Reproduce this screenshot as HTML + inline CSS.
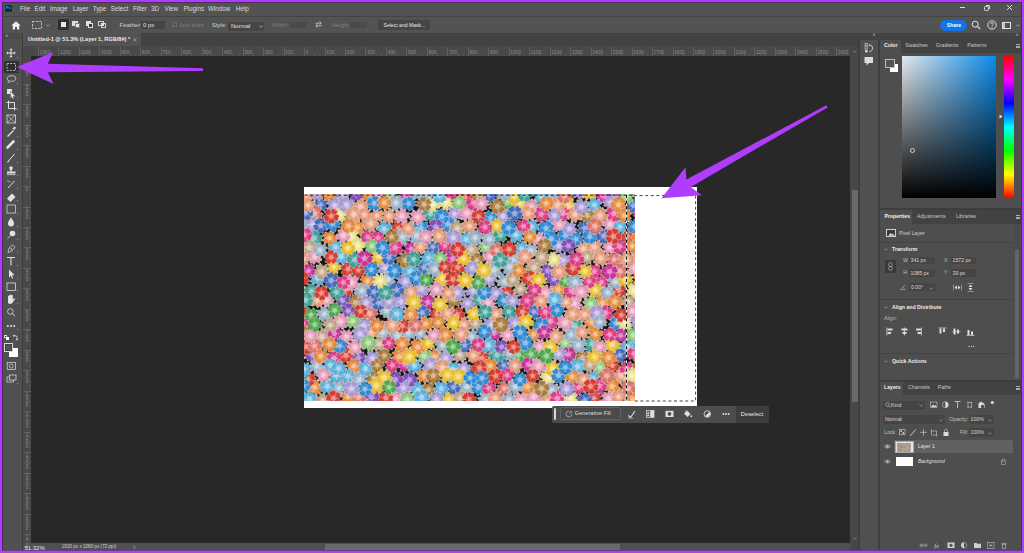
<!DOCTYPE html>
<html><head><meta charset="utf-8">
<style>
*{margin:0;padding:0;box-sizing:border-box}
html,body{width:1024px;height:553px;overflow:hidden;background:#b03cfd}
body{position:relative;font-family:"Liberation Sans",sans-serif;color:#e6e6e6}
.a{position:absolute}
.t{position:absolute;white-space:nowrap;line-height:1}
#app{position:absolute;left:2px;top:2px;width:1020px;height:548px;background:#535353;overflow:hidden}
</style></head><body>
<div id="app">
</div>
<!-- coordinates below are page coordinates -->
<!-- menu bar -->
<div class="a" style="left:2px;top:2px;width:1020px;height:15px;background:#535353"></div>
<div class="a" style="left:2px;top:16px;width:1020px;height:1px;background:#444444"></div>
<!-- options bar -->
<div class="a" style="left:2px;top:17px;width:1020px;height:16px;background:#535353"></div>
<!-- tool bar -->
<div class="a" style="left:2px;top:33px;width:20px;height:517px;background:#505050"></div>
<div class="a" style="left:22px;top:33px;width:1px;height:517px;background:#3c3c3c"></div>
<!-- tab bar -->
<div class="a" style="left:23px;top:33px;width:837px;height:13px;background:#434343"></div>
<div class="a" style="left:23px;top:33px;width:118px;height:13px;background:#535353"></div>
<!-- rulers -->
<div class="a" style="left:23px;top:46px;width:832px;height:10px;background:#494949"></div>
<div class="a" style="left:23px;top:46px;width:8px;height:497px;background:#494949"></div>
<!-- canvas -->
<div class="a" style="left:31px;top:56px;width:819px;height:487px;background:#282828"></div>
<!-- vertical scrollbar -->
<div class="a" style="left:850px;top:46px;width:9px;height:504px;background:#474747"></div>
<div class="a" style="left:852px;top:190px;width:6px;height:212px;background:#6a6a6a"></div>
<!-- status bar -->
<svg class="a" style="left:853px;top:537px" width="4" height="3"><path d="M0.3 0.5L2 2.3L3.7 0.5" stroke="#aaa" stroke-width="0.6" fill="none"/></svg>
<svg class="a" style="left:853px;top:50px" width="4" height="3"><path d="M0.3 0.5L2 2.3L3.7 0.5" stroke="#aaa" stroke-width="0.6" fill="none"/></svg>
<div class="a" style="left:23px;top:543px;width:827px;height:7px;background:#505050"></div>
<div class="a" style="left:325px;top:544px;width:295px;height:6px;background:#6a6a6a"></div>
<!-- icon strip -->
<div class="a" style="left:860px;top:33px;width:20px;height:517px;background:#505050"></div>
<div class="a" style="left:860px;top:33px;width:162px;height:6.5px;background:#434343"></div>
<div class="t" style="left:872.8px;top:33.4px;font-size:4.5px;color:#bbb">&laquo;</div>
<div class="t" style="left:1015.8px;top:33.4px;font-size:4.5px;color:#bbb">&raquo;</div>
<div class="a" style="left:860px;top:39.5px;width:17.5px;height:33.5px;background:#505050"></div>
<div class="a" style="left:858.3px;top:39.5px;width:1.7px;height:511px;background:#3e3e3e"></div>
<div class="a" style="left:877.5px;top:39.5px;width:2.7px;height:511px;background:#3e3e3e"></div>
<svg class="a" style="left:863px;top:42px" width="12" height="28" viewBox="0 0 12 28">
<g fill="#dcdcdc"><rect x="2" y="1.5" width="2.6" height="2.2" fill="none" stroke="#dcdcdc" stroke-width="0.6"/><rect x="2" y="4.8" width="2.6" height="2.2" fill="none" stroke="#dcdcdc" stroke-width="0.6"/><rect x="2" y="8.1" width="2.6" height="2.2"/>
<path d="M6.5 3C8.5 3 9.5 4.5 9.5 6.2C9.5 8 8.3 9.6 6.3 9.8" fill="none" stroke="#dcdcdc" stroke-width="0.9"/><path d="M6 2L7.3 3.5L6 4.5Z"/>
<path d="M1.5 15H10V21H6L3.5 23.5V21H1.5Z"/></g></svg>
<!-- panel column -->
<div class="a" style="left:880.2px;top:39.5px;width:141px;height:511px;background:#4e4e4e"></div>
<!-- color panel -->
<div class="a" style="left:880.2px;top:39.5px;width:141px;height:13.3px;background:#424242"></div>
<div class="a" style="left:880.2px;top:39.5px;width:20.8px;height:13.3px;background:#4e4e4e"></div>
<div style="font-size:5.2px;color:#c8c8c8">
<div class="t" style="left:884px;top:43px;font-weight:bold;color:#f2f2f2">Color</div>
<div class="t" style="left:905.2px;top:43px">Swatches</div>
<div class="t" style="left:935.8px;top:43px">Gradients</div>
<div class="t" style="left:967.2px;top:43px">Patterns</div>
</div>
<div class="a" style="left:1015.5px;top:44px;width:4px;height:3.6px;border-top:0.7px solid #aaa;border-bottom:0.7px solid #aaa"></div>
<div class="a" style="left:1015.5px;top:45.6px;width:4px;height:0.7px;background:#aaa"></div>
<div class="a" style="left:885px;top:58.5px;width:9.8px;height:9.8px;background:#535353;border:1px solid #bdbdbd;box-shadow:0 0 0 0.5px #333 inset"></div>
<div class="a" style="left:890px;top:63.8px;width:8.3px;height:8.1px;background:#fff"></div>
<div class="a" style="left:885px;top:58.5px;width:9.8px;height:9.8px;background:#535353;border:1px solid #bdbdbd"></div>
<div class="a" style="left:901.8px;top:56.4px;width:94.2px;height:141.3px;background:linear-gradient(to top,#000 0%,rgba(0,0,0,0.82) 18%,rgba(0,0,0,0.55) 45%,rgba(0,0,0,0.25) 75%,rgba(0,0,0,0) 100%),linear-gradient(to right,#e6eaee,#0a8ce8)"></div>
<div class="a" style="left:909.5px;top:147.8px;width:5px;height:5px;border:0.8px solid #ccc;border-radius:50%"></div>
<div class="a" style="left:1003.8px;top:56.4px;width:9.8px;height:141.6px;background:linear-gradient(to bottom,#f00 0%,#f0f 16.7%,#00f 33.3%,#0ff 50%,#0f0 66.7%,#ff0 83.3%,#f00 100%)"></div>
<svg class="a" style="left:998.5px;top:114px" width="4" height="5"><path d="M0.5 0.5L3.5 2.5L0.5 4.5Z" fill="#e6e6e6"/></svg>
<!-- gap -->
<div class="a" style="left:880.2px;top:207.8px;width:141px;height:2.6px;background:#3e3e3e"></div>



<!-- menu items -->
<div class="a" style="left:5px;top:5px;width:7px;height:7px;background:#0a2a44;border-radius:1.5px"></div>
<div class="t" style="left:6px;top:6.2px;font-size:4px;font-weight:bold;color:#31a8ff">Ps</div>
<div style="font-size:6.3px;color:#dcdcdc">
<div class="t" style="left:20px;top:5.5px">File</div>
<div class="t" style="left:34.5px;top:5.5px">Edit</div>
<div class="t" style="left:50px;top:5.5px">Image</div>
<div class="t" style="left:72.7px;top:5.5px">Layer</div>
<div class="t" style="left:92.7px;top:5.5px">Type</div>
<div class="t" style="left:110.7px;top:5.5px">Select</div>
<div class="t" style="left:132.9px;top:5.5px">Filter</div>
<div class="t" style="left:151px;top:5.5px">3D</div>
<div class="t" style="left:164.6px;top:5.5px">View</div>
<div class="t" style="left:183.4px;top:5.5px">Plugins</div>
<div class="t" style="left:208px;top:5.5px">Window</div>
<div class="t" style="left:235.7px;top:5.5px">Help</div>
</div>
<!-- window controls -->
<div class="a" style="left:960px;top:7px;width:5px;height:1px;background:#ddd"></div>
<div class="a" style="left:984px;top:6.3px;width:4.5px;height:4.5px;border:1px solid #ddd;border-radius:1.5px"></div>
<div class="a" style="left:985.8px;top:4.8px;width:4.2px;height:4.2px;border-top:1px solid #ddd;border-right:1px solid #ddd;border-radius:0 1.5px 0 0"></div>
<svg class="a" style="left:1006px;top:4px" width="7" height="7"><path d="M1 1L6 6M6 1L1 6" stroke="#ddd" stroke-width="1"/></svg>


<!-- options bar content -->
<svg class="a" style="left:11px;top:20.5px" width="10" height="9" viewBox="0 0 10 9"><path d="M5 0.3L0.3 4.6H1.8V8.6H4V6H6V8.6H8.2V4.6H9.7Z" fill="#f0f0f0"/></svg>
<svg class="a" style="left:31.5px;top:20.5px" width="10" height="8"><rect x="0.5" y="0.5" width="9" height="7" fill="none" stroke="#d0d0d0" stroke-width="0.9" stroke-dasharray="2.2 1.2"/></svg>
<svg class="a" style="left:45.5px;top:23.5px" width="4" height="3"><path d="M0.3 0.5L2 2.3L3.7 0.5" stroke="#bbb" stroke-width="0.7" fill="none"/></svg>
<div class="a" style="left:53px;top:19px;width:1px;height:12px;background:#4f4f4f"></div>
<div class="a" style="left:58.4px;top:19.3px;width:10.2px;height:11px;background:#2f2f2f;border-radius:1px"></div>
<div class="a" style="left:61px;top:22.4px;width:5.2px;height:4.8px;background:#e8e8e8"></div>
<div class="a" style="left:72px;top:21.3px;width:5.5px;height:5px;background:#e0e0e0"></div>
<div class="a" style="left:74.8px;top:23.3px;width:5.5px;height:5px;background:#e8e8e8;border:0.6px solid #777"></div>
<div class="a" style="left:85.5px;top:21.3px;width:5.5px;height:5px;background:#e0e0e0"></div>
<div class="a" style="left:87.8px;top:23.3px;width:5.5px;height:5px;background:#3a3a3a;border:1px solid #e0e0e0"></div>
<div class="a" style="left:98.4px;top:21.3px;width:5.5px;height:5px;border:1px solid #d0d0d0"></div>
<div class="a" style="left:100.6px;top:23.3px;width:5.5px;height:5px;border:1px solid #d0d0d0"></div>
<div class="a" style="left:100.6px;top:23.3px;width:3.3px;height:3px;background:#e0e0e0"></div>
<div class="a" style="left:111px;top:19px;width:1px;height:12px;background:#4f4f4f"></div>
<div style="font-size:6px;color:#cfcfcf">
<div class="t" style="left:119.5px;top:22.2px">Feather:</div>
<div class="a" style="left:141px;top:21px;width:24.4px;height:7.5px;background:#454545"></div>
<div class="t" style="left:143px;top:22.2px;color:#e0e0e0">0 px</div>
<div class="a" style="left:172px;top:22px;width:5px;height:5px;border:0.7px solid #6c6c6c"></div>
<div class="t" style="left:179px;top:22.2px;color:#7c7c7c">Anti-alias</div>
<div class="a" style="left:205px;top:19px;width:1px;height:12px;background:#4f4f4f"></div>
<div class="t" style="left:211.7px;top:22.2px">Style:</div>
<div class="a" style="left:228px;top:21.8px;width:36px;height:8.8px;background:#454545"></div>
<div class="t" style="left:231px;top:23.4px;color:#e0e0e0">Normal</div>
<svg class="a" style="left:258.5px;top:25.2px" width="4" height="3"><path d="M0.3 0.5L2 2.3L3.7 0.5" stroke="#ccc" stroke-width="0.7" fill="none"/></svg>
<div class="a" style="left:268px;top:19px;width:1px;height:12px;background:#4f4f4f"></div>
<div class="t" style="left:272px;top:22.2px;color:#7c7c7c">Width:</div>
<div class="a" style="left:289px;top:21.8px;width:16.5px;height:6.5px;background:#4a4a4a"></div>
<svg class="a" style="left:314.5px;top:21px" width="7" height="7" viewBox="0 0 7 7"><path d="M0.5 2.2H6M4.5 0.7L6.2 2.2L4.5 3.7M6.5 4.8H1M2.5 3.3L0.8 4.8L2.5 6.3" stroke="#cfcfcf" stroke-width="0.8" fill="none"/></svg>
<div class="t" style="left:331.7px;top:22.2px;color:#7c7c7c">Height:</div>
<div class="a" style="left:350px;top:21.8px;width:16.5px;height:6.5px;background:#4a4a4a"></div>
<div class="a" style="left:378px;top:20px;width:51.7px;height:9.5px;background:#454545;border-radius:1.5px"></div>
<div class="t" style="left:383.5px;top:23px;color:#e8e8e8;font-size:5.1px">Select and Mask...</div>
</div>
<!-- share etc -->
<div class="a" style="left:940px;top:19.5px;width:26.8px;height:11px;background:#1473e6;border-radius:5.5px"></div>
<div class="t" style="left:946.8px;top:22.6px;font-size:5.2px;font-weight:bold;color:#fff">Share</div>
<svg class="a" style="left:971px;top:20px" width="10" height="10" viewBox="0 0 10 10"><circle cx="4.2" cy="4.2" r="3" stroke="#e6e6e6" stroke-width="1" fill="none"/><path d="M6.4 6.4L9 9" stroke="#e6e6e6" stroke-width="1.1"/></svg>
<svg class="a" style="left:986.5px;top:20px" width="10" height="10" viewBox="0 0 10 10"><circle cx="5" cy="5" r="4.2" stroke="#e6e6e6" stroke-width="0.9" fill="none"/><path d="M3.6 3.9C3.6 2.2 6.4 2.2 6.4 3.8C6.4 5 5 4.9 5 6.2" stroke="#e6e6e6" stroke-width="0.9" fill="none"/><circle cx="5" cy="7.6" r="0.6" fill="#e6e6e6"/></svg>
<div class="a" style="left:1001.5px;top:21.5px;width:9px;height:7.5px;border:1px solid #e0e0e0"></div>
<div class="a" style="left:1001.5px;top:21.5px;width:3px;height:7.5px;background:#e0e0e0;opacity:0.8"></div>
<svg class="a" style="left:1015.5px;top:24px" width="4" height="3"><path d="M0.3 0.5L2 2.3L3.7 0.5" stroke="#ccc" stroke-width="0.7" fill="none"/></svg>



<!-- toolbar -->
<div class="a" style="left:2px;top:33px;width:20px;height:6px;background:#4a4a4a"></div>
<div class="t" style="left:5.5px;top:33.6px;font-size:4.5px;color:#bbb">&raquo;</div>
<div class="a" style="left:4.3px;top:61px;width:14.5px;height:12px;background:#2f2f2f;border-radius:1px"></div>
<svg class="a" style="left:2px;top:33px" width="20" height="360" viewBox="2 33 20 360">
<g fill="#e2e2e2" stroke="#e2e2e2">
<!-- move y53 -->
<path d="M11 49.5V56.5M7.5 53H14.5" stroke-width="1.00" fill="none"/>
<path d="M11 48.3L9.4 50H12.6ZM11 57.7L9.4 56H12.6ZM6.3 53L8 51.4V54.6ZM15.7 53L14 51.4V54.6Z" stroke="none"/>
<!-- marquee y67 -->
<rect x="7" y="63.5" width="8.5" height="7" fill="none" stroke-width="0.75" stroke-dasharray="2 1.2"/>
<!-- lasso y79 -->
<ellipse cx="11.5" cy="78.5" rx="4.2" ry="2.8" fill="none" stroke-width="0.75"/>
<path d="M8.5 80.8C7.5 82 8.5 83 9.5 82.5" fill="none" stroke-width="0.68"/>
<!-- object selection y93 -->
<rect x="7" y="89" width="5" height="5" stroke="none"/>
<path d="M10.5 91L15.5 96.5L13 96.3L14 98.5L12.8 99L11.8 96.8L10.5 98.5Z" stroke="#535353" stroke-width="0.38"/>
<!-- crop y105 -->
<path d="M8.5 100.5V108.5H16.5M6.5 102.5H14.5V110.5" fill="none" stroke-width="0.98"/>
<!-- frame y119 -->
<rect x="7" y="115" width="8.5" height="8" fill="none" stroke-width="0.75"/>
<path d="M7 115L15.5 123M15.5 115L7 123" stroke-width="0.60" fill="none"/>
<!-- eyedropper y131.5 -->
<path d="M7.5 136.5L13.5 130.5" stroke-width="1.20" fill="none"/>
<path d="M12.5 128.5L14 127C15 126 16.5 127.5 15.5 128.5L14 130Z" stroke="none"/>
<!-- healing y145 -->
<path d="M7.5 147.5L13.5 141.5" stroke-width="2.62" stroke-linecap="round" fill="none"/>
<!-- brush y157.7 -->
<path d="M8 161.5L14.5 154" stroke-width="0.98" fill="none"/>
<path d="M7 162.5L8.2 160.5L9.5 161.8Z" stroke="none"/>
<!-- stamp y171.5 -->
<circle cx="11" cy="168" r="1.8" stroke="none"/>
<rect x="10.2" y="169" width="1.6" height="2.5" stroke="none"/>
<rect x="7" y="171.5" width="8.5" height="2" stroke="none"/>
<rect x="7" y="174.3" width="8.5" height="0.8" stroke="none"/>
<!-- history brush y184 -->
<path d="M8 188L14.5 181" stroke-width="0.98" fill="none"/>
<path d="M7 180.5L10.5 182" stroke-width="0.60" fill="none"/>
<!-- eraser y196 -->
<path d="M7 198.5L12 193.5L15.5 197L10.5 202Z" stroke="none"/>
<!-- gradient y209 -->
<rect x="7" y="205" width="8.5" height="8" fill="none" stroke-width="0.68"/>
<!-- blur y222.4 -->
<path d="M11 217.5C9 220.5 8 222 8 223.5C8 225.3 9.3 226.5 11 226.5C12.7 226.5 14 225.3 14 223.5C14 222 13 220.5 11 217.5Z" stroke="none"/>
<!-- dodge y235 -->
<circle cx="12.5" cy="233.5" r="2.8" stroke="none"/>
<path d="M10.5 235.5L7.5 238.8" stroke-width="0.75" fill="none"/>
<!-- pen y248.8 -->
<path d="M8 252.5L9 248L13 245L15 247L12 251Z" fill="none" stroke-width="0.68"/>
<circle cx="11.2" cy="249" r="0.8" stroke="none"/>
<!-- type y261.4 -->
<path d="M7 257.5H15M11 257.5V265.5" stroke-width="1.05" fill="none"/>
<!-- path selection y274 -->
<path d="M9 269.5L14.5 275L12 275.2L13.2 278L12 278.5L10.8 275.8L9 277.5Z" stroke="none"/>
<!-- rectangle y286.7 -->
<rect x="7" y="283" width="8.5" height="7.5" fill="none" stroke-width="0.75"/>
<!-- hand y300 -->
<path d="M8 299V296.3C8 295.5 9.2 295.5 9.2 296.3V295.3C9.2 294.5 10.4 294.5 10.4 295.3V295C10.4 294.2 11.6 294.2 11.6 295V295.5C11.6 294.7 12.8 294.7 12.8 295.5V299.5L13.8 298.5C14.5 297.8 15.3 298.5 14.8 299.2L12.5 302.8C12 303.5 11.3 304 10.5 304H10C8.8 304 8 303 8 302Z" stroke="none"/>
<!-- zoom y312.6 -->
<circle cx="10.3" cy="311.5" r="2.8" fill="none" stroke-width="0.75"/>
<path d="M12.3 313.5L15 316.2" stroke-width="0.90" fill="none"/>
<!-- dots y326 -->
<circle cx="7.8" cy="326" r="1" stroke="none"/><circle cx="11" cy="326" r="1" stroke="none"/><circle cx="14.2" cy="326" r="1" stroke="none"/>
<!-- swap arrow -->
<path d="M13.8 335.8H15.5C16.5 335.8 17 336.5 17 337.5V339.5" fill="none" stroke-width="0.9"/><path d="M15.8 339L17 340.6L18.2 339Z M14.3 334.6L12.8 335.8L14.3 337Z" stroke="none"/>
<!-- quick mask y366 -->
<rect x="7.2" y="362.5" width="8.2" height="7" fill="none" stroke-width="0.68"/>
<circle cx="11.3" cy="366" r="2" fill="none" stroke-width="0.60"/>
<!-- screen mode y378.6 -->
<rect x="7" y="377" width="6.5" height="5" fill="none" stroke-width="0.68"/>
<rect x="9.5" y="375" width="6.5" height="5" fill="#535353" stroke-width="0.68"/>
</g>
<g fill="#cfcfcf">
<path d="M17 57.8L18 56.8V57.8Z"/><path d="M17 72L18 71V72Z"/><path d="M17 84L18 83V84Z"/><path d="M17 98L18 97V98Z"/>
<path d="M17 110L18 109V110Z"/><path d="M17 137L18 136V137Z"/><path d="M17 150L18 149V150Z"/><path d="M17 163L18 162V163Z"/>
<path d="M17 176L18 175V176Z"/><path d="M17 189L18 188V189Z"/><path d="M17 201L18 200V201Z"/><path d="M17 214L18 213V214Z"/>
<path d="M17 227L18 226V227Z"/><path d="M17 240L18 239V240Z"/><path d="M17 253L18 252V253Z"/><path d="M17 266L18 265V266Z"/>
<path d="M17 279L18 278V279Z"/><path d="M17 291L18 290V291Z"/><path d="M17 304L18 303V304Z"/><path d="M17 330L18 329V330Z"/><path d="M17 384L18 383V384Z"/>
</g>
</svg>
<div class="a" style="left:3.6px;top:335px;width:3px;height:3px;background:#000;border:0.5px solid #ddd"></div>
<div class="a" style="left:5.5px;top:336.8px;width:3px;height:3px;background:#fff"></div>
<div class="a" style="left:8.7px;top:347.9px;width:9.3px;height:9.1px;background:#fff"></div>
<div class="a" style="left:4px;top:343.3px;width:9px;height:9.1px;background:#535353;border:1px solid #d8d8d8;box-shadow:0 0 0 0.6px #333 inset"></div>


<!-- properties panel -->
<div class="a" style="left:880.2px;top:210.4px;width:141px;height:13.3px;background:#424242"></div>
<div class="a" style="left:880.2px;top:210.4px;width:32px;height:13.3px;background:#4e4e4e"></div>
<div style="font-size:5.2px;color:#c8c8c8">
<div class="t" style="left:884.4px;top:214px;font-weight:bold;color:#f2f2f2">Properties</div>
<div class="t" style="left:917px;top:214px">Adjustments</div>
<div class="t" style="left:956px;top:214px">Libraries</div>
</div>
<div class="a" style="left:1015.5px;top:215px;width:4px;height:3.6px;border-top:0.7px solid #aaa;border-bottom:0.7px solid #aaa"></div>
<div class="a" style="left:1015.5px;top:216.6px;width:4px;height:0.7px;background:#aaa"></div>
<div class="a" style="left:886px;top:228.6px;width:9.8px;height:8.8px;background:#3a3a3a;border:0.8px solid #cfcfcf"></div>
<svg class="a" style="left:887.5px;top:230.5px" width="7" height="5"><path d="M0.3 4.7L2.5 2L4 3.5L5 2.5L6.7 4.7Z" fill="#ddd"/></svg>
<div class="t" style="left:899px;top:231.2px;font-size:5.2px;color:#d0d0d0">Pixel Layer</div>
<div class="a" style="left:880.2px;top:242px;width:133px;height:0.8px;background:#434343"></div>
<div style="font-size:5.2px;color:#d8d8d8">
<svg class="a" style="left:883.5px;top:248px" width="4" height="3"><path d="M0.3 0.5L2 2.3L3.7 0.5" stroke="#bbb" stroke-width="0.52" fill="none"/></svg>
<div class="t" style="left:892px;top:247.2px;font-weight:bold;color:#ececec">Transform</div>
<div class="a" style="left:885px;top:260px;width:11px;height:13px;background:#3a3a3a;border-radius:1px"></div>
<svg class="a" style="left:888px;top:262px" width="5" height="9"><path d="M2.5 0.8C4 0.8 4.2 1.5 4.2 2.5V3.5C4.2 4.2 3.5 4.5 2.5 4.5C1.5 4.5 0.8 4.2 0.8 3.5V2.5C0.8 1.5 1 0.8 2.5 0.8ZM2.5 4.5C4 4.5 4.2 5.2 4.2 6.2V6.8C4.2 7.8 3.5 8.2 2.5 8.2C1.5 8.2 0.8 7.8 0.8 6.8V6.2C0.8 5.2 1 4.5 2.5 4.5" stroke="#ddd" stroke-width="0.52" fill="none"/></svg>
<div class="t" style="left:903px;top:257.8px;color:#bbb">W</div>
<div class="a" style="left:908.8px;top:256.5px;width:26px;height:7.5px;background:#454545"></div>
<div class="t" style="left:910.5px;top:258px">341 px</div>
<div class="t" style="left:944px;top:257.8px;color:#bbb">X</div>
<div class="a" style="left:951px;top:256.5px;width:24.5px;height:7.5px;background:#454545"></div>
<div class="t" style="left:952.5px;top:258px">1572 px</div>
<div class="t" style="left:903.3px;top:270.3px;color:#bbb">H</div>
<div class="a" style="left:908.8px;top:269px;width:26px;height:7.5px;background:#454545"></div>
<div class="t" style="left:910.5px;top:270.5px">1085 px</div>
<div class="t" style="left:944px;top:270.3px;color:#bbb">Y</div>
<div class="a" style="left:951px;top:269px;width:24.5px;height:7.5px;background:#454545"></div>
<div class="t" style="left:952.5px;top:270.5px">39 px</div>
<svg class="a" style="left:900px;top:284px" width="6" height="6"><path d="M5.5 0.5L0.5 5.5H5.8M3 3.2C3.8 3.8 4 4.5 4 5.5" stroke="#ccc" stroke-width="0.45" fill="none"/></svg>
<div class="a" style="left:909px;top:283px;width:26.8px;height:8px;background:#454545"></div>
<div class="t" style="left:911px;top:284.8px">0.00&deg;</div>
<svg class="a" style="left:928.5px;top:286.5px" width="4" height="3"><path d="M0.3 0.5L2 2.3L3.7 0.5" stroke="#bbb" stroke-width="0.52" fill="none"/></svg>
<svg class="a" style="left:952.5px;top:283.5px" width="9" height="7"><path d="M0.5 0.5V6.5M8.5 0.5V6.5" stroke="#ddd" stroke-width="0.45"/><path d="M1.5 3.5L4 1.5V5.5ZM7.5 3.5L5 1.5V5.5Z" fill="#ddd"/></svg>
<svg class="a" style="left:967px;top:283px" width="7" height="9"><path d="M0.5 0.5H6.5M0.5 8.5H6.5" stroke="#ddd" stroke-width="0.45"/><path d="M3.5 1.5L1.5 4H5.5ZM3.5 7.5L1.5 5H5.5Z" fill="#ddd"/></svg>
<div class="a" style="left:880.2px;top:298.5px;width:133px;height:0.8px;background:#434343"></div>
<svg class="a" style="left:883.5px;top:306px" width="4" height="3"><path d="M0.3 0.5L2 2.3L3.7 0.5" stroke="#bbb" stroke-width="0.52" fill="none"/></svg>
<div class="t" style="left:892px;top:305.2px;font-weight:bold;color:#ececec">Align and Distribute</div>
<div class="t" style="left:884px;top:315.5px;color:#bbb">Align:</div>
</div>
<svg class="a" style="left:884px;top:326px" width="92" height="24" viewBox="884 326 92 24">
<g fill="#dcdcdc">
<rect x="886.5" y="327.5" width="0.7" height="8"/><rect x="887.5" y="328.5" width="5" height="2"/><rect x="887.5" y="332" width="3.5" height="2"/>
<rect x="904.2" y="327.5" width="0.7" height="8"/><rect x="901.5" y="328.5" width="6" height="2"/><rect x="902.5" y="332" width="4" height="2"/>
<rect x="921" y="327.5" width="0.7" height="8"/><rect x="916" y="328.5" width="5" height="2"/><rect x="917.5" y="332" width="3.5" height="2"/>
<rect x="938.5" y="327.6" width="8" height="0.7"/><rect x="939.5" y="328.5" width="2" height="5"/><rect x="943" y="328.5" width="2" height="3.5"/>
<rect x="952.5" y="331.5" width="8" height="0.7"/><rect x="953.5" y="328.5" width="2" height="6"/><rect x="957" y="329.5" width="2" height="4"/>
<rect x="966.5" y="335" width="8" height="0.7"/><rect x="967.5" y="330" width="2" height="5"/><rect x="971" y="331.5" width="2" height="3.5"/>
<circle cx="969" cy="346.4" r="0.6"/><circle cx="971.3" cy="346.4" r="0.6"/><circle cx="973.6" cy="346.4" r="0.6"/>
</g></svg>
<div class="a" style="left:880.2px;top:352.8px;width:133px;height:0.8px;background:#434343"></div>
<svg class="a" style="left:883.5px;top:360px" width="4" height="3"><path d="M0.3 0.5L2 2.3L3.7 0.5" stroke="#bbb" stroke-width="0.52" fill="none"/></svg>
<div class="t" style="left:892px;top:358.8px;font-size:5.2px;font-weight:bold;color:#ececec">Quick Actions</div>
<div class="a" style="left:1014.6px;top:224px;width:5px;height:156px;background:#4a4a4a"></div>
<div class="a" style="left:1014.8px;top:248.8px;width:4.6px;height:130px;background:#646464;border-radius:2px"></div>
<!-- gap -->
<div class="a" style="left:880.2px;top:379.6px;width:141px;height:2px;background:#3e3e3e"></div>


<!-- layers panel -->
<div class="a" style="left:880.2px;top:381.6px;width:141px;height:13.2px;background:#424242"></div>
<div class="a" style="left:880.2px;top:381.6px;width:23px;height:13.2px;background:#4e4e4e"></div>
<div style="font-size:5.2px;color:#c8c8c8">
<div class="t" style="left:884px;top:385.2px;font-weight:bold;color:#f2f2f2">Layers</div>
<div class="t" style="left:908px;top:385.2px">Channels</div>
<div class="t" style="left:937.7px;top:385.2px">Paths</div>
</div>
<div class="a" style="left:1015.5px;top:386px;width:4px;height:3.6px;border-top:0.7px solid #aaa;border-bottom:0.7px solid #aaa"></div>
<div class="a" style="left:1015.5px;top:387.6px;width:4px;height:0.7px;background:#aaa"></div>
<div style="font-size:5.2px;color:#d8d8d8">
<div class="a" style="left:882.5px;top:400.8px;width:42px;height:8.9px;background:#454545"></div>
<svg class="a" style="left:884.5px;top:402.2px" width="6" height="6"><circle cx="2.5" cy="2.5" r="1.8" stroke="#ddd" stroke-width="0.52" fill="none"/><path d="M3.8 3.8L5.6 5.6" stroke="#ddd" stroke-width="0.60"/></svg>
<div class="t" style="left:891px;top:402.5px">Kind</div>
<svg class="a" style="left:918.5px;top:404px" width="4" height="3"><path d="M0.3 0.5L2 2.3L3.7 0.5" stroke="#bbb" stroke-width="0.52" fill="none"/></svg>
</div>
<svg class="a" style="left:928px;top:399px" width="70" height="12" viewBox="928 399 70 12">
<g fill="#dcdcdc" stroke="#dcdcdc">
<rect x="930.5" y="402" width="6.5" height="5.5" fill="none" stroke-width="0.52"/><path d="M931 407L933 404.5L934.5 406L935.5 405L936.8 407Z" stroke="none"/>
<circle cx="945.3" cy="404.7" r="3" fill="none" stroke-width="0.52"/><path d="M945.3 401.7A3 3 0 0 1 945.3 407.7Z" stroke="none"/>
<path d="M954.5 401.5H960.5M957.5 401.5V408" stroke-width="0.75" fill="none"/>
<path d="M967.5 402.5H972M967.5 407H972M968 401.5V408M971.5 401.5V408" stroke-width="0.52" fill="none"/>
<path d="M978.5 408V403.5L981 401.5L984.5 404V408Z" stroke="none"/><rect x="981" y="405" width="3" height="3" fill="#535353" stroke="none"/>
<circle cx="992.3" cy="402.5" r="1.6" stroke="none"/>
</g></svg>
<div style="font-size:5.2px;color:#d8d8d8">
<div class="a" style="left:882.5px;top:414.6px;width:62.8px;height:9.3px;background:#454545"></div>
<div class="t" style="left:885px;top:416.7px">Normal</div>
<svg class="a" style="left:939px;top:418.5px" width="4" height="3"><path d="M0.3 0.5L2 2.3L3.7 0.5" stroke="#bbb" stroke-width="0.52" fill="none"/></svg>
<div class="t" style="left:949.3px;top:416.7px;color:#c0c0c0">Opacity:</div>
<div class="a" style="left:969px;top:414.6px;width:25px;height:9.3px;background:#454545"></div>
<div class="t" style="left:970.5px;top:416.7px">100%</div>
<svg class="a" style="left:987.5px;top:418.5px" width="4" height="3"><path d="M0.3 0.5L2 2.3L3.7 0.5" stroke="#bbb" stroke-width="0.52" fill="none"/></svg>
<div class="t" style="left:884px;top:429.5px;color:#c0c0c0">Lock:</div>
<div class="t" style="left:960px;top:429.5px;color:#c0c0c0">Fill:</div>
<div class="a" style="left:969px;top:428px;width:25px;height:9.3px;background:#454545"></div>
<div class="t" style="left:970.5px;top:429.8px">100%</div>
<svg class="a" style="left:987.5px;top:431.8px" width="4" height="3"><path d="M0.3 0.5L2 2.3L3.7 0.5" stroke="#bbb" stroke-width="0.52" fill="none"/></svg>
</div>
<svg class="a" style="left:898px;top:427px" width="52" height="11" viewBox="898 427 52 11">
<g fill="#dcdcdc" stroke="#dcdcdc">
<rect x="899.5" y="429.3" width="5.5" height="5.5" fill="none" stroke-width="0.52"/><rect x="900.5" y="430.3" width="1.6" height="1.6" stroke="none"/><rect x="902.5" y="432.3" width="1.6" height="1.6" stroke="none"/>
<path d="M910 436L915.8 429.5" stroke-width="0.83" fill="none"/>
<path d="M923.5 428.8V435.8M920 432.3H927" stroke-width="0.60" fill="none"/>
<path d="M931.5 429.5V435H937M931 431H936.5V436.5" stroke-width="0.52" fill="none"/>
<rect x="943.5" y="432" width="5" height="4" stroke="none"/><path d="M944.5 432V430.5C944.5 429 947.5 429 947.5 430.5V432" fill="none" stroke-width="0.52"/>
</g></svg>
<!-- layer rows -->
<div class="a" style="left:893.5px;top:440.2px;width:119.5px;height:12.8px;background:#616161"></div>
<svg class="a" style="left:884px;top:444px" width="7" height="5"><path d="M0.3 2.5C1.5 0.5 5.5 0.5 6.7 2.5C5.5 4.5 1.5 4.5 0.3 2.5Z" fill="none" stroke="#e0e0e0" stroke-width="0.6"/><circle cx="3.5" cy="2.5" r="1.1" fill="#e0e0e0"/></svg>
<div class="a" style="left:895.2px;top:441.2px;width:19px;height:11.6px;border:0.8px solid #a8a8a8;background:#e8e4e4"></div>
<svg class="a" style="left:897.2px;top:443.2px" width="13.5" height="8.8" viewBox="0 0 13.5 8.8"><rect width="13.5" height="8.8" fill="#b09070"/><rect x="0.0" y="0.0" width="1.3" height="1.3" fill="#bf7b9b"/><rect x="0.0" y="1.2" width="1.3" height="1.3" fill="#83a983"/><rect x="0.0" y="2.5" width="1.3" height="1.3" fill="#9683af"/><rect x="0.0" y="3.8" width="1.3" height="1.3" fill="#c5b376"/><rect x="0.0" y="5.0" width="1.3" height="1.3" fill="#89acbf"/><rect x="0.0" y="6.2" width="1.3" height="1.3" fill="#b3a79b"/><rect x="0.0" y="7.5" width="1.3" height="1.3" fill="#9cb696"/><rect x="1.2" y="0.0" width="1.3" height="1.3" fill="#a9a3bc"/><rect x="1.2" y="1.2" width="1.3" height="1.3" fill="#7ca6a3"/><rect x="1.2" y="2.5" width="1.3" height="1.3" fill="#83a983"/><rect x="1.2" y="3.8" width="1.3" height="1.3" fill="#c39c7c"/><rect x="1.2" y="5.0" width="1.3" height="1.3" fill="#9cb696"/><rect x="1.2" y="6.2" width="1.3" height="1.3" fill="#bc7b76"/><rect x="1.2" y="7.5" width="1.3" height="1.3" fill="#b3a79b"/><rect x="2.5" y="0.0" width="1.3" height="1.3" fill="#b676a3"/><rect x="2.5" y="1.2" width="1.3" height="1.3" fill="#a9a3bc"/><rect x="2.5" y="2.5" width="1.3" height="1.3" fill="#c3a396"/><rect x="2.5" y="3.8" width="1.3" height="1.3" fill="#9683af"/><rect x="2.5" y="5.0" width="1.3" height="1.3" fill="#bf7b9b"/><rect x="2.5" y="6.2" width="1.3" height="1.3" fill="#bf7b9b"/><rect x="2.5" y="7.5" width="1.3" height="1.3" fill="#a3acb6"/><rect x="3.8" y="0.0" width="1.3" height="1.3" fill="#a9a3bc"/><rect x="3.8" y="1.2" width="1.3" height="1.3" fill="#9683af"/><rect x="3.8" y="2.5" width="1.3" height="1.3" fill="#b676a3"/><rect x="3.8" y="3.8" width="1.3" height="1.3" fill="#9683af"/><rect x="3.8" y="5.0" width="1.3" height="1.3" fill="#a9a3bc"/><rect x="3.8" y="6.2" width="1.3" height="1.3" fill="#89acbf"/><rect x="3.8" y="7.5" width="1.3" height="1.3" fill="#7ca6a3"/><rect x="5.0" y="0.0" width="1.3" height="1.3" fill="#bf938f"/><rect x="5.0" y="1.2" width="1.3" height="1.3" fill="#c5b376"/><rect x="5.0" y="2.5" width="1.3" height="1.3" fill="#bf7b9b"/><rect x="5.0" y="3.8" width="1.3" height="1.3" fill="#7ca6a3"/><rect x="5.0" y="5.0" width="1.3" height="1.3" fill="#c5b376"/><rect x="5.0" y="6.2" width="1.3" height="1.3" fill="#bf938f"/><rect x="5.0" y="7.5" width="1.3" height="1.3" fill="#b3a79b"/><rect x="6.2" y="0.0" width="1.3" height="1.3" fill="#a9a3bc"/><rect x="6.2" y="1.2" width="1.3" height="1.3" fill="#89acbf"/><rect x="6.2" y="2.5" width="1.3" height="1.3" fill="#a3acb6"/><rect x="6.2" y="3.8" width="1.3" height="1.3" fill="#bc7b76"/><rect x="6.2" y="5.0" width="1.3" height="1.3" fill="#a9967c"/><rect x="6.2" y="6.2" width="1.3" height="1.3" fill="#c3a3af"/><rect x="6.2" y="7.5" width="1.3" height="1.3" fill="#c39c7c"/><rect x="7.5" y="0.0" width="1.3" height="1.3" fill="#c5b376"/><rect x="7.5" y="1.2" width="1.3" height="1.3" fill="#c3a3af"/><rect x="7.5" y="2.5" width="1.3" height="1.3" fill="#83a983"/><rect x="7.5" y="3.8" width="1.3" height="1.3" fill="#bc7b76"/><rect x="7.5" y="5.0" width="1.3" height="1.3" fill="#c3a396"/><rect x="7.5" y="6.2" width="1.3" height="1.3" fill="#c3a3af"/><rect x="7.5" y="7.5" width="1.3" height="1.3" fill="#bc7b76"/><rect x="8.8" y="0.0" width="1.3" height="1.3" fill="#b676a3"/><rect x="8.8" y="1.2" width="1.3" height="1.3" fill="#bf938f"/><rect x="8.8" y="2.5" width="1.3" height="1.3" fill="#c3a396"/><rect x="8.8" y="3.8" width="1.3" height="1.3" fill="#a9a3bc"/><rect x="8.8" y="5.0" width="1.3" height="1.3" fill="#9cb696"/><rect x="8.8" y="6.2" width="1.3" height="1.3" fill="#a3acb6"/><rect x="8.8" y="7.5" width="1.3" height="1.3" fill="#b3a79b"/><rect x="10.0" y="0.0" width="1.3" height="1.3" fill="#7f8fb3"/><rect x="10.0" y="1.2" width="1.3" height="1.3" fill="#89acbf"/><rect x="10.0" y="2.5" width="1.3" height="1.3" fill="#a3acb6"/><rect x="10.0" y="3.8" width="1.3" height="1.3" fill="#c3a3af"/><rect x="10.0" y="5.0" width="1.3" height="1.3" fill="#b3a79b"/><rect x="10.0" y="6.2" width="1.3" height="1.3" fill="#769cbc"/><rect x="10.0" y="7.5" width="1.3" height="1.3" fill="#89acbf"/><rect x="11.2" y="0.0" width="1.3" height="1.3" fill="#a3acb6"/><rect x="11.2" y="1.2" width="1.3" height="1.3" fill="#c3a3af"/><rect x="11.2" y="2.5" width="1.3" height="1.3" fill="#83a983"/><rect x="11.2" y="3.8" width="1.3" height="1.3" fill="#769cbc"/><rect x="11.2" y="5.0" width="1.3" height="1.3" fill="#b3a79b"/><rect x="11.2" y="6.2" width="1.3" height="1.3" fill="#c5b376"/><rect x="11.2" y="7.5" width="1.3" height="1.3" fill="#7f8fb3"/><rect x="12.5" y="0.0" width="1.3" height="1.3" fill="#89acbf"/><rect x="12.5" y="1.2" width="1.3" height="1.3" fill="#c39c7c"/><rect x="12.5" y="2.5" width="1.3" height="1.3" fill="#bc7b76"/><rect x="12.5" y="3.8" width="1.3" height="1.3" fill="#c5b376"/><rect x="12.5" y="5.0" width="1.3" height="1.3" fill="#a9a3bc"/><rect x="12.5" y="6.2" width="1.3" height="1.3" fill="#bf7b9b"/><rect x="12.5" y="7.5" width="1.3" height="1.3" fill="#c3a396"/></svg>
<div class="t" style="left:918px;top:444.4px;font-size:5px;color:#e6e6e6">Layer 1</div>
<svg class="a" style="left:884px;top:458.5px" width="7" height="5"><path d="M0.3 2.5C1.5 0.5 5.5 0.5 6.7 2.5C5.5 4.5 1.5 4.5 0.3 2.5Z" fill="none" stroke="#e0e0e0" stroke-width="0.45"/><circle cx="3.5" cy="2.5" r="1.1" fill="#e0e0e0"/></svg>
<div class="a" style="left:896.4px;top:456.6px;width:16.4px;height:9px;background:#fff"></div>
<div class="t" style="left:918px;top:458.6px;font-size:5px;font-style:italic;color:#e0e0e0">Background</div>
<svg class="a" style="left:1000.5px;top:457.5px" width="5" height="7"><path d="M1.2 3V2C1.2 0.4 3.8 0.4 3.8 2V3" fill="none" stroke="#cfcfcf" stroke-width="0.45"/><rect x="0.5" y="3" width="4" height="3.5" fill="none" stroke="#cfcfcf" stroke-width="0.45"/></svg>
<!-- layers bottom icons -->
<svg class="a" style="left:918px;top:540px" width="92" height="10" viewBox="918 540 92 10">
<g fill="#cfcfcf" stroke="#cfcfcf">
<path d="M920.5 545.3H922.5M924.5 545.3H926.5" stroke-width="0.52" fill="none"/><rect x="920" y="544" width="3" height="2.6" rx="1.3" fill="none" stroke-width="0.45"/><rect x="924" y="544" width="3" height="2.6" rx="1.3" fill="none" stroke-width="0.45"/>
<text x="934.3" y="547.8" font-size="6.5" font-style="italic" font-family="Liberation Serif" stroke="none">fx</text>
<rect x="947.5" y="542.5" width="7" height="5.5" stroke="none"/><circle cx="951" cy="545.3" r="1.6" fill="#535353" stroke="none"/>
<circle cx="964" cy="545.2" r="2.8" fill="none" stroke-width="0.52"/><path d="M964 542.4A2.8 2.8 0 0 0 964 548Z" stroke="none"/>
<path d="M974 543H976.5L977.3 543.8H981V548H974Z" stroke="none"/>
<rect x="987.5" y="542.5" width="6.5" height="5.8" fill="none" stroke-width="0.52"/><path d="M989 545.4H992.5M990.8 543.8V547" stroke-width="0.52" fill="none"/>
<path d="M1001.5 543.5H1006.5" stroke-width="0.52"/><rect x="1002.2" y="544.2" width="3.6" height="4.3" fill="none" stroke-width="0.52"/>
</g></svg>

<!-- tab -->
<div class="t" style="left:28px;top:37.2px;font-size:5.6px;font-weight:bold;color:#ececec">Untitled-1 @ 51.3% (Layer 1, RGB/8#) *</div>
<svg class="a" style="left:132.8px;top:37.7px" width="4" height="4"><path d="M0.4 0.4L3.6 3.6M3.6 0.4L0.4 3.6" stroke="#aaa" stroke-width="0.7"/></svg>
<div class="a" style="left:37.9px;top:46.5px;width:0.7px;height:9.5px;background:#5f5f5f"></div><div class="a" style="left:43.0px;top:54.5px;width:0.6px;height:1.5px;background:#595959"></div><div class="a" style="left:48.1px;top:53.5px;width:0.6px;height:2.5px;background:#595959"></div><div class="a" style="left:53.2px;top:54.5px;width:0.6px;height:1.5px;background:#595959"></div><div class="t" style="left:39.5px;top:51.3px;font-size:4.8px;color:#8c8c8c">1300</div><div class="a" style="left:58.4px;top:46.5px;width:0.7px;height:9.5px;background:#5f5f5f"></div><div class="a" style="left:63.5px;top:54.5px;width:0.6px;height:1.5px;background:#595959"></div><div class="a" style="left:68.6px;top:53.5px;width:0.6px;height:2.5px;background:#595959"></div><div class="a" style="left:73.7px;top:54.5px;width:0.6px;height:1.5px;background:#595959"></div><div class="t" style="left:60.0px;top:51.3px;font-size:4.8px;color:#8c8c8c">1200</div><div class="a" style="left:78.8px;top:46.5px;width:0.7px;height:9.5px;background:#5f5f5f"></div><div class="a" style="left:83.9px;top:54.5px;width:0.6px;height:1.5px;background:#595959"></div><div class="a" style="left:89.1px;top:53.5px;width:0.6px;height:2.5px;background:#595959"></div><div class="a" style="left:94.2px;top:54.5px;width:0.6px;height:1.5px;background:#595959"></div><div class="t" style="left:80.4px;top:51.3px;font-size:4.8px;color:#8c8c8c">1100</div><div class="a" style="left:99.3px;top:46.5px;width:0.7px;height:9.5px;background:#5f5f5f"></div><div class="a" style="left:104.4px;top:54.5px;width:0.6px;height:1.5px;background:#595959"></div><div class="a" style="left:109.5px;top:53.5px;width:0.6px;height:2.5px;background:#595959"></div><div class="a" style="left:114.7px;top:54.5px;width:0.6px;height:1.5px;background:#595959"></div><div class="t" style="left:100.9px;top:51.3px;font-size:4.8px;color:#8c8c8c">1000</div><div class="a" style="left:119.8px;top:46.5px;width:0.7px;height:9.5px;background:#5f5f5f"></div><div class="a" style="left:124.9px;top:54.5px;width:0.6px;height:1.5px;background:#595959"></div><div class="a" style="left:130.0px;top:53.5px;width:0.6px;height:2.5px;background:#595959"></div><div class="a" style="left:135.1px;top:54.5px;width:0.6px;height:1.5px;background:#595959"></div><div class="t" style="left:121.4px;top:51.3px;font-size:4.8px;color:#8c8c8c">900</div><div class="a" style="left:140.2px;top:46.5px;width:0.7px;height:9.5px;background:#5f5f5f"></div><div class="a" style="left:145.4px;top:54.5px;width:0.6px;height:1.5px;background:#595959"></div><div class="a" style="left:150.5px;top:53.5px;width:0.6px;height:2.5px;background:#595959"></div><div class="a" style="left:155.6px;top:54.5px;width:0.6px;height:1.5px;background:#595959"></div><div class="t" style="left:141.8px;top:51.3px;font-size:4.8px;color:#8c8c8c">800</div><div class="a" style="left:160.7px;top:46.5px;width:0.7px;height:9.5px;background:#5f5f5f"></div><div class="a" style="left:165.8px;top:54.5px;width:0.6px;height:1.5px;background:#595959"></div><div class="a" style="left:170.9px;top:53.5px;width:0.6px;height:2.5px;background:#595959"></div><div class="a" style="left:176.1px;top:54.5px;width:0.6px;height:1.5px;background:#595959"></div><div class="t" style="left:162.3px;top:51.3px;font-size:4.8px;color:#8c8c8c">700</div><div class="a" style="left:181.2px;top:46.5px;width:0.7px;height:9.5px;background:#5f5f5f"></div><div class="a" style="left:186.3px;top:54.5px;width:0.6px;height:1.5px;background:#595959"></div><div class="a" style="left:191.4px;top:53.5px;width:0.6px;height:2.5px;background:#595959"></div><div class="a" style="left:196.5px;top:54.5px;width:0.6px;height:1.5px;background:#595959"></div><div class="t" style="left:182.8px;top:51.3px;font-size:4.8px;color:#8c8c8c">600</div><div class="a" style="left:201.7px;top:46.5px;width:0.7px;height:9.5px;background:#5f5f5f"></div><div class="a" style="left:206.8px;top:54.5px;width:0.6px;height:1.5px;background:#595959"></div><div class="a" style="left:211.9px;top:53.5px;width:0.6px;height:2.5px;background:#595959"></div><div class="a" style="left:217.0px;top:54.5px;width:0.6px;height:1.5px;background:#595959"></div><div class="t" style="left:203.2px;top:51.3px;font-size:4.8px;color:#8c8c8c">500</div><div class="a" style="left:222.1px;top:46.5px;width:0.7px;height:9.5px;background:#5f5f5f"></div><div class="a" style="left:227.2px;top:54.5px;width:0.6px;height:1.5px;background:#595959"></div><div class="a" style="left:232.4px;top:53.5px;width:0.6px;height:2.5px;background:#595959"></div><div class="a" style="left:237.5px;top:54.5px;width:0.6px;height:1.5px;background:#595959"></div><div class="t" style="left:223.7px;top:51.3px;font-size:4.8px;color:#8c8c8c">400</div><div class="a" style="left:242.6px;top:46.5px;width:0.7px;height:9.5px;background:#5f5f5f"></div><div class="a" style="left:247.7px;top:54.5px;width:0.6px;height:1.5px;background:#595959"></div><div class="a" style="left:252.8px;top:53.5px;width:0.6px;height:2.5px;background:#595959"></div><div class="a" style="left:257.9px;top:54.5px;width:0.6px;height:1.5px;background:#595959"></div><div class="t" style="left:244.2px;top:51.3px;font-size:4.8px;color:#8c8c8c">300</div><div class="a" style="left:263.1px;top:46.5px;width:0.7px;height:9.5px;background:#5f5f5f"></div><div class="a" style="left:268.2px;top:54.5px;width:0.6px;height:1.5px;background:#595959"></div><div class="a" style="left:273.3px;top:53.5px;width:0.6px;height:2.5px;background:#595959"></div><div class="a" style="left:278.4px;top:54.5px;width:0.6px;height:1.5px;background:#595959"></div><div class="t" style="left:264.7px;top:51.3px;font-size:4.8px;color:#8c8c8c">200</div><div class="a" style="left:283.5px;top:46.5px;width:0.7px;height:9.5px;background:#5f5f5f"></div><div class="a" style="left:288.6px;top:54.5px;width:0.6px;height:1.5px;background:#595959"></div><div class="a" style="left:293.8px;top:53.5px;width:0.6px;height:2.5px;background:#595959"></div><div class="a" style="left:298.9px;top:54.5px;width:0.6px;height:1.5px;background:#595959"></div><div class="t" style="left:285.1px;top:51.3px;font-size:4.8px;color:#8c8c8c">100</div><div class="a" style="left:304.0px;top:46.5px;width:0.7px;height:9.5px;background:#5f5f5f"></div><div class="a" style="left:309.1px;top:54.5px;width:0.6px;height:1.5px;background:#595959"></div><div class="a" style="left:314.2px;top:53.5px;width:0.6px;height:2.5px;background:#595959"></div><div class="a" style="left:319.4px;top:54.5px;width:0.6px;height:1.5px;background:#595959"></div><div class="t" style="left:305.6px;top:51.3px;font-size:4.8px;color:#8c8c8c">0</div><div class="a" style="left:324.5px;top:46.5px;width:0.7px;height:9.5px;background:#5f5f5f"></div><div class="a" style="left:329.6px;top:54.5px;width:0.6px;height:1.5px;background:#595959"></div><div class="a" style="left:334.7px;top:53.5px;width:0.6px;height:2.5px;background:#595959"></div><div class="a" style="left:339.8px;top:54.5px;width:0.6px;height:1.5px;background:#595959"></div><div class="t" style="left:326.1px;top:51.3px;font-size:4.8px;color:#8c8c8c">100</div><div class="a" style="left:344.9px;top:46.5px;width:0.7px;height:9.5px;background:#5f5f5f"></div><div class="a" style="left:350.1px;top:54.5px;width:0.6px;height:1.5px;background:#595959"></div><div class="a" style="left:355.2px;top:53.5px;width:0.6px;height:2.5px;background:#595959"></div><div class="a" style="left:360.3px;top:54.5px;width:0.6px;height:1.5px;background:#595959"></div><div class="t" style="left:346.5px;top:51.3px;font-size:4.8px;color:#8c8c8c">200</div><div class="a" style="left:365.4px;top:46.5px;width:0.7px;height:9.5px;background:#5f5f5f"></div><div class="a" style="left:370.5px;top:54.5px;width:0.6px;height:1.5px;background:#595959"></div><div class="a" style="left:375.6px;top:53.5px;width:0.6px;height:2.5px;background:#595959"></div><div class="a" style="left:380.8px;top:54.5px;width:0.6px;height:1.5px;background:#595959"></div><div class="t" style="left:367.0px;top:51.3px;font-size:4.8px;color:#8c8c8c">300</div><div class="a" style="left:385.9px;top:46.5px;width:0.7px;height:9.5px;background:#5f5f5f"></div><div class="a" style="left:391.0px;top:54.5px;width:0.6px;height:1.5px;background:#595959"></div><div class="a" style="left:396.1px;top:53.5px;width:0.6px;height:2.5px;background:#595959"></div><div class="a" style="left:401.2px;top:54.5px;width:0.6px;height:1.5px;background:#595959"></div><div class="t" style="left:387.5px;top:51.3px;font-size:4.8px;color:#8c8c8c">400</div><div class="a" style="left:406.4px;top:46.5px;width:0.7px;height:9.5px;background:#5f5f5f"></div><div class="a" style="left:411.5px;top:54.5px;width:0.6px;height:1.5px;background:#595959"></div><div class="a" style="left:416.6px;top:53.5px;width:0.6px;height:2.5px;background:#595959"></div><div class="a" style="left:421.7px;top:54.5px;width:0.6px;height:1.5px;background:#595959"></div><div class="t" style="left:408.0px;top:51.3px;font-size:4.8px;color:#8c8c8c">500</div><div class="a" style="left:426.8px;top:46.5px;width:0.7px;height:9.5px;background:#5f5f5f"></div><div class="a" style="left:431.9px;top:54.5px;width:0.6px;height:1.5px;background:#595959"></div><div class="a" style="left:437.1px;top:53.5px;width:0.6px;height:2.5px;background:#595959"></div><div class="a" style="left:442.2px;top:54.5px;width:0.6px;height:1.5px;background:#595959"></div><div class="t" style="left:428.4px;top:51.3px;font-size:4.8px;color:#8c8c8c">600</div><div class="a" style="left:447.3px;top:46.5px;width:0.7px;height:9.5px;background:#5f5f5f"></div><div class="a" style="left:452.4px;top:54.5px;width:0.6px;height:1.5px;background:#595959"></div><div class="a" style="left:457.5px;top:53.5px;width:0.6px;height:2.5px;background:#595959"></div><div class="a" style="left:462.6px;top:54.5px;width:0.6px;height:1.5px;background:#595959"></div><div class="t" style="left:448.9px;top:51.3px;font-size:4.8px;color:#8c8c8c">700</div><div class="a" style="left:467.8px;top:46.5px;width:0.7px;height:9.5px;background:#5f5f5f"></div><div class="a" style="left:472.9px;top:54.5px;width:0.6px;height:1.5px;background:#595959"></div><div class="a" style="left:478.0px;top:53.5px;width:0.6px;height:2.5px;background:#595959"></div><div class="a" style="left:483.1px;top:54.5px;width:0.6px;height:1.5px;background:#595959"></div><div class="t" style="left:469.4px;top:51.3px;font-size:4.8px;color:#8c8c8c">800</div><div class="a" style="left:488.2px;top:46.5px;width:0.7px;height:9.5px;background:#5f5f5f"></div><div class="a" style="left:493.3px;top:54.5px;width:0.6px;height:1.5px;background:#595959"></div><div class="a" style="left:498.5px;top:53.5px;width:0.6px;height:2.5px;background:#595959"></div><div class="a" style="left:503.6px;top:54.5px;width:0.6px;height:1.5px;background:#595959"></div><div class="t" style="left:489.8px;top:51.3px;font-size:4.8px;color:#8c8c8c">900</div><div class="a" style="left:508.7px;top:46.5px;width:0.7px;height:9.5px;background:#5f5f5f"></div><div class="a" style="left:513.8px;top:54.5px;width:0.6px;height:1.5px;background:#595959"></div><div class="a" style="left:518.9px;top:53.5px;width:0.6px;height:2.5px;background:#595959"></div><div class="a" style="left:524.1px;top:54.5px;width:0.6px;height:1.5px;background:#595959"></div><div class="t" style="left:510.3px;top:51.3px;font-size:4.8px;color:#8c8c8c">1000</div><div class="a" style="left:529.2px;top:46.5px;width:0.7px;height:9.5px;background:#5f5f5f"></div><div class="a" style="left:534.3px;top:54.5px;width:0.6px;height:1.5px;background:#595959"></div><div class="a" style="left:539.4px;top:53.5px;width:0.6px;height:2.5px;background:#595959"></div><div class="a" style="left:544.5px;top:54.5px;width:0.6px;height:1.5px;background:#595959"></div><div class="t" style="left:530.8px;top:51.3px;font-size:4.8px;color:#8c8c8c">1100</div><div class="a" style="left:549.6px;top:46.5px;width:0.7px;height:9.5px;background:#5f5f5f"></div><div class="a" style="left:554.8px;top:54.5px;width:0.6px;height:1.5px;background:#595959"></div><div class="a" style="left:559.9px;top:53.5px;width:0.6px;height:2.5px;background:#595959"></div><div class="a" style="left:565.0px;top:54.5px;width:0.6px;height:1.5px;background:#595959"></div><div class="t" style="left:551.2px;top:51.3px;font-size:4.8px;color:#8c8c8c">1200</div><div class="a" style="left:570.1px;top:46.5px;width:0.7px;height:9.5px;background:#5f5f5f"></div><div class="a" style="left:575.2px;top:54.5px;width:0.6px;height:1.5px;background:#595959"></div><div class="a" style="left:580.3px;top:53.5px;width:0.6px;height:2.5px;background:#595959"></div><div class="a" style="left:585.5px;top:54.5px;width:0.6px;height:1.5px;background:#595959"></div><div class="t" style="left:571.7px;top:51.3px;font-size:4.8px;color:#8c8c8c">1300</div><div class="a" style="left:590.6px;top:46.5px;width:0.7px;height:9.5px;background:#5f5f5f"></div><div class="a" style="left:595.7px;top:54.5px;width:0.6px;height:1.5px;background:#595959"></div><div class="a" style="left:600.8px;top:53.5px;width:0.6px;height:2.5px;background:#595959"></div><div class="a" style="left:605.9px;top:54.5px;width:0.6px;height:1.5px;background:#595959"></div><div class="t" style="left:592.2px;top:51.3px;font-size:4.8px;color:#8c8c8c">1400</div><div class="a" style="left:611.0px;top:46.5px;width:0.7px;height:9.5px;background:#5f5f5f"></div><div class="a" style="left:616.2px;top:54.5px;width:0.6px;height:1.5px;background:#595959"></div><div class="a" style="left:621.3px;top:53.5px;width:0.6px;height:2.5px;background:#595959"></div><div class="a" style="left:626.4px;top:54.5px;width:0.6px;height:1.5px;background:#595959"></div><div class="t" style="left:612.6px;top:51.3px;font-size:4.8px;color:#8c8c8c">1500</div><div class="a" style="left:631.5px;top:46.5px;width:0.7px;height:9.5px;background:#5f5f5f"></div><div class="a" style="left:636.6px;top:54.5px;width:0.6px;height:1.5px;background:#595959"></div><div class="a" style="left:641.8px;top:53.5px;width:0.6px;height:2.5px;background:#595959"></div><div class="a" style="left:646.9px;top:54.5px;width:0.6px;height:1.5px;background:#595959"></div><div class="t" style="left:633.1px;top:51.3px;font-size:4.8px;color:#8c8c8c">1600</div><div class="a" style="left:652.0px;top:46.5px;width:0.7px;height:9.5px;background:#5f5f5f"></div><div class="a" style="left:657.1px;top:54.5px;width:0.6px;height:1.5px;background:#595959"></div><div class="a" style="left:662.2px;top:53.5px;width:0.6px;height:2.5px;background:#595959"></div><div class="a" style="left:667.3px;top:54.5px;width:0.6px;height:1.5px;background:#595959"></div><div class="t" style="left:653.6px;top:51.3px;font-size:4.8px;color:#8c8c8c">1700</div><div class="a" style="left:672.5px;top:46.5px;width:0.7px;height:9.5px;background:#5f5f5f"></div><div class="a" style="left:677.6px;top:54.5px;width:0.6px;height:1.5px;background:#595959"></div><div class="a" style="left:682.7px;top:53.5px;width:0.6px;height:2.5px;background:#595959"></div><div class="a" style="left:687.8px;top:54.5px;width:0.6px;height:1.5px;background:#595959"></div><div class="t" style="left:674.1px;top:51.3px;font-size:4.8px;color:#8c8c8c">1800</div><div class="a" style="left:692.9px;top:46.5px;width:0.7px;height:9.5px;background:#5f5f5f"></div><div class="a" style="left:698.0px;top:54.5px;width:0.6px;height:1.5px;background:#595959"></div><div class="a" style="left:703.2px;top:53.5px;width:0.6px;height:2.5px;background:#595959"></div><div class="a" style="left:708.3px;top:54.5px;width:0.6px;height:1.5px;background:#595959"></div><div class="t" style="left:694.5px;top:51.3px;font-size:4.8px;color:#8c8c8c">1900</div><div class="a" style="left:713.4px;top:46.5px;width:0.7px;height:9.5px;background:#5f5f5f"></div><div class="a" style="left:718.5px;top:54.5px;width:0.6px;height:1.5px;background:#595959"></div><div class="a" style="left:723.6px;top:53.5px;width:0.6px;height:2.5px;background:#595959"></div><div class="a" style="left:728.8px;top:54.5px;width:0.6px;height:1.5px;background:#595959"></div><div class="t" style="left:715.0px;top:51.3px;font-size:4.8px;color:#8c8c8c">2000</div><div class="a" style="left:733.9px;top:46.5px;width:0.7px;height:9.5px;background:#5f5f5f"></div><div class="a" style="left:739.0px;top:54.5px;width:0.6px;height:1.5px;background:#595959"></div><div class="a" style="left:744.1px;top:53.5px;width:0.6px;height:2.5px;background:#595959"></div><div class="a" style="left:749.2px;top:54.5px;width:0.6px;height:1.5px;background:#595959"></div><div class="t" style="left:735.5px;top:51.3px;font-size:4.8px;color:#8c8c8c">2100</div><div class="a" style="left:754.3px;top:46.5px;width:0.7px;height:9.5px;background:#5f5f5f"></div><div class="a" style="left:759.5px;top:54.5px;width:0.6px;height:1.5px;background:#595959"></div><div class="a" style="left:764.6px;top:53.5px;width:0.6px;height:2.5px;background:#595959"></div><div class="a" style="left:769.7px;top:54.5px;width:0.6px;height:1.5px;background:#595959"></div><div class="t" style="left:755.9px;top:51.3px;font-size:4.8px;color:#8c8c8c">2200</div><div class="a" style="left:774.8px;top:46.5px;width:0.7px;height:9.5px;background:#5f5f5f"></div><div class="a" style="left:779.9px;top:54.5px;width:0.6px;height:1.5px;background:#595959"></div><div class="a" style="left:785.0px;top:53.5px;width:0.6px;height:2.5px;background:#595959"></div><div class="a" style="left:790.2px;top:54.5px;width:0.6px;height:1.5px;background:#595959"></div><div class="t" style="left:776.4px;top:51.3px;font-size:4.8px;color:#8c8c8c">2300</div><div class="a" style="left:795.3px;top:46.5px;width:0.7px;height:9.5px;background:#5f5f5f"></div><div class="a" style="left:800.4px;top:54.5px;width:0.6px;height:1.5px;background:#595959"></div><div class="a" style="left:805.5px;top:53.5px;width:0.6px;height:2.5px;background:#595959"></div><div class="a" style="left:810.6px;top:54.5px;width:0.6px;height:1.5px;background:#595959"></div><div class="t" style="left:796.9px;top:51.3px;font-size:4.8px;color:#8c8c8c">2400</div><div class="a" style="left:815.8px;top:46.5px;width:0.7px;height:9.5px;background:#5f5f5f"></div><div class="a" style="left:820.9px;top:54.5px;width:0.6px;height:1.5px;background:#595959"></div><div class="a" style="left:826.0px;top:53.5px;width:0.6px;height:2.5px;background:#595959"></div><div class="a" style="left:831.1px;top:54.5px;width:0.6px;height:1.5px;background:#595959"></div><div class="t" style="left:817.4px;top:51.3px;font-size:4.8px;color:#8c8c8c">2500</div><div class="a" style="left:836.2px;top:46.5px;width:0.7px;height:9.5px;background:#5f5f5f"></div><div class="a" style="left:841.3px;top:54.5px;width:0.6px;height:1.5px;background:#595959"></div><div class="a" style="left:846.5px;top:53.5px;width:0.6px;height:2.5px;background:#595959"></div><div class="t" style="left:837.8px;top:51.3px;font-size:4.8px;color:#8c8c8c">2600</div><div class="a" style="left:23px;top:63.2px;width:8px;height:0.7px;background:#5f5f5f"></div><div class="a" style="left:29.5px;top:68.3px;width:1.5px;height:0.6px;background:#595959"></div><div class="a" style="left:28.5px;top:73.4px;width:2.5px;height:0.6px;background:#595959"></div><div class="a" style="left:29.5px;top:78.5px;width:1.5px;height:0.6px;background:#595959"></div><div class="t" style="left:25.7px;top:65.0px;font-size:4.6px;color:#8c8c8c">6</div><div class="t" style="left:25.7px;top:68.9px;font-size:4.6px;color:#8c8c8c">0</div><div class="t" style="left:25.7px;top:72.8px;font-size:4.6px;color:#8c8c8c">0</div><div class="a" style="left:23px;top:83.7px;width:8px;height:0.7px;background:#5f5f5f"></div><div class="a" style="left:29.5px;top:88.8px;width:1.5px;height:0.6px;background:#595959"></div><div class="a" style="left:28.5px;top:93.9px;width:2.5px;height:0.6px;background:#595959"></div><div class="a" style="left:29.5px;top:99.0px;width:1.5px;height:0.6px;background:#595959"></div><div class="t" style="left:25.7px;top:85.5px;font-size:4.6px;color:#8c8c8c">5</div><div class="t" style="left:25.7px;top:89.4px;font-size:4.6px;color:#8c8c8c">0</div><div class="t" style="left:25.7px;top:93.2px;font-size:4.6px;color:#8c8c8c">0</div><div class="a" style="left:23px;top:104.1px;width:8px;height:0.7px;background:#5f5f5f"></div><div class="a" style="left:29.5px;top:109.2px;width:1.5px;height:0.6px;background:#595959"></div><div class="a" style="left:28.5px;top:114.4px;width:2.5px;height:0.6px;background:#595959"></div><div class="a" style="left:29.5px;top:119.5px;width:1.5px;height:0.6px;background:#595959"></div><div class="t" style="left:25.7px;top:105.9px;font-size:4.6px;color:#8c8c8c">4</div><div class="t" style="left:25.7px;top:109.8px;font-size:4.6px;color:#8c8c8c">0</div><div class="t" style="left:25.7px;top:113.7px;font-size:4.6px;color:#8c8c8c">0</div><div class="a" style="left:23px;top:124.6px;width:8px;height:0.7px;background:#5f5f5f"></div><div class="a" style="left:29.5px;top:129.7px;width:1.5px;height:0.6px;background:#595959"></div><div class="a" style="left:28.5px;top:134.8px;width:2.5px;height:0.6px;background:#595959"></div><div class="a" style="left:29.5px;top:139.9px;width:1.5px;height:0.6px;background:#595959"></div><div class="t" style="left:25.7px;top:126.4px;font-size:4.6px;color:#8c8c8c">3</div><div class="t" style="left:25.7px;top:130.3px;font-size:4.6px;color:#8c8c8c">0</div><div class="t" style="left:25.7px;top:134.2px;font-size:4.6px;color:#8c8c8c">0</div><div class="a" style="left:23px;top:145.1px;width:8px;height:0.7px;background:#5f5f5f"></div><div class="a" style="left:29.5px;top:150.2px;width:1.5px;height:0.6px;background:#595959"></div><div class="a" style="left:28.5px;top:155.3px;width:2.5px;height:0.6px;background:#595959"></div><div class="a" style="left:29.5px;top:160.4px;width:1.5px;height:0.6px;background:#595959"></div><div class="t" style="left:25.7px;top:146.9px;font-size:4.6px;color:#8c8c8c">2</div><div class="t" style="left:25.7px;top:150.8px;font-size:4.6px;color:#8c8c8c">0</div><div class="t" style="left:25.7px;top:154.7px;font-size:4.6px;color:#8c8c8c">0</div><div class="a" style="left:23px;top:165.5px;width:8px;height:0.7px;background:#5f5f5f"></div><div class="a" style="left:29.5px;top:170.6px;width:1.5px;height:0.6px;background:#595959"></div><div class="a" style="left:28.5px;top:175.8px;width:2.5px;height:0.6px;background:#595959"></div><div class="a" style="left:29.5px;top:180.9px;width:1.5px;height:0.6px;background:#595959"></div><div class="t" style="left:25.7px;top:167.3px;font-size:4.6px;color:#8c8c8c">1</div><div class="t" style="left:25.7px;top:171.2px;font-size:4.6px;color:#8c8c8c">0</div><div class="t" style="left:25.7px;top:175.1px;font-size:4.6px;color:#8c8c8c">0</div><div class="a" style="left:23px;top:186.0px;width:8px;height:0.7px;background:#5f5f5f"></div><div class="a" style="left:29.5px;top:191.1px;width:1.5px;height:0.6px;background:#595959"></div><div class="a" style="left:28.5px;top:196.2px;width:2.5px;height:0.6px;background:#595959"></div><div class="a" style="left:29.5px;top:201.4px;width:1.5px;height:0.6px;background:#595959"></div><div class="t" style="left:25.7px;top:187.8px;font-size:4.6px;color:#8c8c8c">0</div><div class="a" style="left:23px;top:206.5px;width:8px;height:0.7px;background:#5f5f5f"></div><div class="a" style="left:29.5px;top:211.6px;width:1.5px;height:0.6px;background:#595959"></div><div class="a" style="left:28.5px;top:216.7px;width:2.5px;height:0.6px;background:#595959"></div><div class="a" style="left:29.5px;top:221.8px;width:1.5px;height:0.6px;background:#595959"></div><div class="t" style="left:25.7px;top:208.3px;font-size:4.6px;color:#8c8c8c">1</div><div class="t" style="left:25.7px;top:212.2px;font-size:4.6px;color:#8c8c8c">0</div><div class="t" style="left:25.7px;top:216.1px;font-size:4.6px;color:#8c8c8c">0</div><div class="a" style="left:23px;top:226.9px;width:8px;height:0.7px;background:#5f5f5f"></div><div class="a" style="left:29.5px;top:232.1px;width:1.5px;height:0.6px;background:#595959"></div><div class="a" style="left:28.5px;top:237.2px;width:2.5px;height:0.6px;background:#595959"></div><div class="a" style="left:29.5px;top:242.3px;width:1.5px;height:0.6px;background:#595959"></div><div class="t" style="left:25.7px;top:228.7px;font-size:4.6px;color:#8c8c8c">2</div><div class="t" style="left:25.7px;top:232.6px;font-size:4.6px;color:#8c8c8c">0</div><div class="t" style="left:25.7px;top:236.5px;font-size:4.6px;color:#8c8c8c">0</div><div class="a" style="left:23px;top:247.4px;width:8px;height:0.7px;background:#5f5f5f"></div><div class="a" style="left:29.5px;top:252.5px;width:1.5px;height:0.6px;background:#595959"></div><div class="a" style="left:28.5px;top:257.6px;width:2.5px;height:0.6px;background:#595959"></div><div class="a" style="left:29.5px;top:262.8px;width:1.5px;height:0.6px;background:#595959"></div><div class="t" style="left:25.7px;top:249.2px;font-size:4.6px;color:#8c8c8c">3</div><div class="t" style="left:25.7px;top:253.1px;font-size:4.6px;color:#8c8c8c">0</div><div class="t" style="left:25.7px;top:257.0px;font-size:4.6px;color:#8c8c8c">0</div><div class="a" style="left:23px;top:267.9px;width:8px;height:0.7px;background:#5f5f5f"></div><div class="a" style="left:29.5px;top:273.0px;width:1.5px;height:0.6px;background:#595959"></div><div class="a" style="left:28.5px;top:278.1px;width:2.5px;height:0.6px;background:#595959"></div><div class="a" style="left:29.5px;top:283.2px;width:1.5px;height:0.6px;background:#595959"></div><div class="t" style="left:25.7px;top:269.7px;font-size:4.6px;color:#8c8c8c">4</div><div class="t" style="left:25.7px;top:273.6px;font-size:4.6px;color:#8c8c8c">0</div><div class="t" style="left:25.7px;top:277.5px;font-size:4.6px;color:#8c8c8c">0</div><div class="a" style="left:23px;top:288.4px;width:8px;height:0.7px;background:#5f5f5f"></div><div class="a" style="left:29.5px;top:293.5px;width:1.5px;height:0.6px;background:#595959"></div><div class="a" style="left:28.5px;top:298.6px;width:2.5px;height:0.6px;background:#595959"></div><div class="a" style="left:29.5px;top:303.7px;width:1.5px;height:0.6px;background:#595959"></div><div class="t" style="left:25.7px;top:290.2px;font-size:4.6px;color:#8c8c8c">5</div><div class="t" style="left:25.7px;top:294.1px;font-size:4.6px;color:#8c8c8c">0</div><div class="t" style="left:25.7px;top:298.0px;font-size:4.6px;color:#8c8c8c">0</div><div class="a" style="left:23px;top:308.8px;width:8px;height:0.7px;background:#5f5f5f"></div><div class="a" style="left:29.5px;top:313.9px;width:1.5px;height:0.6px;background:#595959"></div><div class="a" style="left:28.5px;top:319.1px;width:2.5px;height:0.6px;background:#595959"></div><div class="a" style="left:29.5px;top:324.2px;width:1.5px;height:0.6px;background:#595959"></div><div class="t" style="left:25.7px;top:310.6px;font-size:4.6px;color:#8c8c8c">6</div><div class="t" style="left:25.7px;top:314.5px;font-size:4.6px;color:#8c8c8c">0</div><div class="t" style="left:25.7px;top:318.4px;font-size:4.6px;color:#8c8c8c">0</div><div class="a" style="left:23px;top:329.3px;width:8px;height:0.7px;background:#5f5f5f"></div><div class="a" style="left:29.5px;top:334.4px;width:1.5px;height:0.6px;background:#595959"></div><div class="a" style="left:28.5px;top:339.5px;width:2.5px;height:0.6px;background:#595959"></div><div class="a" style="left:29.5px;top:344.6px;width:1.5px;height:0.6px;background:#595959"></div><div class="t" style="left:25.7px;top:331.1px;font-size:4.6px;color:#8c8c8c">7</div><div class="t" style="left:25.7px;top:335.0px;font-size:4.6px;color:#8c8c8c">0</div><div class="t" style="left:25.7px;top:338.9px;font-size:4.6px;color:#8c8c8c">0</div><div class="a" style="left:23px;top:349.8px;width:8px;height:0.7px;background:#5f5f5f"></div><div class="a" style="left:29.5px;top:354.9px;width:1.5px;height:0.6px;background:#595959"></div><div class="a" style="left:28.5px;top:360.0px;width:2.5px;height:0.6px;background:#595959"></div><div class="a" style="left:29.5px;top:365.1px;width:1.5px;height:0.6px;background:#595959"></div><div class="t" style="left:25.7px;top:351.6px;font-size:4.6px;color:#8c8c8c">8</div><div class="t" style="left:25.7px;top:355.5px;font-size:4.6px;color:#8c8c8c">0</div><div class="t" style="left:25.7px;top:359.4px;font-size:4.6px;color:#8c8c8c">0</div><div class="a" style="left:23px;top:370.2px;width:8px;height:0.7px;background:#5f5f5f"></div><div class="a" style="left:29.5px;top:375.3px;width:1.5px;height:0.6px;background:#595959"></div><div class="a" style="left:28.5px;top:380.5px;width:2.5px;height:0.6px;background:#595959"></div><div class="a" style="left:29.5px;top:385.6px;width:1.5px;height:0.6px;background:#595959"></div><div class="t" style="left:25.7px;top:372.0px;font-size:4.6px;color:#8c8c8c">9</div><div class="t" style="left:25.7px;top:375.9px;font-size:4.6px;color:#8c8c8c">0</div><div class="t" style="left:25.7px;top:379.8px;font-size:4.6px;color:#8c8c8c">0</div><div class="a" style="left:23px;top:390.7px;width:8px;height:0.7px;background:#5f5f5f"></div><div class="a" style="left:29.5px;top:395.8px;width:1.5px;height:0.6px;background:#595959"></div><div class="a" style="left:28.5px;top:400.9px;width:2.5px;height:0.6px;background:#595959"></div><div class="a" style="left:29.5px;top:406.1px;width:1.5px;height:0.6px;background:#595959"></div><div class="t" style="left:25.7px;top:392.5px;font-size:4.6px;color:#8c8c8c">1</div><div class="t" style="left:25.7px;top:396.4px;font-size:4.6px;color:#8c8c8c">0</div><div class="t" style="left:25.7px;top:400.3px;font-size:4.6px;color:#8c8c8c">0</div><div class="t" style="left:25.7px;top:404.2px;font-size:4.6px;color:#8c8c8c">0</div><div class="a" style="left:23px;top:411.2px;width:8px;height:0.7px;background:#5f5f5f"></div><div class="a" style="left:29.5px;top:416.3px;width:1.5px;height:0.6px;background:#595959"></div><div class="a" style="left:28.5px;top:421.4px;width:2.5px;height:0.6px;background:#595959"></div><div class="a" style="left:29.5px;top:426.5px;width:1.5px;height:0.6px;background:#595959"></div><div class="t" style="left:25.7px;top:413.0px;font-size:4.6px;color:#8c8c8c">1</div><div class="t" style="left:25.7px;top:416.9px;font-size:4.6px;color:#8c8c8c">1</div><div class="t" style="left:25.7px;top:420.8px;font-size:4.6px;color:#8c8c8c">0</div><div class="t" style="left:25.7px;top:424.7px;font-size:4.6px;color:#8c8c8c">0</div><div class="a" style="left:23px;top:431.6px;width:8px;height:0.7px;background:#5f5f5f"></div><div class="a" style="left:29.5px;top:436.8px;width:1.5px;height:0.6px;background:#595959"></div><div class="a" style="left:28.5px;top:441.9px;width:2.5px;height:0.6px;background:#595959"></div><div class="a" style="left:29.5px;top:447.0px;width:1.5px;height:0.6px;background:#595959"></div><div class="t" style="left:25.7px;top:433.4px;font-size:4.6px;color:#8c8c8c">1</div><div class="t" style="left:25.7px;top:437.3px;font-size:4.6px;color:#8c8c8c">2</div><div class="t" style="left:25.7px;top:441.2px;font-size:4.6px;color:#8c8c8c">0</div><div class="t" style="left:25.7px;top:445.1px;font-size:4.6px;color:#8c8c8c">0</div><div class="a" style="left:23px;top:452.1px;width:8px;height:0.7px;background:#5f5f5f"></div><div class="a" style="left:29.5px;top:457.2px;width:1.5px;height:0.6px;background:#595959"></div><div class="a" style="left:28.5px;top:462.3px;width:2.5px;height:0.6px;background:#595959"></div><div class="a" style="left:29.5px;top:467.5px;width:1.5px;height:0.6px;background:#595959"></div><div class="t" style="left:25.7px;top:453.9px;font-size:4.6px;color:#8c8c8c">1</div><div class="t" style="left:25.7px;top:457.8px;font-size:4.6px;color:#8c8c8c">3</div><div class="t" style="left:25.7px;top:461.7px;font-size:4.6px;color:#8c8c8c">0</div><div class="t" style="left:25.7px;top:465.6px;font-size:4.6px;color:#8c8c8c">0</div><div class="a" style="left:23px;top:472.6px;width:8px;height:0.7px;background:#5f5f5f"></div><div class="a" style="left:29.5px;top:477.7px;width:1.5px;height:0.6px;background:#595959"></div><div class="a" style="left:28.5px;top:482.8px;width:2.5px;height:0.6px;background:#595959"></div><div class="a" style="left:29.5px;top:487.9px;width:1.5px;height:0.6px;background:#595959"></div><div class="t" style="left:25.7px;top:474.4px;font-size:4.6px;color:#8c8c8c">1</div><div class="t" style="left:25.7px;top:478.3px;font-size:4.6px;color:#8c8c8c">4</div><div class="t" style="left:25.7px;top:482.2px;font-size:4.6px;color:#8c8c8c">0</div><div class="t" style="left:25.7px;top:486.1px;font-size:4.6px;color:#8c8c8c">0</div><div class="a" style="left:23px;top:493.0px;width:8px;height:0.7px;background:#5f5f5f"></div><div class="a" style="left:29.5px;top:498.2px;width:1.5px;height:0.6px;background:#595959"></div><div class="a" style="left:28.5px;top:503.3px;width:2.5px;height:0.6px;background:#595959"></div><div class="a" style="left:29.5px;top:508.4px;width:1.5px;height:0.6px;background:#595959"></div><div class="t" style="left:25.7px;top:494.8px;font-size:4.6px;color:#8c8c8c">1</div><div class="t" style="left:25.7px;top:498.7px;font-size:4.6px;color:#8c8c8c">5</div><div class="t" style="left:25.7px;top:502.6px;font-size:4.6px;color:#8c8c8c">0</div><div class="t" style="left:25.7px;top:506.5px;font-size:4.6px;color:#8c8c8c">0</div><div class="a" style="left:23px;top:513.5px;width:8px;height:0.7px;background:#5f5f5f"></div><div class="a" style="left:29.5px;top:518.6px;width:1.5px;height:0.6px;background:#595959"></div><div class="a" style="left:28.5px;top:523.8px;width:2.5px;height:0.6px;background:#595959"></div><div class="a" style="left:29.5px;top:528.9px;width:1.5px;height:0.6px;background:#595959"></div><div class="t" style="left:25.7px;top:515.3px;font-size:4.6px;color:#8c8c8c">1</div><div class="t" style="left:25.7px;top:519.2px;font-size:4.6px;color:#8c8c8c">6</div><div class="t" style="left:25.7px;top:523.1px;font-size:4.6px;color:#8c8c8c">0</div><div class="t" style="left:25.7px;top:527.0px;font-size:4.6px;color:#8c8c8c">0</div><div class="a" style="left:23px;top:534.0px;width:8px;height:0.7px;background:#5f5f5f"></div><div class="a" style="left:29.5px;top:539.1px;width:1.5px;height:0.6px;background:#595959"></div><div class="t" style="left:25.7px;top:535.8px;font-size:4.6px;color:#8c8c8c">1</div><div class="t" style="left:25.7px;top:539.7px;font-size:4.6px;color:#8c8c8c">7</div><div class="t" style="left:25.7px;top:543.6px;font-size:4.6px;color:#8c8c8c">0</div><div class="t" style="left:25.7px;top:547.5px;font-size:4.6px;color:#8c8c8c">0</div>

<!-- document -->
<div class="a" style="left:304px;top:186.8px;width:393.2px;height:220.8px;background:#fff"></div>
<svg width="331" height="206.8" viewBox="304 194 331 206.8" style="position:absolute;left:304px;top:194px;background:#141414"><defs><radialGradient id="rg" gradientUnits="userSpaceOnUse" cx="0" cy="0" r="8"><stop offset="0" stop-color="#fff" stop-opacity="0.42"/><stop offset="0.35" stop-color="#fff" stop-opacity="0.05"/><stop offset="0.7" stop-color="#000" stop-opacity="0.05"/><stop offset="1" stop-color="#fff" stop-opacity="0.35"/></radialGradient><g id="fw"><path d="M0 -0.8C-2.8 -2 -4.2 -5.6 -2 -8.2L0 -6.9L2 -8.2C4.2 -5.6 2.8 -2 0 -0.8Z" transform="rotate(0)"/><path d="M0 -0.8C-2.8 -2 -4.2 -5.6 -2 -8.2L0 -6.9L2 -8.2C4.2 -5.6 2.8 -2 0 -0.8Z" transform="rotate(72)"/><path d="M0 -0.8C-2.8 -2 -4.2 -5.6 -2 -8.2L0 -6.9L2 -8.2C4.2 -5.6 2.8 -2 0 -0.8Z" transform="rotate(144)"/><path d="M0 -0.8C-2.8 -2 -4.2 -5.6 -2 -8.2L0 -6.9L2 -8.2C4.2 -5.6 2.8 -2 0 -0.8Z" transform="rotate(216)"/><path d="M0 -0.8C-2.8 -2 -4.2 -5.6 -2 -8.2L0 -6.9L2 -8.2C4.2 -5.6 2.8 -2 0 -0.8Z" transform="rotate(288)"/><circle r="2.2"/></g></defs><g transform="translate(357.3 227.6) rotate(68) scale(1.05)"><use href="#fw" fill="#f09040" stroke="#f4efe0" stroke-opacity="0.5" stroke-width="0.55"/><use href="#fw" fill="url(#rg)"/><circle r="1.3" fill="#f7c79f"/></g><g transform="translate(504.6 281.6) rotate(40) scale(0.99)"><use href="#fw" fill="#a0b8d0" stroke="#f4efe0" stroke-opacity="0.5" stroke-width="0.55"/><use href="#fw" fill="url(#rg)"/><circle r="1.3" fill="#cfdbe7"/></g><g transform="translate(335.5 247.1) rotate(56) scale(0.96)"><use href="#fw" fill="#60b8e8" stroke="#f4efe0" stroke-opacity="0.5" stroke-width="0.55"/><use href="#fw" fill="url(#rg)"/><circle r="1.3" fill="#afdbf3"/></g><g transform="translate(398.3 228.1) rotate(60) scale(0.95)"><use href="#fw" fill="#e03c30" stroke="#f4efe0" stroke-opacity="0.5" stroke-width="0.55"/><use href="#fw" fill="url(#rg)"/><circle r="1.3" fill="#ef9d97"/></g><g transform="translate(384.1 228.9) rotate(67) scale(1.00)"><use href="#fw" fill="#60b8e8" stroke="#f4efe0" stroke-opacity="0.5" stroke-width="0.55"/><use href="#fw" fill="url(#rg)"/><circle r="1.3" fill="#afdbf3"/></g><g transform="translate(601.4 282.2) rotate(19) scale(0.94)"><use href="#fw" fill="#e83c8c" stroke="#f4efe0" stroke-opacity="0.5" stroke-width="0.55"/><use href="#fw" fill="url(#rg)"/><circle r="1.3" fill="#f39dc5"/></g><g transform="translate(358.6 357.8) rotate(56) scale(0.95)"><use href="#fw" fill="#8050c0" stroke="#f4efe0" stroke-opacity="0.5" stroke-width="0.55"/><use href="#fw" fill="url(#rg)"/><circle r="1.3" fill="#bfa7df"/></g><g transform="translate(587.4 215.5) rotate(7) scale(0.99)"><use href="#fw" fill="#b08040" stroke="#f4efe0" stroke-opacity="0.5" stroke-width="0.55"/><use href="#fw" fill="url(#rg)"/><circle r="1.3" fill="#d7bf9f"/></g><g transform="translate(591.7 343.9) rotate(66) scale(1.01)"><use href="#fw" fill="#40a8a0" stroke="#f4efe0" stroke-opacity="0.5" stroke-width="0.55"/><use href="#fw" fill="url(#rg)"/><circle r="1.3" fill="#9fd3cf"/></g><g transform="translate(314.7 387.2) rotate(10) scale(1.00)"><use href="#fw" fill="#f09040" stroke="#f4efe0" stroke-opacity="0.5" stroke-width="0.55"/><use href="#fw" fill="url(#rg)"/><circle r="1.3" fill="#f7c79f"/></g><g transform="translate(303.1 323.5) rotate(14) scale(0.94)"><use href="#fw" fill="#e83c8c" stroke="#f4efe0" stroke-opacity="0.5" stroke-width="0.55"/><use href="#fw" fill="url(#rg)"/><circle r="1.3" fill="#f39dc5"/></g><g transform="translate(633.5 420.3) rotate(70) scale(1.02)"><use href="#fw" fill="#3090e0" stroke="#f4efe0" stroke-opacity="0.5" stroke-width="0.55"/><use href="#fw" fill="url(#rg)"/><circle r="1.3" fill="#97c7ef"/></g><g transform="translate(485.7 246.6) rotate(70) scale(0.91)"><use href="#fw" fill="#90d080" stroke="#f4efe0" stroke-opacity="0.5" stroke-width="0.55"/><use href="#fw" fill="url(#rg)"/><circle r="1.3" fill="#c7e7bf"/></g><g transform="translate(473.1 290.9) rotate(37) scale(0.94)"><use href="#fw" fill="#b0a0e0" stroke="#f4efe0" stroke-opacity="0.5" stroke-width="0.55"/><use href="#fw" fill="url(#rg)"/><circle r="1.3" fill="#d7cfef"/></g><g transform="translate(513.0 260.5) rotate(50) scale(1.07)"><use href="#fw" fill="#a0b8d0" stroke="#f4efe0" stroke-opacity="0.5" stroke-width="0.55"/><use href="#fw" fill="url(#rg)"/><circle r="1.3" fill="#cfdbe7"/></g><g transform="translate(504.3 388.4) rotate(60) scale(0.92)"><use href="#fw" fill="#e6786e" stroke="#f4efe0" stroke-opacity="0.5" stroke-width="0.55"/><use href="#fw" fill="url(#rg)"/><circle r="1.3" fill="#f2bbb6"/></g><g transform="translate(574.5 303.5) rotate(47) scale(0.98)"><use href="#fw" fill="#f0a0c0" stroke="#f4efe0" stroke-opacity="0.5" stroke-width="0.55"/><use href="#fw" fill="url(#rg)"/><circle r="1.3" fill="#f7cfdf"/></g><g transform="translate(627.5 236.2) rotate(52) scale(0.95)"><use href="#fw" fill="#e03c30" stroke="#f4efe0" stroke-opacity="0.5" stroke-width="0.55"/><use href="#fw" fill="url(#rg)"/><circle r="1.3" fill="#ef9d97"/></g><g transform="translate(373.9 378.0) rotate(50) scale(0.99)"><use href="#fw" fill="#b08040" stroke="#f4efe0" stroke-opacity="0.5" stroke-width="0.55"/><use href="#fw" fill="url(#rg)"/><circle r="1.3" fill="#d7bf9f"/></g><g transform="translate(548.2 377.3) rotate(71) scale(1.03)"><use href="#fw" fill="#f0e890" stroke="#f4efe0" stroke-opacity="0.5" stroke-width="0.55"/><use href="#fw" fill="url(#rg)"/><circle r="1.3" fill="#f7f3c7"/></g><g transform="translate(539.7 346.7) rotate(8) scale(0.96)"><use href="#fw" fill="#f0a0c0" stroke="#f4efe0" stroke-opacity="0.5" stroke-width="0.55"/><use href="#fw" fill="url(#rg)"/><circle r="1.3" fill="#f7cfdf"/></g><g transform="translate(320.6 204.5) rotate(66) scale(0.90)"><use href="#fw" fill="#466ec8" stroke="#f4efe0" stroke-opacity="0.5" stroke-width="0.55"/><use href="#fw" fill="url(#rg)"/><circle r="1.3" fill="#a2b6e3"/></g><g transform="translate(434.6 356.8) rotate(12) scale(1.03)"><use href="#fw" fill="#f09040" stroke="#f4efe0" stroke-opacity="0.5" stroke-width="0.55"/><use href="#fw" fill="url(#rg)"/><circle r="1.3" fill="#f7c79f"/></g><g transform="translate(298.8 419.3) rotate(55) scale(0.96)"><use href="#fw" fill="#f0e890" stroke="#f4efe0" stroke-opacity="0.5" stroke-width="0.55"/><use href="#fw" fill="url(#rg)"/><circle r="1.3" fill="#f7f3c7"/></g><g transform="translate(600.2 367.5) rotate(12) scale(0.97)"><use href="#fw" fill="#90d080" stroke="#f4efe0" stroke-opacity="0.5" stroke-width="0.55"/><use href="#fw" fill="url(#rg)"/><circle r="1.3" fill="#c7e7bf"/></g><g transform="translate(583.2 248.7) rotate(30) scale(0.97)"><use href="#fw" fill="#f0a080" stroke="#f4efe0" stroke-opacity="0.5" stroke-width="0.55"/><use href="#fw" fill="url(#rg)"/><circle r="1.3" fill="#f7cfbf"/></g><g transform="translate(316.9 193.9) rotate(72) scale(0.92)"><use href="#fw" fill="#b0a0e0" stroke="#f4efe0" stroke-opacity="0.5" stroke-width="0.55"/><use href="#fw" fill="url(#rg)"/><circle r="1.3" fill="#d7cfef"/></g><g transform="translate(518.5 354.8) rotate(1) scale(1.05)"><use href="#fw" fill="#50b050" stroke="#f4efe0" stroke-opacity="0.5" stroke-width="0.55"/><use href="#fw" fill="url(#rg)"/><circle r="1.3" fill="#a7d7a7"/></g><g transform="translate(424.1 267.3) rotate(25) scale(1.04)"><use href="#fw" fill="#466ec8" stroke="#f4efe0" stroke-opacity="0.5" stroke-width="0.55"/><use href="#fw" fill="url(#rg)"/><circle r="1.3" fill="#a2b6e3"/></g><g transform="translate(314.7 213.5) rotate(36) scale(1.05)"><use href="#fw" fill="#e6786e" stroke="#f4efe0" stroke-opacity="0.5" stroke-width="0.55"/><use href="#fw" fill="url(#rg)"/><circle r="1.3" fill="#f2bbb6"/></g><g transform="translate(369.7 313.5) rotate(6) scale(1.07)"><use href="#fw" fill="#e6786e" stroke="#f4efe0" stroke-opacity="0.5" stroke-width="0.55"/><use href="#fw" fill="url(#rg)"/><circle r="1.3" fill="#f2bbb6"/></g><g transform="translate(425.6 192.9) rotate(44) scale(0.95)"><use href="#fw" fill="#a0b8d0" stroke="#f4efe0" stroke-opacity="0.5" stroke-width="0.55"/><use href="#fw" fill="url(#rg)"/><circle r="1.3" fill="#cfdbe7"/></g><g transform="translate(289.8 260.3) rotate(45) scale(0.97)"><use href="#fw" fill="#50b050" stroke="#f4efe0" stroke-opacity="0.5" stroke-width="0.55"/><use href="#fw" fill="url(#rg)"/><circle r="1.3" fill="#a7d7a7"/></g><g transform="translate(466.9 386.8) rotate(6) scale(1.03)"><use href="#fw" fill="#a0b8d0" stroke="#f4efe0" stroke-opacity="0.5" stroke-width="0.55"/><use href="#fw" fill="url(#rg)"/><circle r="1.3" fill="#cfdbe7"/></g><g transform="translate(303.4 258.8) rotate(12) scale(0.93)"><use href="#fw" fill="#f0a080" stroke="#f4efe0" stroke-opacity="0.5" stroke-width="0.55"/><use href="#fw" fill="url(#rg)"/><circle r="1.3" fill="#f7cfbf"/></g><g transform="translate(471.3 249.5) rotate(27) scale(1.05)"><use href="#fw" fill="#c8aa8c" stroke="#f4efe0" stroke-opacity="0.5" stroke-width="0.55"/><use href="#fw" fill="url(#rg)"/><circle r="1.3" fill="#e3d4c5"/></g><g transform="translate(445.7 358.2) rotate(13) scale(1.04)"><use href="#fw" fill="#b0a0e0" stroke="#f4efe0" stroke-opacity="0.5" stroke-width="0.55"/><use href="#fw" fill="url(#rg)"/><circle r="1.3" fill="#d7cfef"/></g><g transform="translate(645.6 267.4) rotate(2) scale(1.06)"><use href="#fw" fill="#f5c830" stroke="#f4efe0" stroke-opacity="0.5" stroke-width="0.55"/><use href="#fw" fill="url(#rg)"/><circle r="1.3" fill="#fae397"/></g><g transform="translate(520.4 288.9) rotate(30) scale(0.91)"><use href="#fw" fill="#c8aa8c" stroke="#f4efe0" stroke-opacity="0.5" stroke-width="0.55"/><use href="#fw" fill="url(#rg)"/><circle r="1.3" fill="#e3d4c5"/></g><g transform="translate(411.1 248.8) rotate(21) scale(0.92)"><use href="#fw" fill="#d030a0" stroke="#f4efe0" stroke-opacity="0.5" stroke-width="0.55"/><use href="#fw" fill="url(#rg)"/><circle r="1.3" fill="#e797cf"/></g><g transform="translate(582.7 357.3) rotate(55) scale(1.01)"><use href="#fw" fill="#b08040" stroke="#f4efe0" stroke-opacity="0.5" stroke-width="0.55"/><use href="#fw" fill="url(#rg)"/><circle r="1.3" fill="#d7bf9f"/></g><g transform="translate(475.4 323.7) rotate(3) scale(0.90)"><use href="#fw" fill="#c8aa8c" stroke="#f4efe0" stroke-opacity="0.5" stroke-width="0.55"/><use href="#fw" fill="url(#rg)"/><circle r="1.3" fill="#e3d4c5"/></g><g transform="translate(326.8 300.1) rotate(33) scale(0.94)"><use href="#fw" fill="#f0a0c0" stroke="#f4efe0" stroke-opacity="0.5" stroke-width="0.55"/><use href="#fw" fill="url(#rg)"/><circle r="1.3" fill="#f7cfdf"/></g><g transform="translate(312.6 355.2) rotate(22) scale(0.95)"><use href="#fw" fill="#8050c0" stroke="#f4efe0" stroke-opacity="0.5" stroke-width="0.55"/><use href="#fw" fill="url(#rg)"/><circle r="1.3" fill="#bfa7df"/></g><g transform="translate(506.7 293.5) rotate(18) scale(0.96)"><use href="#fw" fill="#e03c30" stroke="#f4efe0" stroke-opacity="0.5" stroke-width="0.55"/><use href="#fw" fill="url(#rg)"/><circle r="1.3" fill="#ef9d97"/></g><g transform="translate(621.1 375.4) rotate(53) scale(1.03)"><use href="#fw" fill="#f0a080" stroke="#f4efe0" stroke-opacity="0.5" stroke-width="0.55"/><use href="#fw" fill="url(#rg)"/><circle r="1.3" fill="#f7cfbf"/></g><g transform="translate(644.6 291.8) rotate(11) scale(1.02)"><use href="#fw" fill="#60b8e8" stroke="#f4efe0" stroke-opacity="0.5" stroke-width="0.55"/><use href="#fw" fill="url(#rg)"/><circle r="1.3" fill="#afdbf3"/></g><g transform="translate(345.9 355.5) rotate(2) scale(1.06)"><use href="#fw" fill="#e03c30" stroke="#f4efe0" stroke-opacity="0.5" stroke-width="0.55"/><use href="#fw" fill="url(#rg)"/><circle r="1.3" fill="#ef9d97"/></g><g transform="translate(633.4 205.6) rotate(28) scale(1.00)"><use href="#fw" fill="#466ec8" stroke="#f4efe0" stroke-opacity="0.5" stroke-width="0.55"/><use href="#fw" fill="url(#rg)"/><circle r="1.3" fill="#a2b6e3"/></g><g transform="translate(638.1 303.5) rotate(51) scale(1.04)"><use href="#fw" fill="#8050c0" stroke="#f4efe0" stroke-opacity="0.5" stroke-width="0.55"/><use href="#fw" fill="url(#rg)"/><circle r="1.3" fill="#bfa7df"/></g><g transform="translate(358.0 182.8) rotate(22) scale(0.99)"><use href="#fw" fill="#50b050" stroke="#f4efe0" stroke-opacity="0.5" stroke-width="0.55"/><use href="#fw" fill="url(#rg)"/><circle r="1.3" fill="#a7d7a7"/></g><g transform="translate(479.6 299.5) rotate(9) scale(1.03)"><use href="#fw" fill="#40a8a0" stroke="#f4efe0" stroke-opacity="0.5" stroke-width="0.55"/><use href="#fw" fill="url(#rg)"/><circle r="1.3" fill="#9fd3cf"/></g><g transform="translate(420.3 333.3) rotate(53) scale(0.90)"><use href="#fw" fill="#a0b8d0" stroke="#f4efe0" stroke-opacity="0.5" stroke-width="0.55"/><use href="#fw" fill="url(#rg)"/><circle r="1.3" fill="#cfdbe7"/></g><g transform="translate(355.6 302.4) rotate(65) scale(1.04)"><use href="#fw" fill="#b08040" stroke="#f4efe0" stroke-opacity="0.5" stroke-width="0.55"/><use href="#fw" fill="url(#rg)"/><circle r="1.3" fill="#d7bf9f"/></g><g transform="translate(531.8 226.6) rotate(19) scale(0.96)"><use href="#fw" fill="#60b8e8" stroke="#f4efe0" stroke-opacity="0.5" stroke-width="0.55"/><use href="#fw" fill="url(#rg)"/><circle r="1.3" fill="#afdbf3"/></g><g transform="translate(367.6 281.0) rotate(10) scale(0.95)"><use href="#fw" fill="#f09040" stroke="#f4efe0" stroke-opacity="0.5" stroke-width="0.55"/><use href="#fw" fill="url(#rg)"/><circle r="1.3" fill="#f7c79f"/></g><g transform="translate(619.0 290.7) rotate(58) scale(0.93)"><use href="#fw" fill="#e03c30" stroke="#f4efe0" stroke-opacity="0.5" stroke-width="0.55"/><use href="#fw" fill="url(#rg)"/><circle r="1.3" fill="#ef9d97"/></g><g transform="translate(424.1 355.8) rotate(65) scale(0.98)"><use href="#fw" fill="#90d080" stroke="#f4efe0" stroke-opacity="0.5" stroke-width="0.55"/><use href="#fw" fill="url(#rg)"/><circle r="1.3" fill="#c7e7bf"/></g><g transform="translate(299.4 397.1) rotate(38) scale(0.97)"><use href="#fw" fill="#a0b8d0" stroke="#f4efe0" stroke-opacity="0.5" stroke-width="0.55"/><use href="#fw" fill="url(#rg)"/><circle r="1.3" fill="#cfdbe7"/></g><g transform="translate(353.8 366.0) rotate(69) scale(0.97)"><use href="#fw" fill="#f09040" stroke="#f4efe0" stroke-opacity="0.5" stroke-width="0.55"/><use href="#fw" fill="url(#rg)"/><circle r="1.3" fill="#f7c79f"/></g><g transform="translate(312.5 224.5) rotate(20) scale(1.04)"><use href="#fw" fill="#b0a0e0" stroke="#f4efe0" stroke-opacity="0.5" stroke-width="0.55"/><use href="#fw" fill="url(#rg)"/><circle r="1.3" fill="#d7cfef"/></g><g transform="translate(427.8 302.2) rotate(34) scale(1.02)"><use href="#fw" fill="#d030a0" stroke="#f4efe0" stroke-opacity="0.5" stroke-width="0.55"/><use href="#fw" fill="url(#rg)"/><circle r="1.3" fill="#e797cf"/></g><g transform="translate(627.0 368.8) rotate(41) scale(1.00)"><use href="#fw" fill="#e83c8c" stroke="#f4efe0" stroke-opacity="0.5" stroke-width="0.55"/><use href="#fw" fill="url(#rg)"/><circle r="1.3" fill="#f39dc5"/></g><g transform="translate(371.6 397.2) rotate(72) scale(1.05)"><use href="#fw" fill="#8050c0" stroke="#f4efe0" stroke-opacity="0.5" stroke-width="0.55"/><use href="#fw" fill="url(#rg)"/><circle r="1.3" fill="#bfa7df"/></g><g transform="translate(421.7 288.7) rotate(49) scale(1.05)"><use href="#fw" fill="#b0a0e0" stroke="#f4efe0" stroke-opacity="0.5" stroke-width="0.55"/><use href="#fw" fill="url(#rg)"/><circle r="1.3" fill="#d7cfef"/></g><g transform="translate(491.1 411.1) rotate(47) scale(1.04)"><use href="#fw" fill="#f0a080" stroke="#f4efe0" stroke-opacity="0.5" stroke-width="0.55"/><use href="#fw" fill="url(#rg)"/><circle r="1.3" fill="#f7cfbf"/></g><g transform="translate(401.9 216.0) rotate(11) scale(0.99)"><use href="#fw" fill="#f0a0c0" stroke="#f4efe0" stroke-opacity="0.5" stroke-width="0.55"/><use href="#fw" fill="url(#rg)"/><circle r="1.3" fill="#f7cfdf"/></g><g transform="translate(490.7 256.6) rotate(52) scale(1.03)"><use href="#fw" fill="#f0a0c0" stroke="#f4efe0" stroke-opacity="0.5" stroke-width="0.55"/><use href="#fw" fill="url(#rg)"/><circle r="1.3" fill="#f7cfdf"/></g><g transform="translate(612.1 386.4) rotate(45) scale(1.06)"><use href="#fw" fill="#f09040" stroke="#f4efe0" stroke-opacity="0.5" stroke-width="0.55"/><use href="#fw" fill="url(#rg)"/><circle r="1.3" fill="#f7c79f"/></g><g transform="translate(602.8 196.0) rotate(65) scale(1.02)"><use href="#fw" fill="#d030a0" stroke="#f4efe0" stroke-opacity="0.5" stroke-width="0.55"/><use href="#fw" fill="url(#rg)"/><circle r="1.3" fill="#e797cf"/></g><g transform="translate(509.0 399.4) rotate(2) scale(0.92)"><use href="#fw" fill="#a0b8d0" stroke="#f4efe0" stroke-opacity="0.5" stroke-width="0.55"/><use href="#fw" fill="url(#rg)"/><circle r="1.3" fill="#cfdbe7"/></g><g transform="translate(395.3 399.0) rotate(60) scale(1.05)"><use href="#fw" fill="#f0a0c0" stroke="#f4efe0" stroke-opacity="0.5" stroke-width="0.55"/><use href="#fw" fill="url(#rg)"/><circle r="1.3" fill="#f7cfdf"/></g><g transform="translate(488.9 278.9) rotate(12) scale(1.02)"><use href="#fw" fill="#b0a0e0" stroke="#f4efe0" stroke-opacity="0.5" stroke-width="0.55"/><use href="#fw" fill="url(#rg)"/><circle r="1.3" fill="#d7cfef"/></g><g transform="translate(397.5 335.9) rotate(36) scale(1.06)"><use href="#fw" fill="#a0b8d0" stroke="#f4efe0" stroke-opacity="0.5" stroke-width="0.55"/><use href="#fw" fill="url(#rg)"/><circle r="1.3" fill="#cfdbe7"/></g><g transform="translate(558.0 289.4) rotate(58) scale(1.06)"><use href="#fw" fill="#f09040" stroke="#f4efe0" stroke-opacity="0.5" stroke-width="0.55"/><use href="#fw" fill="url(#rg)"/><circle r="1.3" fill="#f7c79f"/></g><g transform="translate(448.6 399.4) rotate(59) scale(0.91)"><use href="#fw" fill="#f5c830" stroke="#f4efe0" stroke-opacity="0.5" stroke-width="0.55"/><use href="#fw" fill="url(#rg)"/><circle r="1.3" fill="#fae397"/></g><g transform="translate(489.5 239.1) rotate(8) scale(1.05)"><use href="#fw" fill="#a0b8d0" stroke="#f4efe0" stroke-opacity="0.5" stroke-width="0.55"/><use href="#fw" fill="url(#rg)"/><circle r="1.3" fill="#cfdbe7"/></g><g transform="translate(314.1 238.2) rotate(18) scale(1.07)"><use href="#fw" fill="#40a8a0" stroke="#f4efe0" stroke-opacity="0.5" stroke-width="0.55"/><use href="#fw" fill="url(#rg)"/><circle r="1.3" fill="#9fd3cf"/></g><g transform="translate(422.1 312.7) rotate(18) scale(1.02)"><use href="#fw" fill="#466ec8" stroke="#f4efe0" stroke-opacity="0.5" stroke-width="0.55"/><use href="#fw" fill="url(#rg)"/><circle r="1.3" fill="#a2b6e3"/></g><g transform="translate(498.7 420.7) rotate(6) scale(1.05)"><use href="#fw" fill="#c8aa8c" stroke="#f4efe0" stroke-opacity="0.5" stroke-width="0.55"/><use href="#fw" fill="url(#rg)"/><circle r="1.3" fill="#e3d4c5"/></g><g transform="translate(641.1 215.3) rotate(66) scale(0.95)"><use href="#fw" fill="#e83c8c" stroke="#f4efe0" stroke-opacity="0.5" stroke-width="0.55"/><use href="#fw" fill="url(#rg)"/><circle r="1.3" fill="#f39dc5"/></g><g transform="translate(602.5 302.8) rotate(15) scale(1.05)"><use href="#fw" fill="#f09040" stroke="#f4efe0" stroke-opacity="0.5" stroke-width="0.55"/><use href="#fw" fill="url(#rg)"/><circle r="1.3" fill="#f7c79f"/></g><g transform="translate(361.8 290.7) rotate(47) scale(1.00)"><use href="#fw" fill="#a0b8d0" stroke="#f4efe0" stroke-opacity="0.5" stroke-width="0.55"/><use href="#fw" fill="url(#rg)"/><circle r="1.3" fill="#cfdbe7"/></g><g transform="translate(531.1 250.4) rotate(47) scale(0.91)"><use href="#fw" fill="#a0b8d0" stroke="#f4efe0" stroke-opacity="0.5" stroke-width="0.55"/><use href="#fw" fill="url(#rg)"/><circle r="1.3" fill="#cfdbe7"/></g><g transform="translate(317.2 300.4) rotate(18) scale(0.91)"><use href="#fw" fill="#f0a080" stroke="#f4efe0" stroke-opacity="0.5" stroke-width="0.55"/><use href="#fw" fill="url(#rg)"/><circle r="1.3" fill="#f7cfbf"/></g><g transform="translate(494.1 333.5) rotate(62) scale(0.94)"><use href="#fw" fill="#d030a0" stroke="#f4efe0" stroke-opacity="0.5" stroke-width="0.55"/><use href="#fw" fill="url(#rg)"/><circle r="1.3" fill="#e797cf"/></g><g transform="translate(401.0 409.3) rotate(44) scale(0.91)"><use href="#fw" fill="#40a8a0" stroke="#f4efe0" stroke-opacity="0.5" stroke-width="0.55"/><use href="#fw" fill="url(#rg)"/><circle r="1.3" fill="#9fd3cf"/></g><g transform="translate(639.4 258.2) rotate(27) scale(1.04)"><use href="#fw" fill="#f0a080" stroke="#f4efe0" stroke-opacity="0.5" stroke-width="0.55"/><use href="#fw" fill="url(#rg)"/><circle r="1.3" fill="#f7cfbf"/></g><g transform="translate(408.3 332.8) rotate(45) scale(1.01)"><use href="#fw" fill="#a0b8d0" stroke="#f4efe0" stroke-opacity="0.5" stroke-width="0.55"/><use href="#fw" fill="url(#rg)"/><circle r="1.3" fill="#cfdbe7"/></g><g transform="translate(565.2 343.2) rotate(61) scale(0.94)"><use href="#fw" fill="#90d080" stroke="#f4efe0" stroke-opacity="0.5" stroke-width="0.55"/><use href="#fw" fill="url(#rg)"/><circle r="1.3" fill="#c7e7bf"/></g><g transform="translate(471.9 183.6) rotate(7) scale(0.98)"><use href="#fw" fill="#d030a0" stroke="#f4efe0" stroke-opacity="0.5" stroke-width="0.55"/><use href="#fw" fill="url(#rg)"/><circle r="1.3" fill="#e797cf"/></g><g transform="translate(568.3 205.8) rotate(19) scale(1.06)"><use href="#fw" fill="#f5c830" stroke="#f4efe0" stroke-opacity="0.5" stroke-width="0.55"/><use href="#fw" fill="url(#rg)"/><circle r="1.3" fill="#fae397"/></g><g transform="translate(609.7 247.5) rotate(72) scale(0.90)"><use href="#fw" fill="#f0a0c0" stroke="#f4efe0" stroke-opacity="0.5" stroke-width="0.55"/><use href="#fw" fill="url(#rg)"/><circle r="1.3" fill="#f7cfdf"/></g><g transform="translate(386.4 310.8) rotate(41) scale(0.90)"><use href="#fw" fill="#a0b8d0" stroke="#f4efe0" stroke-opacity="0.5" stroke-width="0.55"/><use href="#fw" fill="url(#rg)"/><circle r="1.3" fill="#cfdbe7"/></g><g transform="translate(591.6 409.8) rotate(65) scale(1.01)"><use href="#fw" fill="#60b8e8" stroke="#f4efe0" stroke-opacity="0.5" stroke-width="0.55"/><use href="#fw" fill="url(#rg)"/><circle r="1.3" fill="#afdbf3"/></g><g transform="translate(547.5 270.6) rotate(49) scale(0.95)"><use href="#fw" fill="#8050c0" stroke="#f4efe0" stroke-opacity="0.5" stroke-width="0.55"/><use href="#fw" fill="url(#rg)"/><circle r="1.3" fill="#bfa7df"/></g><g transform="translate(404.9 364.7) rotate(57) scale(0.98)"><use href="#fw" fill="#d030a0" stroke="#f4efe0" stroke-opacity="0.5" stroke-width="0.55"/><use href="#fw" fill="url(#rg)"/><circle r="1.3" fill="#e797cf"/></g><g transform="translate(452.6 258.5) rotate(33) scale(1.01)"><use href="#fw" fill="#d030a0" stroke="#f4efe0" stroke-opacity="0.5" stroke-width="0.55"/><use href="#fw" fill="url(#rg)"/><circle r="1.3" fill="#e797cf"/></g><g transform="translate(402.6 237.1) rotate(30) scale(1.02)"><use href="#fw" fill="#a0b8d0" stroke="#f4efe0" stroke-opacity="0.5" stroke-width="0.55"/><use href="#fw" fill="url(#rg)"/><circle r="1.3" fill="#cfdbe7"/></g><g transform="translate(578.4 345.1) rotate(66) scale(1.03)"><use href="#fw" fill="#a0b8d0" stroke="#f4efe0" stroke-opacity="0.5" stroke-width="0.55"/><use href="#fw" fill="url(#rg)"/><circle r="1.3" fill="#cfdbe7"/></g><g transform="translate(459.8 354.8) rotate(71) scale(0.96)"><use href="#fw" fill="#c8aa8c" stroke="#f4efe0" stroke-opacity="0.5" stroke-width="0.55"/><use href="#fw" fill="url(#rg)"/><circle r="1.3" fill="#e3d4c5"/></g><g transform="translate(432.9 246.7) rotate(65) scale(0.93)"><use href="#fw" fill="#466ec8" stroke="#f4efe0" stroke-opacity="0.5" stroke-width="0.55"/><use href="#fw" fill="url(#rg)"/><circle r="1.3" fill="#a2b6e3"/></g><g transform="translate(507.4 203.0) rotate(36) scale(1.06)"><use href="#fw" fill="#50b050" stroke="#f4efe0" stroke-opacity="0.5" stroke-width="0.55"/><use href="#fw" fill="url(#rg)"/><circle r="1.3" fill="#a7d7a7"/></g><g transform="translate(425.6 408.8) rotate(4) scale(1.01)"><use href="#fw" fill="#f0e890" stroke="#f4efe0" stroke-opacity="0.5" stroke-width="0.55"/><use href="#fw" fill="url(#rg)"/><circle r="1.3" fill="#f7f3c7"/></g><g transform="translate(552.6 368.4) rotate(2) scale(1.06)"><use href="#fw" fill="#f5c830" stroke="#f4efe0" stroke-opacity="0.5" stroke-width="0.55"/><use href="#fw" fill="url(#rg)"/><circle r="1.3" fill="#fae397"/></g><g transform="translate(574.8 325.6) rotate(5) scale(1.05)"><use href="#fw" fill="#40a8a0" stroke="#f4efe0" stroke-opacity="0.5" stroke-width="0.55"/><use href="#fw" fill="url(#rg)"/><circle r="1.3" fill="#9fd3cf"/></g><g transform="translate(571.1 334.6) rotate(32) scale(0.99)"><use href="#fw" fill="#a0b8d0" stroke="#f4efe0" stroke-opacity="0.5" stroke-width="0.55"/><use href="#fw" fill="url(#rg)"/><circle r="1.3" fill="#cfdbe7"/></g><g transform="translate(309.0 247.6) rotate(36) scale(0.99)"><use href="#fw" fill="#c8aa8c" stroke="#f4efe0" stroke-opacity="0.5" stroke-width="0.55"/><use href="#fw" fill="url(#rg)"/><circle r="1.3" fill="#e3d4c5"/></g><g transform="translate(503.8 365.3) rotate(8) scale(0.93)"><use href="#fw" fill="#466ec8" stroke="#f4efe0" stroke-opacity="0.5" stroke-width="0.55"/><use href="#fw" fill="url(#rg)"/><circle r="1.3" fill="#a2b6e3"/></g><g transform="translate(521.3 400.3) rotate(31) scale(1.05)"><use href="#fw" fill="#f0a0c0" stroke="#f4efe0" stroke-opacity="0.5" stroke-width="0.55"/><use href="#fw" fill="url(#rg)"/><circle r="1.3" fill="#f7cfdf"/></g><g transform="translate(444.2 418.7) rotate(31) scale(1.00)"><use href="#fw" fill="#50b050" stroke="#f4efe0" stroke-opacity="0.5" stroke-width="0.55"/><use href="#fw" fill="url(#rg)"/><circle r="1.3" fill="#a7d7a7"/></g><g transform="translate(643.0 224.6) rotate(8) scale(0.99)"><use href="#fw" fill="#b08040" stroke="#f4efe0" stroke-opacity="0.5" stroke-width="0.55"/><use href="#fw" fill="url(#rg)"/><circle r="1.3" fill="#d7bf9f"/></g><g transform="translate(627.8 346.9) rotate(61) scale(1.01)"><use href="#fw" fill="#60b8e8" stroke="#f4efe0" stroke-opacity="0.5" stroke-width="0.55"/><use href="#fw" fill="url(#rg)"/><circle r="1.3" fill="#afdbf3"/></g><g transform="translate(342.4 193.9) rotate(2) scale(1.02)"><use href="#fw" fill="#b0a0e0" stroke="#f4efe0" stroke-opacity="0.5" stroke-width="0.55"/><use href="#fw" fill="url(#rg)"/><circle r="1.3" fill="#d7cfef"/></g><g transform="translate(420.7 246.8) rotate(14) scale(0.94)"><use href="#fw" fill="#f0a080" stroke="#f4efe0" stroke-opacity="0.5" stroke-width="0.55"/><use href="#fw" fill="url(#rg)"/><circle r="1.3" fill="#f7cfbf"/></g><g transform="translate(293.4 366.4) rotate(69) scale(0.97)"><use href="#fw" fill="#f0a080" stroke="#f4efe0" stroke-opacity="0.5" stroke-width="0.55"/><use href="#fw" fill="url(#rg)"/><circle r="1.3" fill="#f7cfbf"/></g><g transform="translate(399.2 356.7) rotate(29) scale(0.99)"><use href="#fw" fill="#f09040" stroke="#f4efe0" stroke-opacity="0.5" stroke-width="0.55"/><use href="#fw" fill="url(#rg)"/><circle r="1.3" fill="#f7c79f"/></g><g transform="translate(430.4 213.8) rotate(10) scale(1.03)"><use href="#fw" fill="#40a8a0" stroke="#f4efe0" stroke-opacity="0.5" stroke-width="0.55"/><use href="#fw" fill="url(#rg)"/><circle r="1.3" fill="#9fd3cf"/></g><g transform="translate(453.5 299.5) rotate(53) scale(1.01)"><use href="#fw" fill="#b08040" stroke="#f4efe0" stroke-opacity="0.5" stroke-width="0.55"/><use href="#fw" fill="url(#rg)"/><circle r="1.3" fill="#d7bf9f"/></g><g transform="translate(463.9 324.6) rotate(68) scale(0.93)"><use href="#fw" fill="#f0a080" stroke="#f4efe0" stroke-opacity="0.5" stroke-width="0.55"/><use href="#fw" fill="url(#rg)"/><circle r="1.3" fill="#f7cfbf"/></g><g transform="translate(615.9 323.2) rotate(30) scale(0.93)"><use href="#fw" fill="#3090e0" stroke="#f4efe0" stroke-opacity="0.5" stroke-width="0.55"/><use href="#fw" fill="url(#rg)"/><circle r="1.3" fill="#97c7ef"/></g><g transform="translate(338.9 387.9) rotate(27) scale(0.93)"><use href="#fw" fill="#a0b8d0" stroke="#f4efe0" stroke-opacity="0.5" stroke-width="0.55"/><use href="#fw" fill="url(#rg)"/><circle r="1.3" fill="#cfdbe7"/></g><g transform="translate(309.5 398.9) rotate(7) scale(1.04)"><use href="#fw" fill="#60b8e8" stroke="#f4efe0" stroke-opacity="0.5" stroke-width="0.55"/><use href="#fw" fill="url(#rg)"/><circle r="1.3" fill="#afdbf3"/></g><g transform="translate(500.3 235.5) rotate(67) scale(0.93)"><use href="#fw" fill="#40a8a0" stroke="#f4efe0" stroke-opacity="0.5" stroke-width="0.55"/><use href="#fw" fill="url(#rg)"/><circle r="1.3" fill="#9fd3cf"/></g><g transform="translate(496.7 355.1) rotate(52) scale(1.07)"><use href="#fw" fill="#40a8a0" stroke="#f4efe0" stroke-opacity="0.5" stroke-width="0.55"/><use href="#fw" fill="url(#rg)"/><circle r="1.3" fill="#9fd3cf"/></g><g transform="translate(321.9 336.7) rotate(17) scale(1.07)"><use href="#fw" fill="#c8aa8c" stroke="#f4efe0" stroke-opacity="0.5" stroke-width="0.55"/><use href="#fw" fill="url(#rg)"/><circle r="1.3" fill="#e3d4c5"/></g><g transform="translate(434.7 181.1) rotate(55) scale(0.99)"><use href="#fw" fill="#f5c830" stroke="#f4efe0" stroke-opacity="0.5" stroke-width="0.55"/><use href="#fw" fill="url(#rg)"/><circle r="1.3" fill="#fae397"/></g><g transform="translate(410.8 292.2) rotate(61) scale(1.01)"><use href="#fw" fill="#f0a080" stroke="#f4efe0" stroke-opacity="0.5" stroke-width="0.55"/><use href="#fw" fill="url(#rg)"/><circle r="1.3" fill="#f7cfbf"/></g><g transform="translate(460.1 398.1) rotate(25) scale(0.98)"><use href="#fw" fill="#c8aa8c" stroke="#f4efe0" stroke-opacity="0.5" stroke-width="0.55"/><use href="#fw" fill="url(#rg)"/><circle r="1.3" fill="#e3d4c5"/></g><g transform="translate(444.9 183.2) rotate(6) scale(0.91)"><use href="#fw" fill="#b08040" stroke="#f4efe0" stroke-opacity="0.5" stroke-width="0.55"/><use href="#fw" fill="url(#rg)"/><circle r="1.3" fill="#d7bf9f"/></g><g transform="translate(610.1 224.5) rotate(64) scale(0.97)"><use href="#fw" fill="#f0a0c0" stroke="#f4efe0" stroke-opacity="0.5" stroke-width="0.55"/><use href="#fw" fill="url(#rg)"/><circle r="1.3" fill="#f7cfdf"/></g><g transform="translate(298.6 289.6) rotate(57) scale(0.93)"><use href="#fw" fill="#f5c830" stroke="#f4efe0" stroke-opacity="0.5" stroke-width="0.55"/><use href="#fw" fill="url(#rg)"/><circle r="1.3" fill="#fae397"/></g><g transform="translate(395.3 422.6) rotate(11) scale(0.92)"><use href="#fw" fill="#f0a080" stroke="#f4efe0" stroke-opacity="0.5" stroke-width="0.55"/><use href="#fw" fill="url(#rg)"/><circle r="1.3" fill="#f7cfbf"/></g><g transform="translate(584.5 228.1) rotate(18) scale(0.92)"><use href="#fw" fill="#466ec8" stroke="#f4efe0" stroke-opacity="0.5" stroke-width="0.55"/><use href="#fw" fill="url(#rg)"/><circle r="1.3" fill="#a2b6e3"/></g><g transform="translate(614.2 259.4) rotate(33) scale(0.96)"><use href="#fw" fill="#e6786e" stroke="#f4efe0" stroke-opacity="0.5" stroke-width="0.55"/><use href="#fw" fill="url(#rg)"/><circle r="1.3" fill="#f2bbb6"/></g><g transform="translate(496.0 293.5) rotate(55) scale(0.93)"><use href="#fw" fill="#b0a0e0" stroke="#f4efe0" stroke-opacity="0.5" stroke-width="0.55"/><use href="#fw" fill="url(#rg)"/><circle r="1.3" fill="#d7cfef"/></g><g transform="translate(385.0 268.0) rotate(11) scale(1.01)"><use href="#fw" fill="#b0a0e0" stroke="#f4efe0" stroke-opacity="0.5" stroke-width="0.55"/><use href="#fw" fill="url(#rg)"/><circle r="1.3" fill="#d7cfef"/></g><g transform="translate(392.3 365.3) rotate(19) scale(0.92)"><use href="#fw" fill="#e83c8c" stroke="#f4efe0" stroke-opacity="0.5" stroke-width="0.55"/><use href="#fw" fill="url(#rg)"/><circle r="1.3" fill="#f39dc5"/></g><g transform="translate(317.6 278.1) rotate(14) scale(1.00)"><use href="#fw" fill="#60b8e8" stroke="#f4efe0" stroke-opacity="0.5" stroke-width="0.55"/><use href="#fw" fill="url(#rg)"/><circle r="1.3" fill="#afdbf3"/></g><g transform="translate(457.7 267.3) rotate(44) scale(1.04)"><use href="#fw" fill="#e03c30" stroke="#f4efe0" stroke-opacity="0.5" stroke-width="0.55"/><use href="#fw" fill="url(#rg)"/><circle r="1.3" fill="#ef9d97"/></g><g transform="translate(565.0 322.8) rotate(32) scale(1.03)"><use href="#fw" fill="#f0a0c0" stroke="#f4efe0" stroke-opacity="0.5" stroke-width="0.55"/><use href="#fw" fill="url(#rg)"/><circle r="1.3" fill="#f7cfdf"/></g><g transform="translate(345.0 289.9) rotate(53) scale(1.03)"><use href="#fw" fill="#e03c30" stroke="#f4efe0" stroke-opacity="0.5" stroke-width="0.55"/><use href="#fw" fill="url(#rg)"/><circle r="1.3" fill="#ef9d97"/></g><g transform="translate(378.7 256.4) rotate(28) scale(1.06)"><use href="#fw" fill="#f5c830" stroke="#f4efe0" stroke-opacity="0.5" stroke-width="0.55"/><use href="#fw" fill="url(#rg)"/><circle r="1.3" fill="#fae397"/></g><g transform="translate(578.5 387.6) rotate(41) scale(0.93)"><use href="#fw" fill="#e83c8c" stroke="#f4efe0" stroke-opacity="0.5" stroke-width="0.55"/><use href="#fw" fill="url(#rg)"/><circle r="1.3" fill="#f39dc5"/></g><g transform="translate(553.9 279.0) rotate(43) scale(0.98)"><use href="#fw" fill="#8050c0" stroke="#f4efe0" stroke-opacity="0.5" stroke-width="0.55"/><use href="#fw" fill="url(#rg)"/><circle r="1.3" fill="#bfa7df"/></g><g transform="translate(342.6 300.4) rotate(12) scale(0.97)"><use href="#fw" fill="#8050c0" stroke="#f4efe0" stroke-opacity="0.5" stroke-width="0.55"/><use href="#fw" fill="url(#rg)"/><circle r="1.3" fill="#bfa7df"/></g><g transform="translate(642.5 421.8) rotate(25) scale(1.05)"><use href="#fw" fill="#b0a0e0" stroke="#f4efe0" stroke-opacity="0.5" stroke-width="0.55"/><use href="#fw" fill="url(#rg)"/><circle r="1.3" fill="#d7cfef"/></g><g transform="translate(298.1 355.2) rotate(54) scale(0.96)"><use href="#fw" fill="#f0a0c0" stroke="#f4efe0" stroke-opacity="0.5" stroke-width="0.55"/><use href="#fw" fill="url(#rg)"/><circle r="1.3" fill="#f7cfdf"/></g><g transform="translate(545.3 293.4) rotate(69) scale(1.07)"><use href="#fw" fill="#f0a0c0" stroke="#f4efe0" stroke-opacity="0.5" stroke-width="0.55"/><use href="#fw" fill="url(#rg)"/><circle r="1.3" fill="#f7cfdf"/></g><g transform="translate(619.9 355.2) rotate(29) scale(0.91)"><use href="#fw" fill="#466ec8" stroke="#f4efe0" stroke-opacity="0.5" stroke-width="0.55"/><use href="#fw" fill="url(#rg)"/><circle r="1.3" fill="#a2b6e3"/></g><g transform="translate(521.5 248.5) rotate(24) scale(0.94)"><use href="#fw" fill="#60b8e8" stroke="#f4efe0" stroke-opacity="0.5" stroke-width="0.55"/><use href="#fw" fill="url(#rg)"/><circle r="1.3" fill="#afdbf3"/></g><g transform="translate(397.9 182.8) rotate(66) scale(0.95)"><use href="#fw" fill="#50b050" stroke="#f4efe0" stroke-opacity="0.5" stroke-width="0.55"/><use href="#fw" fill="url(#rg)"/><circle r="1.3" fill="#a7d7a7"/></g><g transform="translate(577.8 366.4) rotate(25) scale(1.07)"><use href="#fw" fill="#60b8e8" stroke="#f4efe0" stroke-opacity="0.5" stroke-width="0.55"/><use href="#fw" fill="url(#rg)"/><circle r="1.3" fill="#afdbf3"/></g><g transform="translate(644.4 312.9) rotate(56) scale(0.99)"><use href="#fw" fill="#60b8e8" stroke="#f4efe0" stroke-opacity="0.5" stroke-width="0.55"/><use href="#fw" fill="url(#rg)"/><circle r="1.3" fill="#afdbf3"/></g><g transform="translate(310.9 314.8) rotate(38) scale(0.91)"><use href="#fw" fill="#50b050" stroke="#f4efe0" stroke-opacity="0.5" stroke-width="0.55"/><use href="#fw" fill="url(#rg)"/><circle r="1.3" fill="#a7d7a7"/></g><g transform="translate(322.3 181.1) rotate(4) scale(0.92)"><use href="#fw" fill="#3090e0" stroke="#f4efe0" stroke-opacity="0.5" stroke-width="0.55"/><use href="#fw" fill="url(#rg)"/><circle r="1.3" fill="#97c7ef"/></g><g transform="translate(473.6 313.8) rotate(10) scale(0.98)"><use href="#fw" fill="#f5c830" stroke="#f4efe0" stroke-opacity="0.5" stroke-width="0.55"/><use href="#fw" fill="url(#rg)"/><circle r="1.3" fill="#fae397"/></g><g transform="translate(367.9 237.0) rotate(2) scale(0.94)"><use href="#fw" fill="#e83c8c" stroke="#f4efe0" stroke-opacity="0.5" stroke-width="0.55"/><use href="#fw" fill="url(#rg)"/><circle r="1.3" fill="#f39dc5"/></g><g transform="translate(488.0 302.7) rotate(38) scale(0.96)"><use href="#fw" fill="#f0a0c0" stroke="#f4efe0" stroke-opacity="0.5" stroke-width="0.55"/><use href="#fw" fill="url(#rg)"/><circle r="1.3" fill="#f7cfdf"/></g><g transform="translate(594.3 247.0) rotate(54) scale(1.07)"><use href="#fw" fill="#f0a080" stroke="#f4efe0" stroke-opacity="0.5" stroke-width="0.55"/><use href="#fw" fill="url(#rg)"/><circle r="1.3" fill="#f7cfbf"/></g><g transform="translate(293.5 216.7) rotate(71) scale(0.92)"><use href="#fw" fill="#60b8e8" stroke="#f4efe0" stroke-opacity="0.5" stroke-width="0.55"/><use href="#fw" fill="url(#rg)"/><circle r="1.3" fill="#afdbf3"/></g><g transform="translate(354.1 407.7) rotate(41) scale(1.04)"><use href="#fw" fill="#466ec8" stroke="#f4efe0" stroke-opacity="0.5" stroke-width="0.55"/><use href="#fw" fill="url(#rg)"/><circle r="1.3" fill="#a2b6e3"/></g><g transform="translate(334.2 358.2) rotate(69) scale(1.01)"><use href="#fw" fill="#e83c8c" stroke="#f4efe0" stroke-opacity="0.5" stroke-width="0.55"/><use href="#fw" fill="url(#rg)"/><circle r="1.3" fill="#f39dc5"/></g><g transform="translate(566.3 302.1) rotate(8) scale(0.91)"><use href="#fw" fill="#f0a080" stroke="#f4efe0" stroke-opacity="0.5" stroke-width="0.55"/><use href="#fw" fill="url(#rg)"/><circle r="1.3" fill="#f7cfbf"/></g><g transform="translate(558.8 245.8) rotate(39) scale(0.91)"><use href="#fw" fill="#b0a0e0" stroke="#f4efe0" stroke-opacity="0.5" stroke-width="0.55"/><use href="#fw" fill="url(#rg)"/><circle r="1.3" fill="#d7cfef"/></g><g transform="translate(476.9 260.2) rotate(3) scale(0.99)"><use href="#fw" fill="#b08040" stroke="#f4efe0" stroke-opacity="0.5" stroke-width="0.55"/><use href="#fw" fill="url(#rg)"/><circle r="1.3" fill="#d7bf9f"/></g><g transform="translate(565.3 280.8) rotate(24) scale(0.91)"><use href="#fw" fill="#50b050" stroke="#f4efe0" stroke-opacity="0.5" stroke-width="0.55"/><use href="#fw" fill="url(#rg)"/><circle r="1.3" fill="#a7d7a7"/></g><g transform="translate(645.0 205.7) rotate(14) scale(1.07)"><use href="#fw" fill="#f0e890" stroke="#f4efe0" stroke-opacity="0.5" stroke-width="0.55"/><use href="#fw" fill="url(#rg)"/><circle r="1.3" fill="#f7f3c7"/></g><g transform="translate(507.7 335.3) rotate(65) scale(0.97)"><use href="#fw" fill="#f0a0c0" stroke="#f4efe0" stroke-opacity="0.5" stroke-width="0.55"/><use href="#fw" fill="url(#rg)"/><circle r="1.3" fill="#f7cfdf"/></g><g transform="translate(533.9 311.7) rotate(18) scale(0.97)"><use href="#fw" fill="#466ec8" stroke="#f4efe0" stroke-opacity="0.5" stroke-width="0.55"/><use href="#fw" fill="url(#rg)"/><circle r="1.3" fill="#a2b6e3"/></g><g transform="translate(555.8 336.4) rotate(1) scale(1.03)"><use href="#fw" fill="#f0a080" stroke="#f4efe0" stroke-opacity="0.5" stroke-width="0.55"/><use href="#fw" fill="url(#rg)"/><circle r="1.3" fill="#f7cfbf"/></g><g transform="translate(482.6 184.2) rotate(51) scale(0.91)"><use href="#fw" fill="#a0b8d0" stroke="#f4efe0" stroke-opacity="0.5" stroke-width="0.55"/><use href="#fw" fill="url(#rg)"/><circle r="1.3" fill="#cfdbe7"/></g><g transform="translate(410.5 314.4) rotate(21) scale(1.03)"><use href="#fw" fill="#f09040" stroke="#f4efe0" stroke-opacity="0.5" stroke-width="0.55"/><use href="#fw" fill="url(#rg)"/><circle r="1.3" fill="#f7c79f"/></g><g transform="translate(638.1 389.9) rotate(49) scale(1.04)"><use href="#fw" fill="#a0b8d0" stroke="#f4efe0" stroke-opacity="0.5" stroke-width="0.55"/><use href="#fw" fill="url(#rg)"/><circle r="1.3" fill="#cfdbe7"/></g><g transform="translate(491.4 324.5) rotate(4) scale(1.01)"><use href="#fw" fill="#b0a0e0" stroke="#f4efe0" stroke-opacity="0.5" stroke-width="0.55"/><use href="#fw" fill="url(#rg)"/><circle r="1.3" fill="#d7cfef"/></g><g transform="translate(322.8 400.5) rotate(66) scale(0.92)"><use href="#fw" fill="#c8aa8c" stroke="#f4efe0" stroke-opacity="0.5" stroke-width="0.55"/><use href="#fw" fill="url(#rg)"/><circle r="1.3" fill="#e3d4c5"/></g><g transform="translate(613.6 196.1) rotate(11) scale(0.99)"><use href="#fw" fill="#8050c0" stroke="#f4efe0" stroke-opacity="0.5" stroke-width="0.55"/><use href="#fw" fill="url(#rg)"/><circle r="1.3" fill="#bfa7df"/></g><g transform="translate(316.6 411.1) rotate(51) scale(1.01)"><use href="#fw" fill="#e83c8c" stroke="#f4efe0" stroke-opacity="0.5" stroke-width="0.55"/><use href="#fw" fill="url(#rg)"/><circle r="1.3" fill="#f39dc5"/></g><g transform="translate(376.2 385.7) rotate(65) scale(1.07)"><use href="#fw" fill="#f5c830" stroke="#f4efe0" stroke-opacity="0.5" stroke-width="0.55"/><use href="#fw" fill="url(#rg)"/><circle r="1.3" fill="#fae397"/></g><g transform="translate(324.2 314.0) rotate(66) scale(0.97)"><use href="#fw" fill="#a0b8d0" stroke="#f4efe0" stroke-opacity="0.5" stroke-width="0.55"/><use href="#fw" fill="url(#rg)"/><circle r="1.3" fill="#cfdbe7"/></g><g transform="translate(533.6 334.4) rotate(16) scale(0.90)"><use href="#fw" fill="#f09040" stroke="#f4efe0" stroke-opacity="0.5" stroke-width="0.55"/><use href="#fw" fill="url(#rg)"/><circle r="1.3" fill="#f7c79f"/></g><g transform="translate(482.3 357.8) rotate(45) scale(0.97)"><use href="#fw" fill="#e03c30" stroke="#f4efe0" stroke-opacity="0.5" stroke-width="0.55"/><use href="#fw" fill="url(#rg)"/><circle r="1.3" fill="#ef9d97"/></g><g transform="translate(464.8 410.0) rotate(11) scale(1.00)"><use href="#fw" fill="#8050c0" stroke="#f4efe0" stroke-opacity="0.5" stroke-width="0.55"/><use href="#fw" fill="url(#rg)"/><circle r="1.3" fill="#bfa7df"/></g><g transform="translate(633.9 353.5) rotate(18) scale(0.91)"><use href="#fw" fill="#e83c8c" stroke="#f4efe0" stroke-opacity="0.5" stroke-width="0.55"/><use href="#fw" fill="url(#rg)"/><circle r="1.3" fill="#f39dc5"/></g><g transform="translate(554.4 299.8) rotate(52) scale(1.07)"><use href="#fw" fill="#60b8e8" stroke="#f4efe0" stroke-opacity="0.5" stroke-width="0.55"/><use href="#fw" fill="url(#rg)"/><circle r="1.3" fill="#afdbf3"/></g><g transform="translate(466.0 239.4) rotate(4) scale(0.93)"><use href="#fw" fill="#60b8e8" stroke="#f4efe0" stroke-opacity="0.5" stroke-width="0.55"/><use href="#fw" fill="url(#rg)"/><circle r="1.3" fill="#afdbf3"/></g><g transform="translate(454.4 213.8) rotate(41) scale(0.99)"><use href="#fw" fill="#b0a0e0" stroke="#f4efe0" stroke-opacity="0.5" stroke-width="0.55"/><use href="#fw" fill="url(#rg)"/><circle r="1.3" fill="#d7cfef"/></g><g transform="translate(471.7 336.7) rotate(27) scale(0.91)"><use href="#fw" fill="#a0b8d0" stroke="#f4efe0" stroke-opacity="0.5" stroke-width="0.55"/><use href="#fw" fill="url(#rg)"/><circle r="1.3" fill="#cfdbe7"/></g><g transform="translate(418.0 390.2) rotate(69) scale(1.05)"><use href="#fw" fill="#60b8e8" stroke="#f4efe0" stroke-opacity="0.5" stroke-width="0.55"/><use href="#fw" fill="url(#rg)"/><circle r="1.3" fill="#afdbf3"/></g><g transform="translate(634.9 268.2) rotate(15) scale(1.05)"><use href="#fw" fill="#f0a0c0" stroke="#f4efe0" stroke-opacity="0.5" stroke-width="0.55"/><use href="#fw" fill="url(#rg)"/><circle r="1.3" fill="#f7cfdf"/></g><g transform="translate(378.6 303.1) rotate(8) scale(0.98)"><use href="#fw" fill="#466ec8" stroke="#f4efe0" stroke-opacity="0.5" stroke-width="0.55"/><use href="#fw" fill="url(#rg)"/><circle r="1.3" fill="#a2b6e3"/></g><g transform="translate(509.7 267.0) rotate(66) scale(1.05)"><use href="#fw" fill="#a0b8d0" stroke="#f4efe0" stroke-opacity="0.5" stroke-width="0.55"/><use href="#fw" fill="url(#rg)"/><circle r="1.3" fill="#cfdbe7"/></g><g transform="translate(568.9 181.6) rotate(1) scale(0.94)"><use href="#fw" fill="#e83c8c" stroke="#f4efe0" stroke-opacity="0.5" stroke-width="0.55"/><use href="#fw" fill="url(#rg)"/><circle r="1.3" fill="#f39dc5"/></g><g transform="translate(634.1 290.4) rotate(35) scale(1.01)"><use href="#fw" fill="#f0e890" stroke="#f4efe0" stroke-opacity="0.5" stroke-width="0.55"/><use href="#fw" fill="url(#rg)"/><circle r="1.3" fill="#f7f3c7"/></g><g transform="translate(496.6 250.1) rotate(13) scale(0.97)"><use href="#fw" fill="#e6786e" stroke="#f4efe0" stroke-opacity="0.5" stroke-width="0.55"/><use href="#fw" fill="url(#rg)"/><circle r="1.3" fill="#f2bbb6"/></g><g transform="translate(590.6 303.9) rotate(11) scale(1.01)"><use href="#fw" fill="#90d080" stroke="#f4efe0" stroke-opacity="0.5" stroke-width="0.55"/><use href="#fw" fill="url(#rg)"/><circle r="1.3" fill="#c7e7bf"/></g><g transform="translate(589.6 192.8) rotate(4) scale(0.97)"><use href="#fw" fill="#f5c830" stroke="#f4efe0" stroke-opacity="0.5" stroke-width="0.55"/><use href="#fw" fill="url(#rg)"/><circle r="1.3" fill="#fae397"/></g><g transform="translate(304.3 234.8) rotate(41) scale(1.04)"><use href="#fw" fill="#e83c8c" stroke="#f4efe0" stroke-opacity="0.5" stroke-width="0.55"/><use href="#fw" fill="url(#rg)"/><circle r="1.3" fill="#f39dc5"/></g><g transform="translate(589.8 365.0) rotate(44) scale(0.92)"><use href="#fw" fill="#c8aa8c" stroke="#f4efe0" stroke-opacity="0.5" stroke-width="0.55"/><use href="#fw" fill="url(#rg)"/><circle r="1.3" fill="#e3d4c5"/></g><g transform="translate(441.0 410.9) rotate(1) scale(0.96)"><use href="#fw" fill="#f09040" stroke="#f4efe0" stroke-opacity="0.5" stroke-width="0.55"/><use href="#fw" fill="url(#rg)"/><circle r="1.3" fill="#f7c79f"/></g><g transform="translate(459.3 184.7) rotate(50) scale(1.04)"><use href="#fw" fill="#f0e890" stroke="#f4efe0" stroke-opacity="0.5" stroke-width="0.55"/><use href="#fw" fill="url(#rg)"/><circle r="1.3" fill="#f7f3c7"/></g><g transform="translate(321.7 271.8) rotate(48) scale(1.05)"><use href="#fw" fill="#c8aa8c" stroke="#f4efe0" stroke-opacity="0.5" stroke-width="0.55"/><use href="#fw" fill="url(#rg)"/><circle r="1.3" fill="#e3d4c5"/></g><g transform="translate(386.4 423.0) rotate(58) scale(0.95)"><use href="#fw" fill="#e03c30" stroke="#f4efe0" stroke-opacity="0.5" stroke-width="0.55"/><use href="#fw" fill="url(#rg)"/><circle r="1.3" fill="#ef9d97"/></g><g transform="translate(334.1 267.0) rotate(21) scale(0.91)"><use href="#fw" fill="#f5c830" stroke="#f4efe0" stroke-opacity="0.5" stroke-width="0.55"/><use href="#fw" fill="url(#rg)"/><circle r="1.3" fill="#fae397"/></g><g transform="translate(531.0 354.2) rotate(19) scale(1.03)"><use href="#fw" fill="#50b050" stroke="#f4efe0" stroke-opacity="0.5" stroke-width="0.55"/><use href="#fw" fill="url(#rg)"/><circle r="1.3" fill="#a7d7a7"/></g><g transform="translate(447.7 224.1) rotate(44) scale(1.03)"><use href="#fw" fill="#3090e0" stroke="#f4efe0" stroke-opacity="0.5" stroke-width="0.55"/><use href="#fw" fill="url(#rg)"/><circle r="1.3" fill="#97c7ef"/></g><g transform="translate(546.1 228.3) rotate(28) scale(1.03)"><use href="#fw" fill="#3090e0" stroke="#f4efe0" stroke-opacity="0.5" stroke-width="0.55"/><use href="#fw" fill="url(#rg)"/><circle r="1.3" fill="#97c7ef"/></g><g transform="translate(595.9 422.7) rotate(53) scale(0.94)"><use href="#fw" fill="#90d080" stroke="#f4efe0" stroke-opacity="0.5" stroke-width="0.55"/><use href="#fw" fill="url(#rg)"/><circle r="1.3" fill="#c7e7bf"/></g><g transform="translate(405.3 281.7) rotate(61) scale(1.01)"><use href="#fw" fill="#b0a0e0" stroke="#f4efe0" stroke-opacity="0.5" stroke-width="0.55"/><use href="#fw" fill="url(#rg)"/><circle r="1.3" fill="#d7cfef"/></g><g transform="translate(328.6 193.9) rotate(54) scale(0.92)"><use href="#fw" fill="#f09040" stroke="#f4efe0" stroke-opacity="0.5" stroke-width="0.55"/><use href="#fw" fill="url(#rg)"/><circle r="1.3" fill="#f7c79f"/></g><g transform="translate(463.8 368.5) rotate(7) scale(0.92)"><use href="#fw" fill="#b0a0e0" stroke="#f4efe0" stroke-opacity="0.5" stroke-width="0.55"/><use href="#fw" fill="url(#rg)"/><circle r="1.3" fill="#d7cfef"/></g><g transform="translate(620.1 226.8) rotate(67) scale(0.90)"><use href="#fw" fill="#60b8e8" stroke="#f4efe0" stroke-opacity="0.5" stroke-width="0.55"/><use href="#fw" fill="url(#rg)"/><circle r="1.3" fill="#afdbf3"/></g><g transform="translate(373.9 291.9) rotate(56) scale(1.01)"><use href="#fw" fill="#466ec8" stroke="#f4efe0" stroke-opacity="0.5" stroke-width="0.55"/><use href="#fw" fill="url(#rg)"/><circle r="1.3" fill="#a2b6e3"/></g><g transform="translate(595.4 334.2) rotate(9) scale(0.95)"><use href="#fw" fill="#f09040" stroke="#f4efe0" stroke-opacity="0.5" stroke-width="0.55"/><use href="#fw" fill="url(#rg)"/><circle r="1.3" fill="#f7c79f"/></g><g transform="translate(552.2 191.6) rotate(47) scale(1.04)"><use href="#fw" fill="#a0b8d0" stroke="#f4efe0" stroke-opacity="0.5" stroke-width="0.55"/><use href="#fw" fill="url(#rg)"/><circle r="1.3" fill="#cfdbe7"/></g><g transform="translate(551.7 390.0) rotate(60) scale(1.00)"><use href="#fw" fill="#a0b8d0" stroke="#f4efe0" stroke-opacity="0.5" stroke-width="0.55"/><use href="#fw" fill="url(#rg)"/><circle r="1.3" fill="#cfdbe7"/></g><g transform="translate(570.2 420.7) rotate(28) scale(0.97)"><use href="#fw" fill="#f5c830" stroke="#f4efe0" stroke-opacity="0.5" stroke-width="0.55"/><use href="#fw" fill="url(#rg)"/><circle r="1.3" fill="#fae397"/></g><g transform="translate(457.2 228.2) rotate(67) scale(0.98)"><use href="#fw" fill="#c8aa8c" stroke="#f4efe0" stroke-opacity="0.5" stroke-width="0.55"/><use href="#fw" fill="url(#rg)"/><circle r="1.3" fill="#e3d4c5"/></g><g transform="translate(422.2 183.3) rotate(32) scale(1.05)"><use href="#fw" fill="#a0b8d0" stroke="#f4efe0" stroke-opacity="0.5" stroke-width="0.55"/><use href="#fw" fill="url(#rg)"/><circle r="1.3" fill="#cfdbe7"/></g><g transform="translate(550.5 321.1) rotate(6) scale(1.06)"><use href="#fw" fill="#e83c8c" stroke="#f4efe0" stroke-opacity="0.5" stroke-width="0.55"/><use href="#fw" fill="url(#rg)"/><circle r="1.3" fill="#f39dc5"/></g><g transform="translate(324.1 420.4) rotate(19) scale(1.06)"><use href="#fw" fill="#f0a0c0" stroke="#f4efe0" stroke-opacity="0.5" stroke-width="0.55"/><use href="#fw" fill="url(#rg)"/><circle r="1.3" fill="#f7cfdf"/></g><g transform="translate(534.1 267.6) rotate(50) scale(1.06)"><use href="#fw" fill="#c8aa8c" stroke="#f4efe0" stroke-opacity="0.5" stroke-width="0.55"/><use href="#fw" fill="url(#rg)"/><circle r="1.3" fill="#e3d4c5"/></g><g transform="translate(595.2 290.1) rotate(56) scale(1.00)"><use href="#fw" fill="#f5c830" stroke="#f4efe0" stroke-opacity="0.5" stroke-width="0.55"/><use href="#fw" fill="url(#rg)"/><circle r="1.3" fill="#fae397"/></g><g transform="translate(628.2 301.5) rotate(47) scale(0.92)"><use href="#fw" fill="#c8aa8c" stroke="#f4efe0" stroke-opacity="0.5" stroke-width="0.55"/><use href="#fw" fill="url(#rg)"/><circle r="1.3" fill="#e3d4c5"/></g><g transform="translate(610.3 202.5) rotate(40) scale(0.90)"><use href="#fw" fill="#b0a0e0" stroke="#f4efe0" stroke-opacity="0.5" stroke-width="0.55"/><use href="#fw" fill="url(#rg)"/><circle r="1.3" fill="#d7cfef"/></g><g transform="translate(305.9 194.6) rotate(69) scale(0.93)"><use href="#fw" fill="#f0a080" stroke="#f4efe0" stroke-opacity="0.5" stroke-width="0.55"/><use href="#fw" fill="url(#rg)"/><circle r="1.3" fill="#f7cfbf"/></g><g transform="translate(336.5 292.1) rotate(21) scale(0.99)"><use href="#fw" fill="#40a8a0" stroke="#f4efe0" stroke-opacity="0.5" stroke-width="0.55"/><use href="#fw" fill="url(#rg)"/><circle r="1.3" fill="#9fd3cf"/></g><g transform="translate(559.4 224.9) rotate(4) scale(0.95)"><use href="#fw" fill="#f0a0c0" stroke="#f4efe0" stroke-opacity="0.5" stroke-width="0.55"/><use href="#fw" fill="url(#rg)"/><circle r="1.3" fill="#f7cfdf"/></g><g transform="translate(432.5 204.4) rotate(30) scale(0.99)"><use href="#fw" fill="#f0e890" stroke="#f4efe0" stroke-opacity="0.5" stroke-width="0.55"/><use href="#fw" fill="url(#rg)"/><circle r="1.3" fill="#f7f3c7"/></g><g transform="translate(488.4 345.3) rotate(1) scale(1.07)"><use href="#fw" fill="#60b8e8" stroke="#f4efe0" stroke-opacity="0.5" stroke-width="0.55"/><use href="#fw" fill="url(#rg)"/><circle r="1.3" fill="#afdbf3"/></g><g transform="translate(594.5 271.4) rotate(27) scale(0.96)"><use href="#fw" fill="#e83c8c" stroke="#f4efe0" stroke-opacity="0.5" stroke-width="0.55"/><use href="#fw" fill="url(#rg)"/><circle r="1.3" fill="#f39dc5"/></g><g transform="translate(348.2 310.9) rotate(7) scale(1.03)"><use href="#fw" fill="#8050c0" stroke="#f4efe0" stroke-opacity="0.5" stroke-width="0.55"/><use href="#fw" fill="url(#rg)"/><circle r="1.3" fill="#bfa7df"/></g><g transform="translate(334.7 205.4) rotate(14) scale(0.99)"><use href="#fw" fill="#b0a0e0" stroke="#f4efe0" stroke-opacity="0.5" stroke-width="0.55"/><use href="#fw" fill="url(#rg)"/><circle r="1.3" fill="#d7cfef"/></g><g transform="translate(563.3 260.3) rotate(69) scale(0.93)"><use href="#fw" fill="#b0a0e0" stroke="#f4efe0" stroke-opacity="0.5" stroke-width="0.55"/><use href="#fw" fill="url(#rg)"/><circle r="1.3" fill="#d7cfef"/></g><g transform="translate(632.1 183.1) rotate(5) scale(0.97)"><use href="#fw" fill="#e83c8c" stroke="#f4efe0" stroke-opacity="0.5" stroke-width="0.55"/><use href="#fw" fill="url(#rg)"/><circle r="1.3" fill="#f39dc5"/></g><g transform="translate(594.7 183.5) rotate(62) scale(1.07)"><use href="#fw" fill="#a0b8d0" stroke="#f4efe0" stroke-opacity="0.5" stroke-width="0.55"/><use href="#fw" fill="url(#rg)"/><circle r="1.3" fill="#cfdbe7"/></g><g transform="translate(547.7 401.2) rotate(69) scale(1.02)"><use href="#fw" fill="#f0a080" stroke="#f4efe0" stroke-opacity="0.5" stroke-width="0.55"/><use href="#fw" fill="url(#rg)"/><circle r="1.3" fill="#f7cfbf"/></g><g transform="translate(405.6 195.8) rotate(29) scale(1.04)"><use href="#fw" fill="#d030a0" stroke="#f4efe0" stroke-opacity="0.5" stroke-width="0.55"/><use href="#fw" fill="url(#rg)"/><circle r="1.3" fill="#e797cf"/></g><g transform="translate(589.0 281.2) rotate(9) scale(0.95)"><use href="#fw" fill="#e83c8c" stroke="#f4efe0" stroke-opacity="0.5" stroke-width="0.55"/><use href="#fw" fill="url(#rg)"/><circle r="1.3" fill="#f39dc5"/></g><g transform="translate(370.7 223.9) rotate(27) scale(1.03)"><use href="#fw" fill="#f0a080" stroke="#f4efe0" stroke-opacity="0.5" stroke-width="0.55"/><use href="#fw" fill="url(#rg)"/><circle r="1.3" fill="#f7cfbf"/></g><g transform="translate(428.7 257.8) rotate(47) scale(0.94)"><use href="#fw" fill="#60b8e8" stroke="#f4efe0" stroke-opacity="0.5" stroke-width="0.55"/><use href="#fw" fill="url(#rg)"/><circle r="1.3" fill="#afdbf3"/></g><g transform="translate(442.5 345.4) rotate(6) scale(0.95)"><use href="#fw" fill="#a0b8d0" stroke="#f4efe0" stroke-opacity="0.5" stroke-width="0.55"/><use href="#fw" fill="url(#rg)"/><circle r="1.3" fill="#cfdbe7"/></g><g transform="translate(382.8 332.6) rotate(13) scale(1.03)"><use href="#fw" fill="#a0b8d0" stroke="#f4efe0" stroke-opacity="0.5" stroke-width="0.55"/><use href="#fw" fill="url(#rg)"/><circle r="1.3" fill="#cfdbe7"/></g><g transform="translate(558.5 375.4) rotate(35) scale(0.99)"><use href="#fw" fill="#3090e0" stroke="#f4efe0" stroke-opacity="0.5" stroke-width="0.55"/><use href="#fw" fill="url(#rg)"/><circle r="1.3" fill="#97c7ef"/></g><g transform="translate(308.2 183.6) rotate(3) scale(1.06)"><use href="#fw" fill="#e83c8c" stroke="#f4efe0" stroke-opacity="0.5" stroke-width="0.55"/><use href="#fw" fill="url(#rg)"/><circle r="1.3" fill="#f39dc5"/></g><g transform="translate(453.5 387.2) rotate(46) scale(0.96)"><use href="#fw" fill="#466ec8" stroke="#f4efe0" stroke-opacity="0.5" stroke-width="0.55"/><use href="#fw" fill="url(#rg)"/><circle r="1.3" fill="#a2b6e3"/></g><g transform="translate(584.7 181.6) rotate(30) scale(0.95)"><use href="#fw" fill="#f5c830" stroke="#f4efe0" stroke-opacity="0.5" stroke-width="0.55"/><use href="#fw" fill="url(#rg)"/><circle r="1.3" fill="#fae397"/></g><g transform="translate(410.1 271.4) rotate(58) scale(1.04)"><use href="#fw" fill="#60b8e8" stroke="#f4efe0" stroke-opacity="0.5" stroke-width="0.55"/><use href="#fw" fill="url(#rg)"/><circle r="1.3" fill="#afdbf3"/></g><g transform="translate(559.1 271.6) rotate(46) scale(1.07)"><use href="#fw" fill="#f0a080" stroke="#f4efe0" stroke-opacity="0.5" stroke-width="0.55"/><use href="#fw" fill="url(#rg)"/><circle r="1.3" fill="#f7cfbf"/></g><g transform="translate(465.1 196.4) rotate(35) scale(1.01)"><use href="#fw" fill="#e03c30" stroke="#f4efe0" stroke-opacity="0.5" stroke-width="0.55"/><use href="#fw" fill="url(#rg)"/><circle r="1.3" fill="#ef9d97"/></g><g transform="translate(348.0 376.0) rotate(68) scale(0.99)"><use href="#fw" fill="#60b8e8" stroke="#f4efe0" stroke-opacity="0.5" stroke-width="0.55"/><use href="#fw" fill="url(#rg)"/><circle r="1.3" fill="#afdbf3"/></g><g transform="translate(612.5 365.6) rotate(40) scale(0.97)"><use href="#fw" fill="#e03c30" stroke="#f4efe0" stroke-opacity="0.5" stroke-width="0.55"/><use href="#fw" fill="url(#rg)"/><circle r="1.3" fill="#ef9d97"/></g><g transform="translate(582.3 332.2) rotate(9) scale(0.93)"><use href="#fw" fill="#f0a080" stroke="#f4efe0" stroke-opacity="0.5" stroke-width="0.55"/><use href="#fw" fill="url(#rg)"/><circle r="1.3" fill="#f7cfbf"/></g><g transform="translate(589.8 236.7) rotate(5) scale(0.97)"><use href="#fw" fill="#3090e0" stroke="#f4efe0" stroke-opacity="0.5" stroke-width="0.55"/><use href="#fw" fill="url(#rg)"/><circle r="1.3" fill="#97c7ef"/></g><g transform="translate(528.7 412.1) rotate(16) scale(0.93)"><use href="#fw" fill="#40a8a0" stroke="#f4efe0" stroke-opacity="0.5" stroke-width="0.55"/><use href="#fw" fill="url(#rg)"/><circle r="1.3" fill="#9fd3cf"/></g><g transform="translate(306.1 346.6) rotate(23) scale(1.05)"><use href="#fw" fill="#e03c30" stroke="#f4efe0" stroke-opacity="0.5" stroke-width="0.55"/><use href="#fw" fill="url(#rg)"/><circle r="1.3" fill="#ef9d97"/></g><g transform="translate(417.1 192.5) rotate(2) scale(0.99)"><use href="#fw" fill="#a0b8d0" stroke="#f4efe0" stroke-opacity="0.5" stroke-width="0.55"/><use href="#fw" fill="url(#rg)"/><circle r="1.3" fill="#cfdbe7"/></g><g transform="translate(607.6 292.5) rotate(27) scale(0.94)"><use href="#fw" fill="#a0b8d0" stroke="#f4efe0" stroke-opacity="0.5" stroke-width="0.55"/><use href="#fw" fill="url(#rg)"/><circle r="1.3" fill="#cfdbe7"/></g><g transform="translate(327.4 386.4) rotate(6) scale(1.01)"><use href="#fw" fill="#60b8e8" stroke="#f4efe0" stroke-opacity="0.5" stroke-width="0.55"/><use href="#fw" fill="url(#rg)"/><circle r="1.3" fill="#afdbf3"/></g><g transform="translate(642.7 358.0) rotate(0) scale(1.05)"><use href="#fw" fill="#f0e890" stroke="#f4efe0" stroke-opacity="0.5" stroke-width="0.55"/><use href="#fw" fill="url(#rg)"/><circle r="1.3" fill="#f7f3c7"/></g><g transform="translate(388.9 257.5) rotate(14) scale(1.03)"><use href="#fw" fill="#466ec8" stroke="#f4efe0" stroke-opacity="0.5" stroke-width="0.55"/><use href="#fw" fill="url(#rg)"/><circle r="1.3" fill="#a2b6e3"/></g><g transform="translate(541.2 196.4) rotate(11) scale(1.02)"><use href="#fw" fill="#60b8e8" stroke="#f4efe0" stroke-opacity="0.5" stroke-width="0.55"/><use href="#fw" fill="url(#rg)"/><circle r="1.3" fill="#afdbf3"/></g><g transform="translate(546.0 185.1) rotate(40) scale(1.04)"><use href="#fw" fill="#e6786e" stroke="#f4efe0" stroke-opacity="0.5" stroke-width="0.55"/><use href="#fw" fill="url(#rg)"/><circle r="1.3" fill="#f2bbb6"/></g><g transform="translate(510.5 182.4) rotate(12) scale(1.06)"><use href="#fw" fill="#60b8e8" stroke="#f4efe0" stroke-opacity="0.5" stroke-width="0.55"/><use href="#fw" fill="url(#rg)"/><circle r="1.3" fill="#afdbf3"/></g><g transform="translate(371.5 331.9) rotate(41) scale(0.97)"><use href="#fw" fill="#f0a080" stroke="#f4efe0" stroke-opacity="0.5" stroke-width="0.55"/><use href="#fw" fill="url(#rg)"/><circle r="1.3" fill="#f7cfbf"/></g><g transform="translate(348.0 269.1) rotate(10) scale(0.96)"><use href="#fw" fill="#e03c30" stroke="#f4efe0" stroke-opacity="0.5" stroke-width="0.55"/><use href="#fw" fill="url(#rg)"/><circle r="1.3" fill="#ef9d97"/></g><g transform="translate(632.3 246.2) rotate(29) scale(0.92)"><use href="#fw" fill="#f09040" stroke="#f4efe0" stroke-opacity="0.5" stroke-width="0.55"/><use href="#fw" fill="url(#rg)"/><circle r="1.3" fill="#f7c79f"/></g><g transform="translate(594.3 204.8) rotate(58) scale(0.93)"><use href="#fw" fill="#60b8e8" stroke="#f4efe0" stroke-opacity="0.5" stroke-width="0.55"/><use href="#fw" fill="url(#rg)"/><circle r="1.3" fill="#afdbf3"/></g><g transform="translate(640.3 192.4) rotate(9) scale(0.98)"><use href="#fw" fill="#a0b8d0" stroke="#f4efe0" stroke-opacity="0.5" stroke-width="0.55"/><use href="#fw" fill="url(#rg)"/><circle r="1.3" fill="#cfdbe7"/></g><g transform="translate(316.8 366.2) rotate(35) scale(0.97)"><use href="#fw" fill="#a0b8d0" stroke="#f4efe0" stroke-opacity="0.5" stroke-width="0.55"/><use href="#fw" fill="url(#rg)"/><circle r="1.3" fill="#cfdbe7"/></g><g transform="translate(591.6 322.6) rotate(45) scale(0.94)"><use href="#fw" fill="#f09040" stroke="#f4efe0" stroke-opacity="0.5" stroke-width="0.55"/><use href="#fw" fill="url(#rg)"/><circle r="1.3" fill="#f7c79f"/></g><g transform="translate(367.3 193.0) rotate(50) scale(1.01)"><use href="#fw" fill="#f09040" stroke="#f4efe0" stroke-opacity="0.5" stroke-width="0.55"/><use href="#fw" fill="url(#rg)"/><circle r="1.3" fill="#f7c79f"/></g><g transform="translate(612.1 344.5) rotate(30) scale(1.07)"><use href="#fw" fill="#f5c830" stroke="#f4efe0" stroke-opacity="0.5" stroke-width="0.55"/><use href="#fw" fill="url(#rg)"/><circle r="1.3" fill="#fae397"/></g><g transform="translate(626.5 195.9) rotate(0) scale(1.04)"><use href="#fw" fill="#90d080" stroke="#f4efe0" stroke-opacity="0.5" stroke-width="0.55"/><use href="#fw" fill="url(#rg)"/><circle r="1.3" fill="#c7e7bf"/></g><g transform="translate(339.5 215.3) rotate(70) scale(0.95)"><use href="#fw" fill="#f0e890" stroke="#f4efe0" stroke-opacity="0.5" stroke-width="0.55"/><use href="#fw" fill="url(#rg)"/><circle r="1.3" fill="#f7f3c7"/></g><g transform="translate(445.0 245.8) rotate(37) scale(0.94)"><use href="#fw" fill="#e83c8c" stroke="#f4efe0" stroke-opacity="0.5" stroke-width="0.55"/><use href="#fw" fill="url(#rg)"/><circle r="1.3" fill="#f39dc5"/></g><g transform="translate(576.1 239.1) rotate(18) scale(0.91)"><use href="#fw" fill="#3090e0" stroke="#f4efe0" stroke-opacity="0.5" stroke-width="0.55"/><use href="#fw" fill="url(#rg)"/><circle r="1.3" fill="#97c7ef"/></g><g transform="translate(420.9 227.7) rotate(64) scale(1.04)"><use href="#fw" fill="#3090e0" stroke="#f4efe0" stroke-opacity="0.5" stroke-width="0.55"/><use href="#fw" fill="url(#rg)"/><circle r="1.3" fill="#97c7ef"/></g><g transform="translate(472.2 268.0) rotate(44) scale(0.97)"><use href="#fw" fill="#b0a0e0" stroke="#f4efe0" stroke-opacity="0.5" stroke-width="0.55"/><use href="#fw" fill="url(#rg)"/><circle r="1.3" fill="#d7cfef"/></g><g transform="translate(626.5 259.7) rotate(71) scale(1.06)"><use href="#fw" fill="#f0a080" stroke="#f4efe0" stroke-opacity="0.5" stroke-width="0.55"/><use href="#fw" fill="url(#rg)"/><circle r="1.3" fill="#f7cfbf"/></g><g transform="translate(357.6 245.6) rotate(12) scale(1.00)"><use href="#fw" fill="#f0e890" stroke="#f4efe0" stroke-opacity="0.5" stroke-width="0.55"/><use href="#fw" fill="url(#rg)"/><circle r="1.3" fill="#f7f3c7"/></g><g transform="translate(290.6 301.3) rotate(65) scale(0.91)"><use href="#fw" fill="#50b050" stroke="#f4efe0" stroke-opacity="0.5" stroke-width="0.55"/><use href="#fw" fill="url(#rg)"/><circle r="1.3" fill="#a7d7a7"/></g><g transform="translate(305.7 213.1) rotate(18) scale(1.01)"><use href="#fw" fill="#466ec8" stroke="#f4efe0" stroke-opacity="0.5" stroke-width="0.55"/><use href="#fw" fill="url(#rg)"/><circle r="1.3" fill="#a2b6e3"/></g><g transform="translate(424.1 375.7) rotate(15) scale(0.96)"><use href="#fw" fill="#f09040" stroke="#f4efe0" stroke-opacity="0.5" stroke-width="0.55"/><use href="#fw" fill="url(#rg)"/><circle r="1.3" fill="#f7c79f"/></g><g transform="translate(311.4 290.8) rotate(66) scale(0.93)"><use href="#fw" fill="#40a8a0" stroke="#f4efe0" stroke-opacity="0.5" stroke-width="0.55"/><use href="#fw" fill="url(#rg)"/><circle r="1.3" fill="#9fd3cf"/></g><g transform="translate(430.3 365.1) rotate(15) scale(1.07)"><use href="#fw" fill="#b0a0e0" stroke="#f4efe0" stroke-opacity="0.5" stroke-width="0.55"/><use href="#fw" fill="url(#rg)"/><circle r="1.3" fill="#d7cfef"/></g><g transform="translate(442.0 216.7) rotate(53) scale(0.99)"><use href="#fw" fill="#3090e0" stroke="#f4efe0" stroke-opacity="0.5" stroke-width="0.55"/><use href="#fw" fill="url(#rg)"/><circle r="1.3" fill="#97c7ef"/></g><g transform="translate(552.2 408.3) rotate(68) scale(1.04)"><use href="#fw" fill="#f0a080" stroke="#f4efe0" stroke-opacity="0.5" stroke-width="0.55"/><use href="#fw" fill="url(#rg)"/><circle r="1.3" fill="#f7cfbf"/></g><g transform="translate(349.3 419.3) rotate(43) scale(0.96)"><use href="#fw" fill="#90d080" stroke="#f4efe0" stroke-opacity="0.5" stroke-width="0.55"/><use href="#fw" fill="url(#rg)"/><circle r="1.3" fill="#c7e7bf"/></g><g transform="translate(363.7 325.9) rotate(42) scale(1.05)"><use href="#fw" fill="#b0a0e0" stroke="#f4efe0" stroke-opacity="0.5" stroke-width="0.55"/><use href="#fw" fill="url(#rg)"/><circle r="1.3" fill="#d7cfef"/></g><g transform="translate(314.6 345.9) rotate(30) scale(0.96)"><use href="#fw" fill="#e6786e" stroke="#f4efe0" stroke-opacity="0.5" stroke-width="0.55"/><use href="#fw" fill="url(#rg)"/><circle r="1.3" fill="#f2bbb6"/></g><g transform="translate(533.8 397.0) rotate(57) scale(1.04)"><use href="#fw" fill="#f0a0c0" stroke="#f4efe0" stroke-opacity="0.5" stroke-width="0.55"/><use href="#fw" fill="url(#rg)"/><circle r="1.3" fill="#f7cfdf"/></g><g transform="translate(300.0 224.2) rotate(38) scale(0.92)"><use href="#fw" fill="#a0b8d0" stroke="#f4efe0" stroke-opacity="0.5" stroke-width="0.55"/><use href="#fw" fill="url(#rg)"/><circle r="1.3" fill="#cfdbe7"/></g><g transform="translate(336.2 375.3) rotate(72) scale(1.02)"><use href="#fw" fill="#60b8e8" stroke="#f4efe0" stroke-opacity="0.5" stroke-width="0.55"/><use href="#fw" fill="url(#rg)"/><circle r="1.3" fill="#afdbf3"/></g><g transform="translate(621.6 422.6) rotate(40) scale(0.91)"><use href="#fw" fill="#a0b8d0" stroke="#f4efe0" stroke-opacity="0.5" stroke-width="0.55"/><use href="#fw" fill="url(#rg)"/><circle r="1.3" fill="#cfdbe7"/></g><g transform="translate(409.6 379.7) rotate(19) scale(1.01)"><use href="#fw" fill="#8050c0" stroke="#f4efe0" stroke-opacity="0.5" stroke-width="0.55"/><use href="#fw" fill="url(#rg)"/><circle r="1.3" fill="#bfa7df"/></g><g transform="translate(633.0 399.8) rotate(66) scale(1.07)"><use href="#fw" fill="#f09040" stroke="#f4efe0" stroke-opacity="0.5" stroke-width="0.55"/><use href="#fw" fill="url(#rg)"/><circle r="1.3" fill="#f7c79f"/></g><g transform="translate(527.5 386.8) rotate(53) scale(1.00)"><use href="#fw" fill="#f09040" stroke="#f4efe0" stroke-opacity="0.5" stroke-width="0.55"/><use href="#fw" fill="url(#rg)"/><circle r="1.3" fill="#f7c79f"/></g><g transform="translate(417.9 347.1) rotate(34) scale(1.06)"><use href="#fw" fill="#f09040" stroke="#f4efe0" stroke-opacity="0.5" stroke-width="0.55"/><use href="#fw" fill="url(#rg)"/><circle r="1.3" fill="#f7c79f"/></g><g transform="translate(403.5 388.0) rotate(33) scale(0.99)"><use href="#fw" fill="#b0a0e0" stroke="#f4efe0" stroke-opacity="0.5" stroke-width="0.55"/><use href="#fw" fill="url(#rg)"/><circle r="1.3" fill="#d7cfef"/></g><g transform="translate(501.7 346.8) rotate(23) scale(0.94)"><use href="#fw" fill="#8050c0" stroke="#f4efe0" stroke-opacity="0.5" stroke-width="0.55"/><use href="#fw" fill="url(#rg)"/><circle r="1.3" fill="#bfa7df"/></g><g transform="translate(634.7 226.5) rotate(18) scale(0.98)"><use href="#fw" fill="#3090e0" stroke="#f4efe0" stroke-opacity="0.5" stroke-width="0.55"/><use href="#fw" fill="url(#rg)"/><circle r="1.3" fill="#97c7ef"/></g><g transform="translate(494.0 270.1) rotate(56) scale(1.07)"><use href="#fw" fill="#a0b8d0" stroke="#f4efe0" stroke-opacity="0.5" stroke-width="0.55"/><use href="#fw" fill="url(#rg)"/><circle r="1.3" fill="#cfdbe7"/></g><g transform="translate(300.2 332.0) rotate(67) scale(1.06)"><use href="#fw" fill="#b08040" stroke="#f4efe0" stroke-opacity="0.5" stroke-width="0.55"/><use href="#fw" fill="url(#rg)"/><circle r="1.3" fill="#d7bf9f"/></g><g transform="translate(366.2 302.6) rotate(50) scale(0.95)"><use href="#fw" fill="#b0a0e0" stroke="#f4efe0" stroke-opacity="0.5" stroke-width="0.55"/><use href="#fw" fill="url(#rg)"/><circle r="1.3" fill="#d7cfef"/></g><g transform="translate(402.4 325.9) rotate(4) scale(0.97)"><use href="#fw" fill="#e03c30" stroke="#f4efe0" stroke-opacity="0.5" stroke-width="0.55"/><use href="#fw" fill="url(#rg)"/><circle r="1.3" fill="#ef9d97"/></g><g transform="translate(307.9 379.2) rotate(70) scale(1.01)"><use href="#fw" fill="#e03c30" stroke="#f4efe0" stroke-opacity="0.5" stroke-width="0.55"/><use href="#fw" fill="url(#rg)"/><circle r="1.3" fill="#ef9d97"/></g><g transform="translate(557.4 398.3) rotate(25) scale(1.05)"><use href="#fw" fill="#e83c8c" stroke="#f4efe0" stroke-opacity="0.5" stroke-width="0.55"/><use href="#fw" fill="url(#rg)"/><circle r="1.3" fill="#f39dc5"/></g><g transform="translate(478.4 387.5) rotate(26) scale(1.00)"><use href="#fw" fill="#3090e0" stroke="#f4efe0" stroke-opacity="0.5" stroke-width="0.55"/><use href="#fw" fill="url(#rg)"/><circle r="1.3" fill="#97c7ef"/></g><g transform="translate(329.5 238.1) rotate(22) scale(0.92)"><use href="#fw" fill="#f09040" stroke="#f4efe0" stroke-opacity="0.5" stroke-width="0.55"/><use href="#fw" fill="url(#rg)"/><circle r="1.3" fill="#f7c79f"/></g><g transform="translate(391.0 194.0) rotate(58) scale(1.01)"><use href="#fw" fill="#90d080" stroke="#f4efe0" stroke-opacity="0.5" stroke-width="0.55"/><use href="#fw" fill="url(#rg)"/><circle r="1.3" fill="#c7e7bf"/></g><g transform="translate(388.4 279.1) rotate(55) scale(0.95)"><use href="#fw" fill="#a0b8d0" stroke="#f4efe0" stroke-opacity="0.5" stroke-width="0.55"/><use href="#fw" fill="url(#rg)"/><circle r="1.3" fill="#cfdbe7"/></g><g transform="translate(421.4 421.3) rotate(64) scale(1.02)"><use href="#fw" fill="#60b8e8" stroke="#f4efe0" stroke-opacity="0.5" stroke-width="0.55"/><use href="#fw" fill="url(#rg)"/><circle r="1.3" fill="#afdbf3"/></g><g transform="translate(624.7 322.3) rotate(58) scale(1.05)"><use href="#fw" fill="#f0e890" stroke="#f4efe0" stroke-opacity="0.5" stroke-width="0.55"/><use href="#fw" fill="url(#rg)"/><circle r="1.3" fill="#f7f3c7"/></g><g transform="translate(346.3 204.8) rotate(68) scale(1.04)"><use href="#fw" fill="#b0a0e0" stroke="#f4efe0" stroke-opacity="0.5" stroke-width="0.55"/><use href="#fw" fill="url(#rg)"/><circle r="1.3" fill="#d7cfef"/></g><g transform="translate(395.4 379.7) rotate(19) scale(1.04)"><use href="#fw" fill="#8050c0" stroke="#f4efe0" stroke-opacity="0.5" stroke-width="0.55"/><use href="#fw" fill="url(#rg)"/><circle r="1.3" fill="#bfa7df"/></g><g transform="translate(532.9 185.3) rotate(32) scale(0.99)"><use href="#fw" fill="#f5c830" stroke="#f4efe0" stroke-opacity="0.5" stroke-width="0.55"/><use href="#fw" fill="url(#rg)"/><circle r="1.3" fill="#fae397"/></g><g transform="translate(295.6 205.7) rotate(56) scale(0.99)"><use href="#fw" fill="#b0a0e0" stroke="#f4efe0" stroke-opacity="0.5" stroke-width="0.55"/><use href="#fw" fill="url(#rg)"/><circle r="1.3" fill="#d7cfef"/></g><g transform="translate(639.9 365.4) rotate(41) scale(0.98)"><use href="#fw" fill="#b08040" stroke="#f4efe0" stroke-opacity="0.5" stroke-width="0.55"/><use href="#fw" fill="url(#rg)"/><circle r="1.3" fill="#d7bf9f"/></g><g transform="translate(603.7 235.9) rotate(44) scale(1.03)"><use href="#fw" fill="#466ec8" stroke="#f4efe0" stroke-opacity="0.5" stroke-width="0.55"/><use href="#fw" fill="url(#rg)"/><circle r="1.3" fill="#a2b6e3"/></g><g transform="translate(500.3 260.0) rotate(68) scale(1.06)"><use href="#fw" fill="#40a8a0" stroke="#f4efe0" stroke-opacity="0.5" stroke-width="0.55"/><use href="#fw" fill="url(#rg)"/><circle r="1.3" fill="#9fd3cf"/></g><g transform="translate(376.9 215.6) rotate(59) scale(0.90)"><use href="#fw" fill="#f0a080" stroke="#f4efe0" stroke-opacity="0.5" stroke-width="0.55"/><use href="#fw" fill="url(#rg)"/><circle r="1.3" fill="#f7cfbf"/></g><g transform="translate(520.1 203.7) rotate(31) scale(1.04)"><use href="#fw" fill="#f5c830" stroke="#f4efe0" stroke-opacity="0.5" stroke-width="0.55"/><use href="#fw" fill="url(#rg)"/><circle r="1.3" fill="#fae397"/></g><g transform="translate(293.3 346.1) rotate(58) scale(1.05)"><use href="#fw" fill="#50b050" stroke="#f4efe0" stroke-opacity="0.5" stroke-width="0.55"/><use href="#fw" fill="url(#rg)"/><circle r="1.3" fill="#a7d7a7"/></g><g transform="translate(466.8 213.2) rotate(64) scale(1.02)"><use href="#fw" fill="#f0a0c0" stroke="#f4efe0" stroke-opacity="0.5" stroke-width="0.55"/><use href="#fw" fill="url(#rg)"/><circle r="1.3" fill="#f7cfdf"/></g><g transform="translate(514.3 196.2) rotate(72) scale(1.03)"><use href="#fw" fill="#f5c830" stroke="#f4efe0" stroke-opacity="0.5" stroke-width="0.55"/><use href="#fw" fill="url(#rg)"/><circle r="1.3" fill="#fae397"/></g><g transform="translate(512.8 279.4) rotate(28) scale(0.92)"><use href="#fw" fill="#c8aa8c" stroke="#f4efe0" stroke-opacity="0.5" stroke-width="0.55"/><use href="#fw" fill="url(#rg)"/><circle r="1.3" fill="#e3d4c5"/></g><g transform="translate(436.5 313.8) rotate(64) scale(0.90)"><use href="#fw" fill="#e03c30" stroke="#f4efe0" stroke-opacity="0.5" stroke-width="0.55"/><use href="#fw" fill="url(#rg)"/><circle r="1.3" fill="#ef9d97"/></g><g transform="translate(334.5 333.8) rotate(52) scale(0.93)"><use href="#fw" fill="#d030a0" stroke="#f4efe0" stroke-opacity="0.5" stroke-width="0.55"/><use href="#fw" fill="url(#rg)"/><circle r="1.3" fill="#e797cf"/></g><g transform="translate(401.0 301.7) rotate(18) scale(0.93)"><use href="#fw" fill="#b0a0e0" stroke="#f4efe0" stroke-opacity="0.5" stroke-width="0.55"/><use href="#fw" fill="url(#rg)"/><circle r="1.3" fill="#d7cfef"/></g><g transform="translate(570.9 398.5) rotate(48) scale(0.91)"><use href="#fw" fill="#f0e890" stroke="#f4efe0" stroke-opacity="0.5" stroke-width="0.55"/><use href="#fw" fill="url(#rg)"/><circle r="1.3" fill="#f7f3c7"/></g><g transform="translate(464.6 345.3) rotate(39) scale(0.96)"><use href="#fw" fill="#466ec8" stroke="#f4efe0" stroke-opacity="0.5" stroke-width="0.55"/><use href="#fw" fill="url(#rg)"/><circle r="1.3" fill="#a2b6e3"/></g><g transform="translate(565.4 235.6) rotate(14) scale(0.99)"><use href="#fw" fill="#3090e0" stroke="#f4efe0" stroke-opacity="0.5" stroke-width="0.55"/><use href="#fw" fill="url(#rg)"/><circle r="1.3" fill="#97c7ef"/></g><g transform="translate(496.9 185.7) rotate(52) scale(1.04)"><use href="#fw" fill="#f0a080" stroke="#f4efe0" stroke-opacity="0.5" stroke-width="0.55"/><use href="#fw" fill="url(#rg)"/><circle r="1.3" fill="#f7cfbf"/></g><g transform="translate(619.5 246.4) rotate(68) scale(1.03)"><use href="#fw" fill="#e83c8c" stroke="#f4efe0" stroke-opacity="0.5" stroke-width="0.55"/><use href="#fw" fill="url(#rg)"/><circle r="1.3" fill="#f39dc5"/></g><g transform="translate(320.7 225.7) rotate(35) scale(0.99)"><use href="#fw" fill="#466ec8" stroke="#f4efe0" stroke-opacity="0.5" stroke-width="0.55"/><use href="#fw" fill="url(#rg)"/><circle r="1.3" fill="#a2b6e3"/></g><g transform="translate(531.3 207.0) rotate(19) scale(1.01)"><use href="#fw" fill="#f0a0c0" stroke="#f4efe0" stroke-opacity="0.5" stroke-width="0.55"/><use href="#fw" fill="url(#rg)"/><circle r="1.3" fill="#f7cfdf"/></g><g transform="translate(563.3 213.3) rotate(6) scale(1.01)"><use href="#fw" fill="#e83c8c" stroke="#f4efe0" stroke-opacity="0.5" stroke-width="0.55"/><use href="#fw" fill="url(#rg)"/><circle r="1.3" fill="#f39dc5"/></g><g transform="translate(529.2 278.2) rotate(27) scale(1.06)"><use href="#fw" fill="#e03c30" stroke="#f4efe0" stroke-opacity="0.5" stroke-width="0.55"/><use href="#fw" fill="url(#rg)"/><circle r="1.3" fill="#ef9d97"/></g><g transform="translate(551.3 238.8) rotate(6) scale(1.04)"><use href="#fw" fill="#3090e0" stroke="#f4efe0" stroke-opacity="0.5" stroke-width="0.55"/><use href="#fw" fill="url(#rg)"/><circle r="1.3" fill="#97c7ef"/></g><g transform="translate(289.3 388.5) rotate(72) scale(1.01)"><use href="#fw" fill="#d030a0" stroke="#f4efe0" stroke-opacity="0.5" stroke-width="0.55"/><use href="#fw" fill="url(#rg)"/><circle r="1.3" fill="#e797cf"/></g><g transform="translate(453.4 237.7) rotate(30) scale(1.06)"><use href="#fw" fill="#b0a0e0" stroke="#f4efe0" stroke-opacity="0.5" stroke-width="0.55"/><use href="#fw" fill="url(#rg)"/><circle r="1.3" fill="#d7cfef"/></g><g transform="translate(515.1 365.9) rotate(14) scale(0.99)"><use href="#fw" fill="#f0a080" stroke="#f4efe0" stroke-opacity="0.5" stroke-width="0.55"/><use href="#fw" fill="url(#rg)"/><circle r="1.3" fill="#f7cfbf"/></g><g transform="translate(482.2 421.5) rotate(39) scale(0.93)"><use href="#fw" fill="#a0b8d0" stroke="#f4efe0" stroke-opacity="0.5" stroke-width="0.55"/><use href="#fw" fill="url(#rg)"/><circle r="1.3" fill="#cfdbe7"/></g><g transform="translate(516.0 234.8) rotate(60) scale(1.02)"><use href="#fw" fill="#60b8e8" stroke="#f4efe0" stroke-opacity="0.5" stroke-width="0.55"/><use href="#fw" fill="url(#rg)"/><circle r="1.3" fill="#afdbf3"/></g><g transform="translate(568.6 354.2) rotate(34) scale(0.99)"><use href="#fw" fill="#d030a0" stroke="#f4efe0" stroke-opacity="0.5" stroke-width="0.55"/><use href="#fw" fill="url(#rg)"/><circle r="1.3" fill="#e797cf"/></g><g transform="translate(332.6 223.9) rotate(29) scale(0.99)"><use href="#fw" fill="#3090e0" stroke="#f4efe0" stroke-opacity="0.5" stroke-width="0.55"/><use href="#fw" fill="url(#rg)"/><circle r="1.3" fill="#97c7ef"/></g><g transform="translate(578.2 409.9) rotate(17) scale(0.96)"><use href="#fw" fill="#a0b8d0" stroke="#f4efe0" stroke-opacity="0.5" stroke-width="0.55"/><use href="#fw" fill="url(#rg)"/><circle r="1.3" fill="#cfdbe7"/></g><g transform="translate(457.0 418.1) rotate(5) scale(1.07)"><use href="#fw" fill="#f0e890" stroke="#f4efe0" stroke-opacity="0.5" stroke-width="0.55"/><use href="#fw" fill="url(#rg)"/><circle r="1.3" fill="#f7f3c7"/></g><g transform="translate(584.6 314.5) rotate(70) scale(1.00)"><use href="#fw" fill="#f0a080" stroke="#f4efe0" stroke-opacity="0.5" stroke-width="0.55"/><use href="#fw" fill="url(#rg)"/><circle r="1.3" fill="#f7cfbf"/></g><g transform="translate(559.2 185.6) rotate(69) scale(1.02)"><use href="#fw" fill="#60b8e8" stroke="#f4efe0" stroke-opacity="0.5" stroke-width="0.55"/><use href="#fw" fill="url(#rg)"/><circle r="1.3" fill="#afdbf3"/></g><g transform="translate(424.1 204.3) rotate(60) scale(0.99)"><use href="#fw" fill="#b08040" stroke="#f4efe0" stroke-opacity="0.5" stroke-width="0.55"/><use href="#fw" fill="url(#rg)"/><circle r="1.3" fill="#d7bf9f"/></g><g transform="translate(515.2 323.2) rotate(23) scale(1.01)"><use href="#fw" fill="#b0a0e0" stroke="#f4efe0" stroke-opacity="0.5" stroke-width="0.55"/><use href="#fw" fill="url(#rg)"/><circle r="1.3" fill="#d7cfef"/></g><g transform="translate(557.4 205.1) rotate(45) scale(1.06)"><use href="#fw" fill="#f0a080" stroke="#f4efe0" stroke-opacity="0.5" stroke-width="0.55"/><use href="#fw" fill="url(#rg)"/><circle r="1.3" fill="#f7cfbf"/></g><g transform="translate(463.6 258.6) rotate(26) scale(0.92)"><use href="#fw" fill="#f5c830" stroke="#f4efe0" stroke-opacity="0.5" stroke-width="0.55"/><use href="#fw" fill="url(#rg)"/><circle r="1.3" fill="#fae397"/></g><g transform="translate(334.7 310.2) rotate(72) scale(0.97)"><use href="#fw" fill="#50b050" stroke="#f4efe0" stroke-opacity="0.5" stroke-width="0.55"/><use href="#fw" fill="url(#rg)"/><circle r="1.3" fill="#a7d7a7"/></g><g transform="translate(528.3 364.5) rotate(52) scale(0.95)"><use href="#fw" fill="#d030a0" stroke="#f4efe0" stroke-opacity="0.5" stroke-width="0.55"/><use href="#fw" fill="url(#rg)"/><circle r="1.3" fill="#e797cf"/></g><g transform="translate(402.1 344.1) rotate(4) scale(1.01)"><use href="#fw" fill="#f09040" stroke="#f4efe0" stroke-opacity="0.5" stroke-width="0.55"/><use href="#fw" fill="url(#rg)"/><circle r="1.3" fill="#f7c79f"/></g><g transform="translate(593.3 378.6) rotate(60) scale(0.90)"><use href="#fw" fill="#60b8e8" stroke="#f4efe0" stroke-opacity="0.5" stroke-width="0.55"/><use href="#fw" fill="url(#rg)"/><circle r="1.3" fill="#afdbf3"/></g><g transform="translate(594.1 398.2) rotate(64) scale(0.92)"><use href="#fw" fill="#e03c30" stroke="#f4efe0" stroke-opacity="0.5" stroke-width="0.55"/><use href="#fw" fill="url(#rg)"/><circle r="1.3" fill="#ef9d97"/></g><g transform="translate(405.1 260.4) rotate(60) scale(1.02)"><use href="#fw" fill="#b08040" stroke="#f4efe0" stroke-opacity="0.5" stroke-width="0.55"/><use href="#fw" fill="url(#rg)"/><circle r="1.3" fill="#d7bf9f"/></g><g transform="translate(407.3 399.6) rotate(28) scale(1.01)"><use href="#fw" fill="#90d080" stroke="#f4efe0" stroke-opacity="0.5" stroke-width="0.55"/><use href="#fw" fill="url(#rg)"/><circle r="1.3" fill="#c7e7bf"/></g><g transform="translate(503.8 193.2) rotate(29) scale(1.04)"><use href="#fw" fill="#a0b8d0" stroke="#f4efe0" stroke-opacity="0.5" stroke-width="0.55"/><use href="#fw" fill="url(#rg)"/><circle r="1.3" fill="#cfdbe7"/></g><g transform="translate(379.3 343.9) rotate(3) scale(0.99)"><use href="#fw" fill="#c8aa8c" stroke="#f4efe0" stroke-opacity="0.5" stroke-width="0.55"/><use href="#fw" fill="url(#rg)"/><circle r="1.3" fill="#e3d4c5"/></g><g transform="translate(524.8 194.5) rotate(11) scale(0.98)"><use href="#fw" fill="#40a8a0" stroke="#f4efe0" stroke-opacity="0.5" stroke-width="0.55"/><use href="#fw" fill="url(#rg)"/><circle r="1.3" fill="#9fd3cf"/></g><g transform="translate(371.2 269.6) rotate(42) scale(0.99)"><use href="#fw" fill="#3090e0" stroke="#f4efe0" stroke-opacity="0.5" stroke-width="0.55"/><use href="#fw" fill="url(#rg)"/><circle r="1.3" fill="#97c7ef"/></g><g transform="translate(564.5 196.2) rotate(14) scale(0.98)"><use href="#fw" fill="#e6786e" stroke="#f4efe0" stroke-opacity="0.5" stroke-width="0.55"/><use href="#fw" fill="url(#rg)"/><circle r="1.3" fill="#f2bbb6"/></g><g transform="translate(331.1 280.5) rotate(62) scale(1.02)"><use href="#fw" fill="#466ec8" stroke="#f4efe0" stroke-opacity="0.5" stroke-width="0.55"/><use href="#fw" fill="url(#rg)"/><circle r="1.3" fill="#a2b6e3"/></g><g transform="translate(379.1 411.9) rotate(62) scale(0.94)"><use href="#fw" fill="#f0e890" stroke="#f4efe0" stroke-opacity="0.5" stroke-width="0.55"/><use href="#fw" fill="url(#rg)"/><circle r="1.3" fill="#f7f3c7"/></g><g transform="translate(522.6 311.8) rotate(60) scale(1.01)"><use href="#fw" fill="#e03c30" stroke="#f4efe0" stroke-opacity="0.5" stroke-width="0.55"/><use href="#fw" fill="url(#rg)"/><circle r="1.3" fill="#ef9d97"/></g><g transform="translate(473.3 355.4) rotate(59) scale(0.93)"><use href="#fw" fill="#f0a080" stroke="#f4efe0" stroke-opacity="0.5" stroke-width="0.55"/><use href="#fw" fill="url(#rg)"/><circle r="1.3" fill="#f7cfbf"/></g><g transform="translate(572.0 376.5) rotate(46) scale(0.96)"><use href="#fw" fill="#f09040" stroke="#f4efe0" stroke-opacity="0.5" stroke-width="0.55"/><use href="#fw" fill="url(#rg)"/><circle r="1.3" fill="#f7c79f"/></g><g transform="translate(442.2 278.3) rotate(31) scale(1.04)"><use href="#fw" fill="#f5c830" stroke="#f4efe0" stroke-opacity="0.5" stroke-width="0.55"/><use href="#fw" fill="url(#rg)"/><circle r="1.3" fill="#fae397"/></g><g transform="translate(554.4 215.5) rotate(66) scale(0.97)"><use href="#fw" fill="#b0a0e0" stroke="#f4efe0" stroke-opacity="0.5" stroke-width="0.55"/><use href="#fw" fill="url(#rg)"/><circle r="1.3" fill="#d7cfef"/></g><g transform="translate(351.2 236.2) rotate(46) scale(0.98)"><use href="#fw" fill="#f0e890" stroke="#f4efe0" stroke-opacity="0.5" stroke-width="0.55"/><use href="#fw" fill="url(#rg)"/><circle r="1.3" fill="#f7f3c7"/></g><g transform="translate(631.7 375.8) rotate(17) scale(1.04)"><use href="#fw" fill="#f0e890" stroke="#f4efe0" stroke-opacity="0.5" stroke-width="0.55"/><use href="#fw" fill="url(#rg)"/><circle r="1.3" fill="#f7f3c7"/></g><g transform="translate(545.2 312.0) rotate(58) scale(1.04)"><use href="#fw" fill="#e83c8c" stroke="#f4efe0" stroke-opacity="0.5" stroke-width="0.55"/><use href="#fw" fill="url(#rg)"/><circle r="1.3" fill="#f39dc5"/></g><g transform="translate(614.8 301.7) rotate(48) scale(1.03)"><use href="#fw" fill="#f09040" stroke="#f4efe0" stroke-opacity="0.5" stroke-width="0.55"/><use href="#fw" fill="url(#rg)"/><circle r="1.3" fill="#f7c79f"/></g><g transform="translate(613.8 213.7) rotate(22) scale(1.06)"><use href="#fw" fill="#e83c8c" stroke="#f4efe0" stroke-opacity="0.5" stroke-width="0.55"/><use href="#fw" fill="url(#rg)"/><circle r="1.3" fill="#f39dc5"/></g><g transform="translate(585.0 271.2) rotate(54) scale(0.94)"><use href="#fw" fill="#f5c830" stroke="#f4efe0" stroke-opacity="0.5" stroke-width="0.55"/><use href="#fw" fill="url(#rg)"/><circle r="1.3" fill="#fae397"/></g><g transform="translate(618.6 204.7) rotate(47) scale(1.06)"><use href="#fw" fill="#f09040" stroke="#f4efe0" stroke-opacity="0.5" stroke-width="0.55"/><use href="#fw" fill="url(#rg)"/><circle r="1.3" fill="#f7c79f"/></g><g transform="translate(290.3 323.9) rotate(60) scale(1.06)"><use href="#fw" fill="#466ec8" stroke="#f4efe0" stroke-opacity="0.5" stroke-width="0.55"/><use href="#fw" fill="url(#rg)"/><circle r="1.3" fill="#a2b6e3"/></g><g transform="translate(615.3 281.9) rotate(11) scale(1.01)"><use href="#fw" fill="#a0b8d0" stroke="#f4efe0" stroke-opacity="0.5" stroke-width="0.55"/><use href="#fw" fill="url(#rg)"/><circle r="1.3" fill="#cfdbe7"/></g><g transform="translate(557.1 310.2) rotate(11) scale(0.95)"><use href="#fw" fill="#3090e0" stroke="#f4efe0" stroke-opacity="0.5" stroke-width="0.55"/><use href="#fw" fill="url(#rg)"/><circle r="1.3" fill="#97c7ef"/></g><g transform="translate(601.0 408.3) rotate(8) scale(1.04)"><use href="#fw" fill="#e03c30" stroke="#f4efe0" stroke-opacity="0.5" stroke-width="0.55"/><use href="#fw" fill="url(#rg)"/><circle r="1.3" fill="#ef9d97"/></g><g transform="translate(303.5 385.9) rotate(36) scale(0.94)"><use href="#fw" fill="#3090e0" stroke="#f4efe0" stroke-opacity="0.5" stroke-width="0.55"/><use href="#fw" fill="url(#rg)"/><circle r="1.3" fill="#97c7ef"/></g><g transform="translate(452.5 369.1) rotate(44) scale(0.99)"><use href="#fw" fill="#60b8e8" stroke="#f4efe0" stroke-opacity="0.5" stroke-width="0.55"/><use href="#fw" fill="url(#rg)"/><circle r="1.3" fill="#afdbf3"/></g><g transform="translate(484.5 292.7) rotate(53) scale(0.99)"><use href="#fw" fill="#3090e0" stroke="#f4efe0" stroke-opacity="0.5" stroke-width="0.55"/><use href="#fw" fill="url(#rg)"/><circle r="1.3" fill="#97c7ef"/></g><g transform="translate(377.2 193.3) rotate(16) scale(0.93)"><use href="#fw" fill="#f0a0c0" stroke="#f4efe0" stroke-opacity="0.5" stroke-width="0.55"/><use href="#fw" fill="url(#rg)"/><circle r="1.3" fill="#f7cfdf"/></g><g transform="translate(445.9 202.7) rotate(40) scale(0.96)"><use href="#fw" fill="#f0e890" stroke="#f4efe0" stroke-opacity="0.5" stroke-width="0.55"/><use href="#fw" fill="url(#rg)"/><circle r="1.3" fill="#f7f3c7"/></g><g transform="translate(509.6 353.4) rotate(50) scale(0.90)"><use href="#fw" fill="#a0b8d0" stroke="#f4efe0" stroke-opacity="0.5" stroke-width="0.55"/><use href="#fw" fill="url(#rg)"/><circle r="1.3" fill="#cfdbe7"/></g><g transform="translate(360.8 206.7) rotate(66) scale(1.06)"><use href="#fw" fill="#f0a080" stroke="#f4efe0" stroke-opacity="0.5" stroke-width="0.55"/><use href="#fw" fill="url(#rg)"/><circle r="1.3" fill="#f7cfbf"/></g><g transform="translate(388.9 301.5) rotate(36) scale(1.04)"><use href="#fw" fill="#b0a0e0" stroke="#f4efe0" stroke-opacity="0.5" stroke-width="0.55"/><use href="#fw" fill="url(#rg)"/><circle r="1.3" fill="#d7cfef"/></g><g transform="translate(525.2 256.9) rotate(69) scale(1.05)"><use href="#fw" fill="#f0a080" stroke="#f4efe0" stroke-opacity="0.5" stroke-width="0.55"/><use href="#fw" fill="url(#rg)"/><circle r="1.3" fill="#f7cfbf"/></g><g transform="translate(538.5 366.1) rotate(45) scale(1.06)"><use href="#fw" fill="#f0a0c0" stroke="#f4efe0" stroke-opacity="0.5" stroke-width="0.55"/><use href="#fw" fill="url(#rg)"/><circle r="1.3" fill="#f7cfdf"/></g><g transform="translate(291.9 194.2) rotate(2) scale(1.07)"><use href="#fw" fill="#90d080" stroke="#f4efe0" stroke-opacity="0.5" stroke-width="0.55"/><use href="#fw" fill="url(#rg)"/><circle r="1.3" fill="#c7e7bf"/></g><g transform="translate(541.1 325.5) rotate(52) scale(1.06)"><use href="#fw" fill="#3090e0" stroke="#f4efe0" stroke-opacity="0.5" stroke-width="0.55"/><use href="#fw" fill="url(#rg)"/><circle r="1.3" fill="#97c7ef"/></g><g transform="translate(503.0 216.2) rotate(19) scale(1.02)"><use href="#fw" fill="#b0a0e0" stroke="#f4efe0" stroke-opacity="0.5" stroke-width="0.55"/><use href="#fw" fill="url(#rg)"/><circle r="1.3" fill="#d7cfef"/></g><g transform="translate(586.9 257.1) rotate(20) scale(0.93)"><use href="#fw" fill="#c8aa8c" stroke="#f4efe0" stroke-opacity="0.5" stroke-width="0.55"/><use href="#fw" fill="url(#rg)"/><circle r="1.3" fill="#e3d4c5"/></g><g transform="translate(641.0 410.4) rotate(1) scale(0.94)"><use href="#fw" fill="#f0a080" stroke="#f4efe0" stroke-opacity="0.5" stroke-width="0.55"/><use href="#fw" fill="url(#rg)"/><circle r="1.3" fill="#f7cfbf"/></g><g transform="translate(341.1 256.5) rotate(6) scale(1.06)"><use href="#fw" fill="#60b8e8" stroke="#f4efe0" stroke-opacity="0.5" stroke-width="0.55"/><use href="#fw" fill="url(#rg)"/><circle r="1.3" fill="#afdbf3"/></g><g transform="translate(485.7 399.5) rotate(48) scale(1.01)"><use href="#fw" fill="#a0b8d0" stroke="#f4efe0" stroke-opacity="0.5" stroke-width="0.55"/><use href="#fw" fill="url(#rg)"/><circle r="1.3" fill="#cfdbe7"/></g><g transform="translate(571.3 290.9) rotate(59) scale(1.00)"><use href="#fw" fill="#e83c8c" stroke="#f4efe0" stroke-opacity="0.5" stroke-width="0.55"/><use href="#fw" fill="url(#rg)"/><circle r="1.3" fill="#f39dc5"/></g><g transform="translate(457.3 292.5) rotate(25) scale(1.06)"><use href="#fw" fill="#b0a0e0" stroke="#f4efe0" stroke-opacity="0.5" stroke-width="0.55"/><use href="#fw" fill="url(#rg)"/><circle r="1.3" fill="#d7cfef"/></g><g transform="translate(541.3 214.2) rotate(53) scale(1.03)"><use href="#fw" fill="#e83c8c" stroke="#f4efe0" stroke-opacity="0.5" stroke-width="0.55"/><use href="#fw" fill="url(#rg)"/><circle r="1.3" fill="#f39dc5"/></g><g transform="translate(620.6 335.5) rotate(1) scale(0.93)"><use href="#fw" fill="#d030a0" stroke="#f4efe0" stroke-opacity="0.5" stroke-width="0.55"/><use href="#fw" fill="url(#rg)"/><circle r="1.3" fill="#e797cf"/></g><g transform="translate(544.2 332.3) rotate(69) scale(0.94)"><use href="#fw" fill="#d030a0" stroke="#f4efe0" stroke-opacity="0.5" stroke-width="0.55"/><use href="#fw" fill="url(#rg)"/><circle r="1.3" fill="#e797cf"/></g><g transform="translate(343.4 235.6) rotate(43) scale(0.95)"><use href="#fw" fill="#f0a0c0" stroke="#f4efe0" stroke-opacity="0.5" stroke-width="0.55"/><use href="#fw" fill="url(#rg)"/><circle r="1.3" fill="#f7cfdf"/></g><g transform="translate(553.7 259.3) rotate(65) scale(0.94)"><use href="#fw" fill="#f0e890" stroke="#f4efe0" stroke-opacity="0.5" stroke-width="0.55"/><use href="#fw" fill="url(#rg)"/><circle r="1.3" fill="#f7f3c7"/></g><g transform="translate(359.4 379.5) rotate(50) scale(1.02)"><use href="#fw" fill="#a0b8d0" stroke="#f4efe0" stroke-opacity="0.5" stroke-width="0.55"/><use href="#fw" fill="url(#rg)"/><circle r="1.3" fill="#cfdbe7"/></g><g transform="translate(600.2 215.5) rotate(33) scale(1.02)"><use href="#fw" fill="#f0a080" stroke="#f4efe0" stroke-opacity="0.5" stroke-width="0.55"/><use href="#fw" fill="url(#rg)"/><circle r="1.3" fill="#f7cfbf"/></g><g transform="translate(565.3 367.4) rotate(2) scale(0.96)"><use href="#fw" fill="#3090e0" stroke="#f4efe0" stroke-opacity="0.5" stroke-width="0.55"/><use href="#fw" fill="url(#rg)"/><circle r="1.3" fill="#97c7ef"/></g><g transform="translate(385.9 397.8) rotate(25) scale(0.98)"><use href="#fw" fill="#e03c30" stroke="#f4efe0" stroke-opacity="0.5" stroke-width="0.55"/><use href="#fw" fill="url(#rg)"/><circle r="1.3" fill="#ef9d97"/></g><g transform="translate(538.9 239.4) rotate(15) scale(0.92)"><use href="#fw" fill="#f0a0c0" stroke="#f4efe0" stroke-opacity="0.5" stroke-width="0.55"/><use href="#fw" fill="url(#rg)"/><circle r="1.3" fill="#f7cfdf"/></g><g transform="translate(641.1 279.1) rotate(12) scale(1.07)"><use href="#fw" fill="#f09040" stroke="#f4efe0" stroke-opacity="0.5" stroke-width="0.55"/><use href="#fw" fill="url(#rg)"/><circle r="1.3" fill="#f7c79f"/></g><g transform="translate(615.2 407.6) rotate(49) scale(1.01)"><use href="#fw" fill="#60b8e8" stroke="#f4efe0" stroke-opacity="0.5" stroke-width="0.55"/><use href="#fw" fill="url(#rg)"/><circle r="1.3" fill="#afdbf3"/></g><g transform="translate(355.9 194.1) rotate(66) scale(0.93)"><use href="#fw" fill="#8050c0" stroke="#f4efe0" stroke-opacity="0.5" stroke-width="0.55"/><use href="#fw" fill="url(#rg)"/><circle r="1.3" fill="#bfa7df"/></g><g transform="translate(531.9 418.3) rotate(19) scale(1.04)"><use href="#fw" fill="#60b8e8" stroke="#f4efe0" stroke-opacity="0.5" stroke-width="0.55"/><use href="#fw" fill="url(#rg)"/><circle r="1.3" fill="#afdbf3"/></g><g transform="translate(347.8 182.7) rotate(40) scale(1.07)"><use href="#fw" fill="#e03c30" stroke="#f4efe0" stroke-opacity="0.5" stroke-width="0.55"/><use href="#fw" fill="url(#rg)"/><circle r="1.3" fill="#ef9d97"/></g><g transform="translate(320.8 356.2) rotate(59) scale(1.00)"><use href="#fw" fill="#f09040" stroke="#f4efe0" stroke-opacity="0.5" stroke-width="0.55"/><use href="#fw" fill="url(#rg)"/><circle r="1.3" fill="#f7c79f"/></g><g transform="translate(367.1 407.3) rotate(63) scale(0.95)"><use href="#fw" fill="#40a8a0" stroke="#f4efe0" stroke-opacity="0.5" stroke-width="0.55"/><use href="#fw" fill="url(#rg)"/><circle r="1.3" fill="#9fd3cf"/></g><g transform="translate(355.0 347.2) rotate(71) scale(1.01)"><use href="#fw" fill="#f0a0c0" stroke="#f4efe0" stroke-opacity="0.5" stroke-width="0.55"/><use href="#fw" fill="url(#rg)"/><circle r="1.3" fill="#f7cfdf"/></g><g transform="translate(301.8 409.7) rotate(65) scale(1.06)"><use href="#fw" fill="#f0a080" stroke="#f4efe0" stroke-opacity="0.5" stroke-width="0.55"/><use href="#fw" fill="url(#rg)"/><circle r="1.3" fill="#f7cfbf"/></g><g transform="translate(610.3 422.2) rotate(61) scale(1.02)"><use href="#fw" fill="#f09040" stroke="#f4efe0" stroke-opacity="0.5" stroke-width="0.55"/><use href="#fw" fill="url(#rg)"/><circle r="1.3" fill="#f7c79f"/></g><g transform="translate(457.3 314.5) rotate(23) scale(0.99)"><use href="#fw" fill="#e03c30" stroke="#f4efe0" stroke-opacity="0.5" stroke-width="0.55"/><use href="#fw" fill="url(#rg)"/><circle r="1.3" fill="#ef9d97"/></g><g transform="translate(308.6 270.7) rotate(37) scale(0.91)"><use href="#fw" fill="#d030a0" stroke="#f4efe0" stroke-opacity="0.5" stroke-width="0.55"/><use href="#fw" fill="url(#rg)"/><circle r="1.3" fill="#e797cf"/></g><g transform="translate(330.3 365.3) rotate(27) scale(0.93)"><use href="#fw" fill="#60b8e8" stroke="#f4efe0" stroke-opacity="0.5" stroke-width="0.55"/><use href="#fw" fill="url(#rg)"/><circle r="1.3" fill="#afdbf3"/></g><g transform="translate(296.5 247.8) rotate(28) scale(1.07)"><use href="#fw" fill="#f0a0c0" stroke="#f4efe0" stroke-opacity="0.5" stroke-width="0.55"/><use href="#fw" fill="url(#rg)"/><circle r="1.3" fill="#f7cfdf"/></g><g transform="translate(566.6 388.8) rotate(7) scale(1.07)"><use href="#fw" fill="#b0a0e0" stroke="#f4efe0" stroke-opacity="0.5" stroke-width="0.55"/><use href="#fw" fill="url(#rg)"/><circle r="1.3" fill="#d7cfef"/></g><g transform="translate(457.7 249.5) rotate(7) scale(1.01)"><use href="#fw" fill="#e03c30" stroke="#f4efe0" stroke-opacity="0.5" stroke-width="0.55"/><use href="#fw" fill="url(#rg)"/><circle r="1.3" fill="#ef9d97"/></g><g transform="translate(583.6 379.6) rotate(47) scale(1.01)"><use href="#fw" fill="#f0a080" stroke="#f4efe0" stroke-opacity="0.5" stroke-width="0.55"/><use href="#fw" fill="url(#rg)"/><circle r="1.3" fill="#f7cfbf"/></g><g transform="translate(558.7 354.0) rotate(8) scale(0.99)"><use href="#fw" fill="#b0a0e0" stroke="#f4efe0" stroke-opacity="0.5" stroke-width="0.55"/><use href="#fw" fill="url(#rg)"/><circle r="1.3" fill="#d7cfef"/></g><g transform="translate(582.4 420.1) rotate(0) scale(0.93)"><use href="#fw" fill="#40a8a0" stroke="#f4efe0" stroke-opacity="0.5" stroke-width="0.55"/><use href="#fw" fill="url(#rg)"/><circle r="1.3" fill="#9fd3cf"/></g><g transform="translate(518.9 270.3) rotate(19) scale(0.93)"><use href="#fw" fill="#f09040" stroke="#f4efe0" stroke-opacity="0.5" stroke-width="0.55"/><use href="#fw" fill="url(#rg)"/><circle r="1.3" fill="#f7c79f"/></g><g transform="translate(503.8 300.4) rotate(18) scale(0.98)"><use href="#fw" fill="#3090e0" stroke="#f4efe0" stroke-opacity="0.5" stroke-width="0.55"/><use href="#fw" fill="url(#rg)"/><circle r="1.3" fill="#97c7ef"/></g><g transform="translate(300.0 375.5) rotate(21) scale(1.03)"><use href="#fw" fill="#40a8a0" stroke="#f4efe0" stroke-opacity="0.5" stroke-width="0.55"/><use href="#fw" fill="url(#rg)"/><circle r="1.3" fill="#9fd3cf"/></g><g transform="translate(509.1 249.3) rotate(8) scale(1.02)"><use href="#fw" fill="#e03c30" stroke="#f4efe0" stroke-opacity="0.5" stroke-width="0.55"/><use href="#fw" fill="url(#rg)"/><circle r="1.3" fill="#ef9d97"/></g><g transform="translate(467.7 303.4) rotate(35) scale(0.92)"><use href="#fw" fill="#b0a0e0" stroke="#f4efe0" stroke-opacity="0.5" stroke-width="0.55"/><use href="#fw" fill="url(#rg)"/><circle r="1.3" fill="#d7cfef"/></g><g transform="translate(452.9 279.2) rotate(0) scale(1.03)"><use href="#fw" fill="#e03c30" stroke="#f4efe0" stroke-opacity="0.5" stroke-width="0.55"/><use href="#fw" fill="url(#rg)"/><circle r="1.3" fill="#ef9d97"/></g><g transform="translate(528.0 213.4) rotate(58) scale(1.03)"><use href="#fw" fill="#f0a080" stroke="#f4efe0" stroke-opacity="0.5" stroke-width="0.55"/><use href="#fw" fill="url(#rg)"/><circle r="1.3" fill="#f7cfbf"/></g><g transform="translate(525.5 342.9) rotate(47) scale(1.05)"><use href="#fw" fill="#3090e0" stroke="#f4efe0" stroke-opacity="0.5" stroke-width="0.55"/><use href="#fw" fill="url(#rg)"/><circle r="1.3" fill="#97c7ef"/></g><g transform="translate(310.9 419.5) rotate(71) scale(1.07)"><use href="#fw" fill="#e83c8c" stroke="#f4efe0" stroke-opacity="0.5" stroke-width="0.55"/><use href="#fw" fill="url(#rg)"/><circle r="1.3" fill="#f39dc5"/></g><g transform="translate(490.7 217.9) rotate(40) scale(0.97)"><use href="#fw" fill="#3090e0" stroke="#f4efe0" stroke-opacity="0.5" stroke-width="0.55"/><use href="#fw" fill="url(#rg)"/><circle r="1.3" fill="#97c7ef"/></g><g transform="translate(540.9 407.7) rotate(9) scale(0.90)"><use href="#fw" fill="#f5c830" stroke="#f4efe0" stroke-opacity="0.5" stroke-width="0.55"/><use href="#fw" fill="url(#rg)"/><circle r="1.3" fill="#fae397"/></g><g transform="translate(488.7 387.9) rotate(13) scale(0.95)"><use href="#fw" fill="#e83c8c" stroke="#f4efe0" stroke-opacity="0.5" stroke-width="0.55"/><use href="#fw" fill="url(#rg)"/><circle r="1.3" fill="#f39dc5"/></g><g transform="translate(478.1 282.6) rotate(68) scale(0.99)"><use href="#fw" fill="#50b050" stroke="#f4efe0" stroke-opacity="0.5" stroke-width="0.55"/><use href="#fw" fill="url(#rg)"/><circle r="1.3" fill="#a7d7a7"/></g><g transform="translate(451.4 409.9) rotate(59) scale(1.05)"><use href="#fw" fill="#60b8e8" stroke="#f4efe0" stroke-opacity="0.5" stroke-width="0.55"/><use href="#fw" fill="url(#rg)"/><circle r="1.3" fill="#afdbf3"/></g><g transform="translate(541.7 257.1) rotate(16) scale(1.04)"><use href="#fw" fill="#c8aa8c" stroke="#f4efe0" stroke-opacity="0.5" stroke-width="0.55"/><use href="#fw" fill="url(#rg)"/><circle r="1.3" fill="#e3d4c5"/></g><g transform="translate(346.4 336.6) rotate(37) scale(0.90)"><use href="#fw" fill="#f0a0c0" stroke="#f4efe0" stroke-opacity="0.5" stroke-width="0.55"/><use href="#fw" fill="url(#rg)"/><circle r="1.3" fill="#f7cfdf"/></g><g transform="translate(544.3 245.5) rotate(27) scale(0.96)"><use href="#fw" fill="#b08040" stroke="#f4efe0" stroke-opacity="0.5" stroke-width="0.55"/><use href="#fw" fill="url(#rg)"/><circle r="1.3" fill="#d7bf9f"/></g><g transform="translate(388.8 343.1) rotate(68) scale(0.90)"><use href="#fw" fill="#e83c8c" stroke="#f4efe0" stroke-opacity="0.5" stroke-width="0.55"/><use href="#fw" fill="url(#rg)"/><circle r="1.3" fill="#f39dc5"/></g><g transform="translate(435.8 227.0) rotate(40) scale(1.06)"><use href="#fw" fill="#8050c0" stroke="#f4efe0" stroke-opacity="0.5" stroke-width="0.55"/><use href="#fw" fill="url(#rg)"/><circle r="1.3" fill="#bfa7df"/></g><g transform="translate(416.5 235.6) rotate(61) scale(1.04)"><use href="#fw" fill="#a0b8d0" stroke="#f4efe0" stroke-opacity="0.5" stroke-width="0.55"/><use href="#fw" fill="url(#rg)"/><circle r="1.3" fill="#cfdbe7"/></g><g transform="translate(417.0 412.2) rotate(63) scale(0.97)"><use href="#fw" fill="#3090e0" stroke="#f4efe0" stroke-opacity="0.5" stroke-width="0.55"/><use href="#fw" fill="url(#rg)"/><circle r="1.3" fill="#97c7ef"/></g><g transform="translate(541.6 388.5) rotate(5) scale(1.05)"><use href="#fw" fill="#b08040" stroke="#f4efe0" stroke-opacity="0.5" stroke-width="0.55"/><use href="#fw" fill="url(#rg)"/><circle r="1.3" fill="#d7bf9f"/></g><g transform="translate(338.7 368.5) rotate(8) scale(0.97)"><use href="#fw" fill="#60b8e8" stroke="#f4efe0" stroke-opacity="0.5" stroke-width="0.55"/><use href="#fw" fill="url(#rg)"/><circle r="1.3" fill="#afdbf3"/></g><g transform="translate(440.1 258.4) rotate(71) scale(0.90)"><use href="#fw" fill="#90d080" stroke="#f4efe0" stroke-opacity="0.5" stroke-width="0.55"/><use href="#fw" fill="url(#rg)"/><circle r="1.3" fill="#c7e7bf"/></g><g transform="translate(428.6 389.7) rotate(24) scale(0.91)"><use href="#fw" fill="#b08040" stroke="#f4efe0" stroke-opacity="0.5" stroke-width="0.55"/><use href="#fw" fill="url(#rg)"/><circle r="1.3" fill="#d7bf9f"/></g><g transform="translate(599.3 385.9) rotate(33) scale(1.02)"><use href="#fw" fill="#e83c8c" stroke="#f4efe0" stroke-opacity="0.5" stroke-width="0.55"/><use href="#fw" fill="url(#rg)"/><circle r="1.3" fill="#f39dc5"/></g><g transform="translate(646.9 247.7) rotate(4) scale(0.93)"><use href="#fw" fill="#e03c30" stroke="#f4efe0" stroke-opacity="0.5" stroke-width="0.55"/><use href="#fw" fill="url(#rg)"/><circle r="1.3" fill="#ef9d97"/></g><g transform="translate(575.1 282.0) rotate(23) scale(1.02)"><use href="#fw" fill="#a0b8d0" stroke="#f4efe0" stroke-opacity="0.5" stroke-width="0.55"/><use href="#fw" fill="url(#rg)"/><circle r="1.3" fill="#cfdbe7"/></g><g transform="translate(378.0 237.9) rotate(36) scale(0.91)"><use href="#fw" fill="#e83c8c" stroke="#f4efe0" stroke-opacity="0.5" stroke-width="0.55"/><use href="#fw" fill="url(#rg)"/><circle r="1.3" fill="#f39dc5"/></g><g transform="translate(339.7 345.9) rotate(70) scale(0.94)"><use href="#fw" fill="#3090e0" stroke="#f4efe0" stroke-opacity="0.5" stroke-width="0.55"/><use href="#fw" fill="url(#rg)"/><circle r="1.3" fill="#97c7ef"/></g><g transform="translate(541.1 301.0) rotate(9) scale(0.96)"><use href="#fw" fill="#f0a080" stroke="#f4efe0" stroke-opacity="0.5" stroke-width="0.55"/><use href="#fw" fill="url(#rg)"/><circle r="1.3" fill="#f7cfbf"/></g><g transform="translate(469.5 226.2) rotate(18) scale(0.96)"><use href="#fw" fill="#f0a080" stroke="#f4efe0" stroke-opacity="0.5" stroke-width="0.55"/><use href="#fw" fill="url(#rg)"/><circle r="1.3" fill="#f7cfbf"/></g><g transform="translate(643.2 379.5) rotate(17) scale(1.05)"><use href="#fw" fill="#f0a080" stroke="#f4efe0" stroke-opacity="0.5" stroke-width="0.55"/><use href="#fw" fill="url(#rg)"/><circle r="1.3" fill="#f7cfbf"/></g><g transform="translate(475.2 237.6) rotate(4) scale(0.97)"><use href="#fw" fill="#a0b8d0" stroke="#f4efe0" stroke-opacity="0.5" stroke-width="0.55"/><use href="#fw" fill="url(#rg)"/><circle r="1.3" fill="#cfdbe7"/></g><g transform="translate(441.2 388.5) rotate(35) scale(0.97)"><use href="#fw" fill="#60b8e8" stroke="#f4efe0" stroke-opacity="0.5" stroke-width="0.55"/><use href="#fw" fill="url(#rg)"/><circle r="1.3" fill="#afdbf3"/></g><g transform="translate(523.5 226.1) rotate(18) scale(0.92)"><use href="#fw" fill="#e83c8c" stroke="#f4efe0" stroke-opacity="0.5" stroke-width="0.55"/><use href="#fw" fill="url(#rg)"/><circle r="1.3" fill="#f39dc5"/></g><g transform="translate(351.3 282.6) rotate(46) scale(1.06)"><use href="#fw" fill="#f0a0c0" stroke="#f4efe0" stroke-opacity="0.5" stroke-width="0.55"/><use href="#fw" fill="url(#rg)"/><circle r="1.3" fill="#f7cfdf"/></g><g transform="translate(594.9 226.1) rotate(59) scale(1.07)"><use href="#fw" fill="#e6786e" stroke="#f4efe0" stroke-opacity="0.5" stroke-width="0.55"/><use href="#fw" fill="url(#rg)"/><circle r="1.3" fill="#f2bbb6"/></g><g transform="translate(465.2 280.3) rotate(70) scale(1.04)"><use href="#fw" fill="#f5c830" stroke="#f4efe0" stroke-opacity="0.5" stroke-width="0.55"/><use href="#fw" fill="url(#rg)"/><circle r="1.3" fill="#fae397"/></g><g transform="translate(389.0 216.0) rotate(22) scale(0.97)"><use href="#fw" fill="#f0a080" stroke="#f4efe0" stroke-opacity="0.5" stroke-width="0.55"/><use href="#fw" fill="url(#rg)"/><circle r="1.3" fill="#f7cfbf"/></g><g transform="translate(335.3 185.4) rotate(68) scale(1.01)"><use href="#fw" fill="#50b050" stroke="#f4efe0" stroke-opacity="0.5" stroke-width="0.55"/><use href="#fw" fill="url(#rg)"/><circle r="1.3" fill="#a7d7a7"/></g><g transform="translate(333.7 398.2) rotate(60) scale(1.02)"><use href="#fw" fill="#e03c30" stroke="#f4efe0" stroke-opacity="0.5" stroke-width="0.55"/><use href="#fw" fill="url(#rg)"/><circle r="1.3" fill="#ef9d97"/></g><g transform="translate(417.6 217.0) rotate(23) scale(1.00)"><use href="#fw" fill="#f0a0c0" stroke="#f4efe0" stroke-opacity="0.5" stroke-width="0.55"/><use href="#fw" fill="url(#rg)"/><circle r="1.3" fill="#f7cfdf"/></g><g transform="translate(304.0 368.9) rotate(49) scale(0.94)"><use href="#fw" fill="#60b8e8" stroke="#f4efe0" stroke-opacity="0.5" stroke-width="0.55"/><use href="#fw" fill="url(#rg)"/><circle r="1.3" fill="#afdbf3"/></g><g transform="translate(529.6 236.9) rotate(20) scale(0.92)"><use href="#fw" fill="#f09040" stroke="#f4efe0" stroke-opacity="0.5" stroke-width="0.55"/><use href="#fw" fill="url(#rg)"/><circle r="1.3" fill="#f7c79f"/></g><g transform="translate(497.5 206.4) rotate(59) scale(1.05)"><use href="#fw" fill="#b08040" stroke="#f4efe0" stroke-opacity="0.5" stroke-width="0.55"/><use href="#fw" fill="url(#rg)"/><circle r="1.3" fill="#d7bf9f"/></g><g transform="translate(305.4 300.1) rotate(42) scale(1.05)"><use href="#fw" fill="#40a8a0" stroke="#f4efe0" stroke-opacity="0.5" stroke-width="0.55"/><use href="#fw" fill="url(#rg)"/><circle r="1.3" fill="#9fd3cf"/></g><g transform="translate(468.9 399.4) rotate(18) scale(0.96)"><use href="#fw" fill="#e03c30" stroke="#f4efe0" stroke-opacity="0.5" stroke-width="0.55"/><use href="#fw" fill="url(#rg)"/><circle r="1.3" fill="#ef9d97"/></g><g transform="translate(610.1 184.0) rotate(65) scale(1.03)"><use href="#fw" fill="#3090e0" stroke="#f4efe0" stroke-opacity="0.5" stroke-width="0.55"/><use href="#fw" fill="url(#rg)"/><circle r="1.3" fill="#97c7ef"/></g><g transform="translate(490.3 365.7) rotate(50) scale(0.97)"><use href="#fw" fill="#f09040" stroke="#f4efe0" stroke-opacity="0.5" stroke-width="0.55"/><use href="#fw" fill="url(#rg)"/><circle r="1.3" fill="#f7c79f"/></g><g transform="translate(606.8 375.8) rotate(64) scale(1.01)"><use href="#fw" fill="#e6786e" stroke="#f4efe0" stroke-opacity="0.5" stroke-width="0.55"/><use href="#fw" fill="url(#rg)"/><circle r="1.3" fill="#f2bbb6"/></g><g transform="translate(458.7 202.4) rotate(21) scale(0.96)"><use href="#fw" fill="#90d080" stroke="#f4efe0" stroke-opacity="0.5" stroke-width="0.55"/><use href="#fw" fill="url(#rg)"/><circle r="1.3" fill="#c7e7bf"/></g><g transform="translate(396.7 289.9) rotate(30) scale(1.02)"><use href="#fw" fill="#466ec8" stroke="#f4efe0" stroke-opacity="0.5" stroke-width="0.55"/><use href="#fw" fill="url(#rg)"/><circle r="1.3" fill="#a2b6e3"/></g><g transform="translate(609.7 334.5) rotate(11) scale(0.94)"><use href="#fw" fill="#e83c8c" stroke="#f4efe0" stroke-opacity="0.5" stroke-width="0.55"/><use href="#fw" fill="url(#rg)"/><circle r="1.3" fill="#f39dc5"/></g><g transform="translate(413.7 259.2) rotate(56) scale(1.00)"><use href="#fw" fill="#40a8a0" stroke="#f4efe0" stroke-opacity="0.5" stroke-width="0.55"/><use href="#fw" fill="url(#rg)"/><circle r="1.3" fill="#9fd3cf"/></g><g transform="translate(352.7 321.1) rotate(1) scale(0.95)"><use href="#fw" fill="#90d080" stroke="#f4efe0" stroke-opacity="0.5" stroke-width="0.55"/><use href="#fw" fill="url(#rg)"/><circle r="1.3" fill="#c7e7bf"/></g><g transform="translate(360.5 311.2) rotate(31) scale(0.93)"><use href="#fw" fill="#e03c30" stroke="#f4efe0" stroke-opacity="0.5" stroke-width="0.55"/><use href="#fw" fill="url(#rg)"/><circle r="1.3" fill="#ef9d97"/></g><g transform="translate(628.3 388.5) rotate(26) scale(1.06)"><use href="#fw" fill="#e6786e" stroke="#f4efe0" stroke-opacity="0.5" stroke-width="0.55"/><use href="#fw" fill="url(#rg)"/><circle r="1.3" fill="#f2bbb6"/></g><g transform="translate(365.6 368.7) rotate(14) scale(1.00)"><use href="#fw" fill="#60b8e8" stroke="#f4efe0" stroke-opacity="0.5" stroke-width="0.55"/><use href="#fw" fill="url(#rg)"/><circle r="1.3" fill="#afdbf3"/></g><g transform="translate(469.5 422.8) rotate(31) scale(1.07)"><use href="#fw" fill="#b0a0e0" stroke="#f4efe0" stroke-opacity="0.5" stroke-width="0.55"/><use href="#fw" fill="url(#rg)"/><circle r="1.3" fill="#d7cfef"/></g><g transform="translate(590.6 386.4) rotate(29) scale(1.04)"><use href="#fw" fill="#e03c30" stroke="#f4efe0" stroke-opacity="0.5" stroke-width="0.55"/><use href="#fw" fill="url(#rg)"/><circle r="1.3" fill="#ef9d97"/></g><g transform="translate(613.3 236.3) rotate(19) scale(1.07)"><use href="#fw" fill="#e03c30" stroke="#f4efe0" stroke-opacity="0.5" stroke-width="0.55"/><use href="#fw" fill="url(#rg)"/><circle r="1.3" fill="#ef9d97"/></g><g transform="translate(496.1 314.1) rotate(56) scale(0.98)"><use href="#fw" fill="#f0a080" stroke="#f4efe0" stroke-opacity="0.5" stroke-width="0.55"/><use href="#fw" fill="url(#rg)"/><circle r="1.3" fill="#f7cfbf"/></g><g transform="translate(478.5 216.5) rotate(3) scale(0.94)"><use href="#fw" fill="#e03c30" stroke="#f4efe0" stroke-opacity="0.5" stroke-width="0.55"/><use href="#fw" fill="url(#rg)"/><circle r="1.3" fill="#ef9d97"/></g><g transform="translate(421.7 397.3) rotate(17) scale(1.05)"><use href="#fw" fill="#60b8e8" stroke="#f4efe0" stroke-opacity="0.5" stroke-width="0.55"/><use href="#fw" fill="url(#rg)"/><circle r="1.3" fill="#afdbf3"/></g><g transform="translate(484.3 331.8) rotate(70) scale(0.99)"><use href="#fw" fill="#3090e0" stroke="#f4efe0" stroke-opacity="0.5" stroke-width="0.55"/><use href="#fw" fill="url(#rg)"/><circle r="1.3" fill="#97c7ef"/></g><g transform="translate(643.5 181.5) rotate(7) scale(0.96)"><use href="#fw" fill="#e03c30" stroke="#f4efe0" stroke-opacity="0.5" stroke-width="0.55"/><use href="#fw" fill="url(#rg)"/><circle r="1.3" fill="#ef9d97"/></g><g transform="translate(297.1 267.7) rotate(32) scale(0.96)"><use href="#fw" fill="#f09040" stroke="#f4efe0" stroke-opacity="0.5" stroke-width="0.55"/><use href="#fw" fill="url(#rg)"/><circle r="1.3" fill="#f7c79f"/></g><g transform="translate(625.1 279.4) rotate(17) scale(0.99)"><use href="#fw" fill="#f5c830" stroke="#f4efe0" stroke-opacity="0.5" stroke-width="0.55"/><use href="#fw" fill="url(#rg)"/><circle r="1.3" fill="#fae397"/></g><g transform="translate(625.7 408.4) rotate(66) scale(0.97)"><use href="#fw" fill="#c8aa8c" stroke="#f4efe0" stroke-opacity="0.5" stroke-width="0.55"/><use href="#fw" fill="url(#rg)"/><circle r="1.3" fill="#e3d4c5"/></g><g transform="translate(392.1 325.1) rotate(61) scale(1.07)"><use href="#fw" fill="#f0a080" stroke="#f4efe0" stroke-opacity="0.5" stroke-width="0.55"/><use href="#fw" fill="url(#rg)"/><circle r="1.3" fill="#f7cfbf"/></g><g transform="translate(644.5 336.5) rotate(29) scale(1.04)"><use href="#fw" fill="#f0e890" stroke="#f4efe0" stroke-opacity="0.5" stroke-width="0.55"/><use href="#fw" fill="url(#rg)"/><circle r="1.3" fill="#f7f3c7"/></g><g transform="translate(489.4 195.1) rotate(13) scale(0.93)"><use href="#fw" fill="#466ec8" stroke="#f4efe0" stroke-opacity="0.5" stroke-width="0.55"/><use href="#fw" fill="url(#rg)"/><circle r="1.3" fill="#a2b6e3"/></g><g transform="translate(572.9 268.1) rotate(12) scale(1.05)"><use href="#fw" fill="#e03c30" stroke="#f4efe0" stroke-opacity="0.5" stroke-width="0.55"/><use href="#fw" fill="url(#rg)"/><circle r="1.3" fill="#ef9d97"/></g><g transform="translate(578.7 191.6) rotate(17) scale(0.94)"><use href="#fw" fill="#b0a0e0" stroke="#f4efe0" stroke-opacity="0.5" stroke-width="0.55"/><use href="#fw" fill="url(#rg)"/><circle r="1.3" fill="#d7cfef"/></g><g transform="translate(382.6 184.3) rotate(15) scale(1.00)"><use href="#fw" fill="#90d080" stroke="#f4efe0" stroke-opacity="0.5" stroke-width="0.55"/><use href="#fw" fill="url(#rg)"/><circle r="1.3" fill="#c7e7bf"/></g><g transform="translate(445.5 334.9) rotate(1) scale(1.07)"><use href="#fw" fill="#f09040" stroke="#f4efe0" stroke-opacity="0.5" stroke-width="0.55"/><use href="#fw" fill="url(#rg)"/><circle r="1.3" fill="#f7c79f"/></g><g transform="translate(321.5 293.0) rotate(29) scale(0.98)"><use href="#fw" fill="#e03c30" stroke="#f4efe0" stroke-opacity="0.5" stroke-width="0.55"/><use href="#fw" fill="url(#rg)"/><circle r="1.3" fill="#ef9d97"/></g><g transform="translate(546.3 203.4) rotate(33) scale(0.95)"><use href="#fw" fill="#f09040" stroke="#f4efe0" stroke-opacity="0.5" stroke-width="0.55"/><use href="#fw" fill="url(#rg)"/><circle r="1.3" fill="#f7c79f"/></g><g transform="translate(336.3 422.2) rotate(0) scale(0.95)"><use href="#fw" fill="#f0e890" stroke="#f4efe0" stroke-opacity="0.5" stroke-width="0.55"/><use href="#fw" fill="url(#rg)"/><circle r="1.3" fill="#f7f3c7"/></g><g transform="translate(353.8 214.3) rotate(16) scale(1.07)"><use href="#fw" fill="#f0a080" stroke="#f4efe0" stroke-opacity="0.5" stroke-width="0.55"/><use href="#fw" fill="url(#rg)"/><circle r="1.3" fill="#f7cfbf"/></g><g transform="translate(348.5 225.9) rotate(60) scale(0.97)"><use href="#fw" fill="#f09040" stroke="#f4efe0" stroke-opacity="0.5" stroke-width="0.55"/><use href="#fw" fill="url(#rg)"/><circle r="1.3" fill="#f7c79f"/></g><g transform="translate(372.4 358.3) rotate(52) scale(0.99)"><use href="#fw" fill="#b0a0e0" stroke="#f4efe0" stroke-opacity="0.5" stroke-width="0.55"/><use href="#fw" fill="url(#rg)"/><circle r="1.3" fill="#d7cfef"/></g><g transform="translate(526.0 321.6) rotate(32) scale(0.98)"><use href="#fw" fill="#f5c830" stroke="#f4efe0" stroke-opacity="0.5" stroke-width="0.55"/><use href="#fw" fill="url(#rg)"/><circle r="1.3" fill="#fae397"/></g><g transform="translate(527.2 300.7) rotate(47) scale(0.99)"><use href="#fw" fill="#e83c8c" stroke="#f4efe0" stroke-opacity="0.5" stroke-width="0.55"/><use href="#fw" fill="url(#rg)"/><circle r="1.3" fill="#f39dc5"/></g><g transform="translate(436.4 289.5) rotate(1) scale(1.01)"><use href="#fw" fill="#f0a0c0" stroke="#f4efe0" stroke-opacity="0.5" stroke-width="0.55"/><use href="#fw" fill="url(#rg)"/><circle r="1.3" fill="#f7cfdf"/></g><g transform="translate(439.6 195.5) rotate(69) scale(1.03)"><use href="#fw" fill="#60b8e8" stroke="#f4efe0" stroke-opacity="0.5" stroke-width="0.55"/><use href="#fw" fill="url(#rg)"/><circle r="1.3" fill="#afdbf3"/></g><g transform="translate(359.9 334.0) rotate(21) scale(1.04)"><use href="#fw" fill="#b0a0e0" stroke="#f4efe0" stroke-opacity="0.5" stroke-width="0.55"/><use href="#fw" fill="url(#rg)"/><circle r="1.3" fill="#d7cfef"/></g><g transform="translate(358.6 397.2) rotate(49) scale(1.06)"><use href="#fw" fill="#e6786e" stroke="#f4efe0" stroke-opacity="0.5" stroke-width="0.55"/><use href="#fw" fill="url(#rg)"/><circle r="1.3" fill="#f2bbb6"/></g><g transform="translate(358.4 270.3) rotate(41) scale(0.90)"><use href="#fw" fill="#e03c30" stroke="#f4efe0" stroke-opacity="0.5" stroke-width="0.55"/><use href="#fw" fill="url(#rg)"/><circle r="1.3" fill="#ef9d97"/></g><g transform="translate(408.7 182.0) rotate(18) scale(0.93)"><use href="#fw" fill="#f0a0c0" stroke="#f4efe0" stroke-opacity="0.5" stroke-width="0.55"/><use href="#fw" fill="url(#rg)"/><circle r="1.3" fill="#f7cfdf"/></g><g transform="translate(323.5 375.1) rotate(66) scale(0.96)"><use href="#fw" fill="#f0a0c0" stroke="#f4efe0" stroke-opacity="0.5" stroke-width="0.55"/><use href="#fw" fill="url(#rg)"/><circle r="1.3" fill="#f7cfdf"/></g><g transform="translate(569.5 228.7) rotate(38) scale(0.92)"><use href="#fw" fill="#b0a0e0" stroke="#f4efe0" stroke-opacity="0.5" stroke-width="0.55"/><use href="#fw" fill="url(#rg)"/><circle r="1.3" fill="#d7cfef"/></g><g transform="translate(414.3 365.9) rotate(27) scale(0.94)"><use href="#fw" fill="#60b8e8" stroke="#f4efe0" stroke-opacity="0.5" stroke-width="0.55"/><use href="#fw" fill="url(#rg)"/><circle r="1.3" fill="#afdbf3"/></g><g transform="translate(310.5 335.9) rotate(15) scale(0.92)"><use href="#fw" fill="#f0a0c0" stroke="#f4efe0" stroke-opacity="0.5" stroke-width="0.55"/><use href="#fw" fill="url(#rg)"/><circle r="1.3" fill="#f7cfdf"/></g><g transform="translate(478.2 344.9) rotate(24) scale(0.95)"><use href="#fw" fill="#e83c8c" stroke="#f4efe0" stroke-opacity="0.5" stroke-width="0.55"/><use href="#fw" fill="url(#rg)"/><circle r="1.3" fill="#f39dc5"/></g><g transform="translate(396.0 202.9) rotate(46) scale(1.04)"><use href="#fw" fill="#a0b8d0" stroke="#f4efe0" stroke-opacity="0.5" stroke-width="0.55"/><use href="#fw" fill="url(#rg)"/><circle r="1.3" fill="#cfdbe7"/></g><g transform="translate(371.8 246.0) rotate(6) scale(0.91)"><use href="#fw" fill="#90d080" stroke="#f4efe0" stroke-opacity="0.5" stroke-width="0.55"/><use href="#fw" fill="url(#rg)"/><circle r="1.3" fill="#c7e7bf"/></g><g transform="translate(410.6 418.5) rotate(29) scale(0.93)"><use href="#fw" fill="#b08040" stroke="#f4efe0" stroke-opacity="0.5" stroke-width="0.55"/><use href="#fw" fill="url(#rg)"/><circle r="1.3" fill="#d7bf9f"/></g><g transform="translate(507.1 375.2) rotate(8) scale(0.95)"><use href="#fw" fill="#e83c8c" stroke="#f4efe0" stroke-opacity="0.5" stroke-width="0.55"/><use href="#fw" fill="url(#rg)"/><circle r="1.3" fill="#f39dc5"/></g><g transform="translate(428.2 343.3) rotate(64) scale(0.92)"><use href="#fw" fill="#f5c830" stroke="#f4efe0" stroke-opacity="0.5" stroke-width="0.55"/><use href="#fw" fill="url(#rg)"/><circle r="1.3" fill="#fae397"/></g><g transform="translate(436.5 399.1) rotate(16) scale(0.96)"><use href="#fw" fill="#b0a0e0" stroke="#f4efe0" stroke-opacity="0.5" stroke-width="0.55"/><use href="#fw" fill="url(#rg)"/><circle r="1.3" fill="#d7cfef"/></g><g transform="translate(409.4 356.6) rotate(63) scale(1.06)"><use href="#fw" fill="#f5c830" stroke="#f4efe0" stroke-opacity="0.5" stroke-width="0.55"/><use href="#fw" fill="url(#rg)"/><circle r="1.3" fill="#fae397"/></g><g transform="translate(575.0 214.3) rotate(45) scale(1.03)"><use href="#fw" fill="#f0a080" stroke="#f4efe0" stroke-opacity="0.5" stroke-width="0.55"/><use href="#fw" fill="url(#rg)"/><circle r="1.3" fill="#f7cfbf"/></g><g transform="translate(621.6 185.1) rotate(29) scale(1.04)"><use href="#fw" fill="#60b8e8" stroke="#f4efe0" stroke-opacity="0.5" stroke-width="0.55"/><use href="#fw" fill="url(#rg)"/><circle r="1.3" fill="#afdbf3"/></g><g transform="translate(479.4 367.8) rotate(47) scale(1.03)"><use href="#fw" fill="#e03c30" stroke="#f4efe0" stroke-opacity="0.5" stroke-width="0.55"/><use href="#fw" fill="url(#rg)"/><circle r="1.3" fill="#ef9d97"/></g><g transform="translate(520.0 332.3) rotate(37) scale(1.03)"><use href="#fw" fill="#3090e0" stroke="#f4efe0" stroke-opacity="0.5" stroke-width="0.55"/><use href="#fw" fill="url(#rg)"/><circle r="1.3" fill="#97c7ef"/></g><g transform="translate(544.9 418.3) rotate(40) scale(0.98)"><use href="#fw" fill="#f0a080" stroke="#f4efe0" stroke-opacity="0.5" stroke-width="0.55"/><use href="#fw" fill="url(#rg)"/><circle r="1.3" fill="#f7cfbf"/></g><g transform="translate(559.2 423.0) rotate(19) scale(1.05)"><use href="#fw" fill="#a0b8d0" stroke="#f4efe0" stroke-opacity="0.5" stroke-width="0.55"/><use href="#fw" fill="url(#rg)"/><circle r="1.3" fill="#cfdbe7"/></g><g transform="translate(425.8 323.9) rotate(51) scale(0.97)"><use href="#fw" fill="#f09040" stroke="#f4efe0" stroke-opacity="0.5" stroke-width="0.55"/><use href="#fw" fill="url(#rg)"/><circle r="1.3" fill="#f7c79f"/></g><g transform="translate(608.7 398.5) rotate(22) scale(0.97)"><use href="#fw" fill="#f0a0c0" stroke="#f4efe0" stroke-opacity="0.5" stroke-width="0.55"/><use href="#fw" fill="url(#rg)"/><circle r="1.3" fill="#f7cfdf"/></g><g transform="translate(581.4 206.9) rotate(55) scale(1.01)"><use href="#fw" fill="#b0a0e0" stroke="#f4efe0" stroke-opacity="0.5" stroke-width="0.55"/><use href="#fw" fill="url(#rg)"/><circle r="1.3" fill="#d7cfef"/></g><g transform="translate(473.7 202.9) rotate(70) scale(1.06)"><use href="#fw" fill="#e83c8c" stroke="#f4efe0" stroke-opacity="0.5" stroke-width="0.55"/><use href="#fw" fill="url(#rg)"/><circle r="1.3" fill="#f39dc5"/></g><g transform="translate(512.6 300.8) rotate(29) scale(0.96)"><use href="#fw" fill="#b0a0e0" stroke="#f4efe0" stroke-opacity="0.5" stroke-width="0.55"/><use href="#fw" fill="url(#rg)"/><circle r="1.3" fill="#d7cfef"/></g><g transform="translate(354.7 259.7) rotate(57) scale(1.06)"><use href="#fw" fill="#40a8a0" stroke="#f4efe0" stroke-opacity="0.5" stroke-width="0.55"/><use href="#fw" fill="url(#rg)"/><circle r="1.3" fill="#9fd3cf"/></g><g transform="translate(374.2 203.3) rotate(9) scale(0.98)"><use href="#fw" fill="#3090e0" stroke="#f4efe0" stroke-opacity="0.5" stroke-width="0.55"/><use href="#fw" fill="url(#rg)"/><circle r="1.3" fill="#97c7ef"/></g><g transform="translate(340.6 321.5) rotate(6) scale(1.01)"><use href="#fw" fill="#f0a0c0" stroke="#f4efe0" stroke-opacity="0.5" stroke-width="0.55"/><use href="#fw" fill="url(#rg)"/><circle r="1.3" fill="#f7cfdf"/></g><g transform="translate(568.4 245.9) rotate(11) scale(0.97)"><use href="#fw" fill="#8050c0" stroke="#f4efe0" stroke-opacity="0.5" stroke-width="0.55"/><use href="#fw" fill="url(#rg)"/><circle r="1.3" fill="#bfa7df"/></g><g transform="translate(496.5 225.8) rotate(5) scale(0.93)"><use href="#fw" fill="#f5c830" stroke="#f4efe0" stroke-opacity="0.5" stroke-width="0.55"/><use href="#fw" fill="url(#rg)"/><circle r="1.3" fill="#fae397"/></g><g transform="translate(500.6 324.7) rotate(54) scale(1.06)"><use href="#fw" fill="#b08040" stroke="#f4efe0" stroke-opacity="0.5" stroke-width="0.55"/><use href="#fw" fill="url(#rg)"/><circle r="1.3" fill="#d7bf9f"/></g><g transform="translate(563.7 408.0) rotate(62) scale(0.93)"><use href="#fw" fill="#a0b8d0" stroke="#f4efe0" stroke-opacity="0.5" stroke-width="0.55"/><use href="#fw" fill="url(#rg)"/><circle r="1.3" fill="#cfdbe7"/></g><g transform="translate(447.5 313.3) rotate(53) scale(0.97)"><use href="#fw" fill="#f0a080" stroke="#f4efe0" stroke-opacity="0.5" stroke-width="0.55"/><use href="#fw" fill="url(#rg)"/><circle r="1.3" fill="#f7cfbf"/></g><g transform="translate(301.7 278.5) rotate(50) scale(1.01)"><use href="#fw" fill="#e03c30" stroke="#f4efe0" stroke-opacity="0.5" stroke-width="0.55"/><use href="#fw" fill="url(#rg)"/><circle r="1.3" fill="#ef9d97"/></g><g transform="translate(368.4 342.7) rotate(19) scale(1.05)"><use href="#fw" fill="#90d080" stroke="#f4efe0" stroke-opacity="0.5" stroke-width="0.55"/><use href="#fw" fill="url(#rg)"/><circle r="1.3" fill="#c7e7bf"/></g><g transform="translate(433.7 335.4) rotate(25) scale(0.91)"><use href="#fw" fill="#f0a0c0" stroke="#f4efe0" stroke-opacity="0.5" stroke-width="0.55"/><use href="#fw" fill="url(#rg)"/><circle r="1.3" fill="#f7cfdf"/></g><g transform="translate(448.3 293.1) rotate(39) scale(0.92)"><use href="#fw" fill="#f0a080" stroke="#f4efe0" stroke-opacity="0.5" stroke-width="0.55"/><use href="#fw" fill="url(#rg)"/><circle r="1.3" fill="#f7cfbf"/></g><g transform="translate(452.1 192.6) rotate(24) scale(0.94)"><use href="#fw" fill="#e83c8c" stroke="#f4efe0" stroke-opacity="0.5" stroke-width="0.55"/><use href="#fw" fill="url(#rg)"/><circle r="1.3" fill="#f39dc5"/></g><g transform="translate(495.1 397.8) rotate(26) scale(0.99)"><use href="#fw" fill="#f0a080" stroke="#f4efe0" stroke-opacity="0.5" stroke-width="0.55"/><use href="#fw" fill="url(#rg)"/><circle r="1.3" fill="#f7cfbf"/></g><g transform="translate(388.4 409.7) rotate(24) scale(1.01)"><use href="#fw" fill="#f0a0c0" stroke="#f4efe0" stroke-opacity="0.5" stroke-width="0.55"/><use href="#fw" fill="url(#rg)"/><circle r="1.3" fill="#f7cfdf"/></g><g transform="translate(513.6 346.9) rotate(56) scale(0.94)"><use href="#fw" fill="#e03c30" stroke="#f4efe0" stroke-opacity="0.5" stroke-width="0.55"/><use href="#fw" fill="url(#rg)"/><circle r="1.3" fill="#ef9d97"/></g><g transform="translate(502.6 410.8) rotate(38) scale(1.00)"><use href="#fw" fill="#60b8e8" stroke="#f4efe0" stroke-opacity="0.5" stroke-width="0.55"/><use href="#fw" fill="url(#rg)"/><circle r="1.3" fill="#afdbf3"/></g><g transform="translate(330.2 325.2) rotate(72) scale(0.94)"><use href="#fw" fill="#c8aa8c" stroke="#f4efe0" stroke-opacity="0.5" stroke-width="0.55"/><use href="#fw" fill="url(#rg)"/><circle r="1.3" fill="#e3d4c5"/></g><g transform="translate(618.5 396.8) rotate(18) scale(0.95)"><use href="#fw" fill="#f0a080" stroke="#f4efe0" stroke-opacity="0.5" stroke-width="0.55"/><use href="#fw" fill="url(#rg)"/><circle r="1.3" fill="#f7cfbf"/></g><g transform="translate(633.3 335.2) rotate(38) scale(1.00)"><use href="#fw" fill="#90d080" stroke="#f4efe0" stroke-opacity="0.5" stroke-width="0.55"/><use href="#fw" fill="url(#rg)"/><circle r="1.3" fill="#c7e7bf"/></g><g transform="translate(485.0 227.1) rotate(22) scale(0.97)"><use href="#fw" fill="#e83c8c" stroke="#f4efe0" stroke-opacity="0.5" stroke-width="0.55"/><use href="#fw" fill="url(#rg)"/><circle r="1.3" fill="#f39dc5"/></g><g transform="translate(331.1 257.2) rotate(70) scale(0.92)"><use href="#fw" fill="#e03c30" stroke="#f4efe0" stroke-opacity="0.5" stroke-width="0.55"/><use href="#fw" fill="url(#rg)"/><circle r="1.3" fill="#ef9d97"/></g><g transform="translate(291.4 412.1) rotate(63) scale(1.02)"><use href="#fw" fill="#a0b8d0" stroke="#f4efe0" stroke-opacity="0.5" stroke-width="0.55"/><use href="#fw" fill="url(#rg)"/><circle r="1.3" fill="#cfdbe7"/></g><g transform="translate(442.2 367.5) rotate(43) scale(1.06)"><use href="#fw" fill="#f0a080" stroke="#f4efe0" stroke-opacity="0.5" stroke-width="0.55"/><use href="#fw" fill="url(#rg)"/><circle r="1.3" fill="#f7cfbf"/></g><g transform="translate(482.1 378.2) rotate(60) scale(1.00)"><use href="#fw" fill="#3090e0" stroke="#f4efe0" stroke-opacity="0.5" stroke-width="0.55"/><use href="#fw" fill="url(#rg)"/><circle r="1.3" fill="#97c7ef"/></g><g transform="translate(364.4 214.8) rotate(36) scale(0.91)"><use href="#fw" fill="#f0a080" stroke="#f4efe0" stroke-opacity="0.5" stroke-width="0.55"/><use href="#fw" fill="url(#rg)"/><circle r="1.3" fill="#f7cfbf"/></g><g transform="translate(453.0 346.7) rotate(16) scale(1.01)"><use href="#fw" fill="#50b050" stroke="#f4efe0" stroke-opacity="0.5" stroke-width="0.55"/><use href="#fw" fill="url(#rg)"/><circle r="1.3" fill="#a7d7a7"/></g><g transform="translate(436.6 418.2) rotate(45) scale(0.94)"><use href="#fw" fill="#f0a0c0" stroke="#f4efe0" stroke-opacity="0.5" stroke-width="0.55"/><use href="#fw" fill="url(#rg)"/><circle r="1.3" fill="#f7cfdf"/></g><g transform="translate(483.8 270.2) rotate(37) scale(1.04)"><use href="#fw" fill="#f5c830" stroke="#f4efe0" stroke-opacity="0.5" stroke-width="0.55"/><use href="#fw" fill="url(#rg)"/><circle r="1.3" fill="#fae397"/></g><g transform="translate(289.7 280.9) rotate(50) scale(0.93)"><use href="#fw" fill="#f5c830" stroke="#f4efe0" stroke-opacity="0.5" stroke-width="0.55"/><use href="#fw" fill="url(#rg)"/><circle r="1.3" fill="#fae397"/></g><g transform="translate(440.0 304.4) rotate(46) scale(1.02)"><use href="#fw" fill="#f5c830" stroke="#f4efe0" stroke-opacity="0.5" stroke-width="0.55"/><use href="#fw" fill="url(#rg)"/><circle r="1.3" fill="#fae397"/></g><g transform="translate(645.4 396.9) rotate(25) scale(0.93)"><use href="#fw" fill="#50b050" stroke="#f4efe0" stroke-opacity="0.5" stroke-width="0.55"/><use href="#fw" fill="url(#rg)"/><circle r="1.3" fill="#a7d7a7"/></g><g transform="translate(364.9 389.0) rotate(64) scale(0.99)"><use href="#fw" fill="#3090e0" stroke="#f4efe0" stroke-opacity="0.5" stroke-width="0.55"/><use href="#fw" fill="url(#rg)"/><circle r="1.3" fill="#97c7ef"/></g><g transform="translate(581.2 291.9) rotate(59) scale(1.05)"><use href="#fw" fill="#f0a0c0" stroke="#f4efe0" stroke-opacity="0.5" stroke-width="0.55"/><use href="#fw" fill="url(#rg)"/><circle r="1.3" fill="#f7cfdf"/></g><g transform="translate(395.2 247.7) rotate(54) scale(1.06)"><use href="#fw" fill="#e83c8c" stroke="#f4efe0" stroke-opacity="0.5" stroke-width="0.55"/><use href="#fw" fill="url(#rg)"/><circle r="1.3" fill="#f39dc5"/></g><g transform="translate(308.2 205.1) rotate(3) scale(0.94)"><use href="#fw" fill="#f0a080" stroke="#f4efe0" stroke-opacity="0.5" stroke-width="0.55"/><use href="#fw" fill="url(#rg)"/><circle r="1.3" fill="#f7cfbf"/></g><g transform="translate(343.3 282.5) rotate(15) scale(0.92)"><use href="#fw" fill="#e83c8c" stroke="#f4efe0" stroke-opacity="0.5" stroke-width="0.55"/><use href="#fw" fill="url(#rg)"/><circle r="1.3" fill="#f39dc5"/></g><g transform="translate(296.9 181.5) rotate(59) scale(1.01)"><use href="#fw" fill="#f09040" stroke="#f4efe0" stroke-opacity="0.5" stroke-width="0.55"/><use href="#fw" fill="url(#rg)"/><circle r="1.3" fill="#f7c79f"/></g><g transform="translate(314.8 256.6) rotate(58) scale(0.97)"><use href="#fw" fill="#f0a0c0" stroke="#f4efe0" stroke-opacity="0.5" stroke-width="0.55"/><use href="#fw" fill="url(#rg)"/><circle r="1.3" fill="#f7cfdf"/></g><g transform="translate(515.5 386.6) rotate(35) scale(1.02)"><use href="#fw" fill="#a0b8d0" stroke="#f4efe0" stroke-opacity="0.5" stroke-width="0.55"/><use href="#fw" fill="url(#rg)"/><circle r="1.3" fill="#cfdbe7"/></g><g transform="translate(519.1 181.0) rotate(53) scale(1.03)"><use href="#fw" fill="#f5c830" stroke="#f4efe0" stroke-opacity="0.5" stroke-width="0.55"/><use href="#fw" fill="url(#rg)"/><circle r="1.3" fill="#fae397"/></g><g transform="translate(620.0 271.2) rotate(2) scale(1.02)"><use href="#fw" fill="#e6786e" stroke="#f4efe0" stroke-opacity="0.5" stroke-width="0.55"/><use href="#fw" fill="url(#rg)"/><circle r="1.3" fill="#f2bbb6"/></g><g transform="translate(480.0 410.1) rotate(19) scale(0.94)"><use href="#fw" fill="#90d080" stroke="#f4efe0" stroke-opacity="0.5" stroke-width="0.55"/><use href="#fw" fill="url(#rg)"/><circle r="1.3" fill="#c7e7bf"/></g><g transform="translate(299.6 311.1) rotate(31) scale(0.91)"><use href="#fw" fill="#e03c30" stroke="#f4efe0" stroke-opacity="0.5" stroke-width="0.55"/><use href="#fw" fill="url(#rg)"/><circle r="1.3" fill="#ef9d97"/></g><g transform="translate(341.2 407.8) rotate(69) scale(0.94)"><use href="#fw" fill="#e03c30" stroke="#f4efe0" stroke-opacity="0.5" stroke-width="0.55"/><use href="#fw" fill="url(#rg)"/><circle r="1.3" fill="#ef9d97"/></g><g transform="translate(314.8 324.5) rotate(26) scale(0.96)"><use href="#fw" fill="#50b050" stroke="#f4efe0" stroke-opacity="0.5" stroke-width="0.55"/><use href="#fw" fill="url(#rg)"/><circle r="1.3" fill="#a7d7a7"/></g><g transform="translate(434.9 269.2) rotate(35) scale(1.06)"><use href="#fw" fill="#a0b8d0" stroke="#f4efe0" stroke-opacity="0.5" stroke-width="0.55"/><use href="#fw" fill="url(#rg)"/><circle r="1.3" fill="#cfdbe7"/></g><g transform="translate(327.4 409.3) rotate(20) scale(0.94)"><use href="#fw" fill="#90d080" stroke="#f4efe0" stroke-opacity="0.5" stroke-width="0.55"/><use href="#fw" fill="url(#rg)"/><circle r="1.3" fill="#c7e7bf"/></g><g transform="translate(377.3 365.3) rotate(2) scale(0.91)"><use href="#fw" fill="#b08040" stroke="#f4efe0" stroke-opacity="0.5" stroke-width="0.55"/><use href="#fw" fill="url(#rg)"/><circle r="1.3" fill="#d7bf9f"/></g><g transform="translate(632.4 311.2) rotate(1) scale(0.94)"><use href="#fw" fill="#f0a0c0" stroke="#f4efe0" stroke-opacity="0.5" stroke-width="0.55"/><use href="#fw" fill="url(#rg)"/><circle r="1.3" fill="#f7cfdf"/></g><g transform="translate(508.6 227.9) rotate(65) scale(1.00)"><use href="#fw" fill="#3090e0" stroke="#f4efe0" stroke-opacity="0.5" stroke-width="0.55"/><use href="#fw" fill="url(#rg)"/><circle r="1.3" fill="#97c7ef"/></g><g transform="translate(373.8 181.6) rotate(14) scale(1.00)"><use href="#fw" fill="#40a8a0" stroke="#f4efe0" stroke-opacity="0.5" stroke-width="0.55"/><use href="#fw" fill="url(#rg)"/><circle r="1.3" fill="#9fd3cf"/></g><g transform="translate(391.7 236.8) rotate(31) scale(0.95)"><use href="#fw" fill="#b08040" stroke="#f4efe0" stroke-opacity="0.5" stroke-width="0.55"/><use href="#fw" fill="url(#rg)"/><circle r="1.3" fill="#d7bf9f"/></g><g transform="translate(384.2 377.5) rotate(35) scale(1.06)"><use href="#fw" fill="#f5c830" stroke="#f4efe0" stroke-opacity="0.5" stroke-width="0.55"/><use href="#fw" fill="url(#rg)"/><circle r="1.3" fill="#fae397"/></g><g transform="translate(347.9 248.0) rotate(18) scale(0.97)"><use href="#fw" fill="#f5c830" stroke="#f4efe0" stroke-opacity="0.5" stroke-width="0.55"/><use href="#fw" fill="url(#rg)"/><circle r="1.3" fill="#fae397"/></g><g transform="translate(608.4 357.6) rotate(25) scale(1.07)"><use href="#fw" fill="#f09040" stroke="#f4efe0" stroke-opacity="0.5" stroke-width="0.55"/><use href="#fw" fill="url(#rg)"/><circle r="1.3" fill="#f7c79f"/></g><g transform="translate(599.7 346.9) rotate(40) scale(0.90)"><use href="#fw" fill="#f0a0c0" stroke="#f4efe0" stroke-opacity="0.5" stroke-width="0.55"/><use href="#fw" fill="url(#rg)"/><circle r="1.3" fill="#f7cfdf"/></g><g transform="translate(624.3 215.4) rotate(59) scale(0.95)"><use href="#fw" fill="#f09040" stroke="#f4efe0" stroke-opacity="0.5" stroke-width="0.55"/><use href="#fw" fill="url(#rg)"/><circle r="1.3" fill="#f7c79f"/></g><g transform="translate(550.6 347.3) rotate(30) scale(1.03)"><use href="#fw" fill="#f5c830" stroke="#f4efe0" stroke-opacity="0.5" stroke-width="0.55"/><use href="#fw" fill="url(#rg)"/><circle r="1.3" fill="#fae397"/></g><g transform="translate(385.6 292.9) rotate(9) scale(1.02)"><use href="#fw" fill="#40a8a0" stroke="#f4efe0" stroke-opacity="0.5" stroke-width="0.55"/><use href="#fw" fill="url(#rg)"/><circle r="1.3" fill="#9fd3cf"/></g><g transform="translate(637.6 321.5) rotate(8) scale(0.98)"><use href="#fw" fill="#b0a0e0" stroke="#f4efe0" stroke-opacity="0.5" stroke-width="0.55"/><use href="#fw" fill="url(#rg)"/><circle r="1.3" fill="#d7cfef"/></g><g transform="translate(538.6 279.9) rotate(27) scale(1.00)"><use href="#fw" fill="#f5c830" stroke="#f4efe0" stroke-opacity="0.5" stroke-width="0.55"/><use href="#fw" fill="url(#rg)"/><circle r="1.3" fill="#fae397"/></g><g transform="translate(331.2 216.1) rotate(33) scale(1.02)"><use href="#fw" fill="#e03c30" stroke="#f4efe0" stroke-opacity="0.5" stroke-width="0.55"/><use href="#fw" fill="url(#rg)"/><circle r="1.3" fill="#ef9d97"/></g><g transform="translate(639.8 344.0) rotate(28) scale(0.96)"><use href="#fw" fill="#60b8e8" stroke="#f4efe0" stroke-opacity="0.5" stroke-width="0.55"/><use href="#fw" fill="url(#rg)"/><circle r="1.3" fill="#afdbf3"/></g><g transform="translate(534.4 290.4) rotate(22) scale(0.95)"><use href="#fw" fill="#e83c8c" stroke="#f4efe0" stroke-opacity="0.5" stroke-width="0.55"/><use href="#fw" fill="url(#rg)"/><circle r="1.3" fill="#f39dc5"/></g><g transform="translate(433.3 375.6) rotate(35) scale(1.02)"><use href="#fw" fill="#b08040" stroke="#f4efe0" stroke-opacity="0.5" stroke-width="0.55"/><use href="#fw" fill="url(#rg)"/><circle r="1.3" fill="#d7bf9f"/></g><g transform="translate(458.3 376.4) rotate(42) scale(1.05)"><use href="#fw" fill="#f5c830" stroke="#f4efe0" stroke-opacity="0.5" stroke-width="0.55"/><use href="#fw" fill="url(#rg)"/><circle r="1.3" fill="#fae397"/></g><g transform="translate(508.9 311.6) rotate(51) scale(0.91)"><use href="#fw" fill="#40a8a0" stroke="#f4efe0" stroke-opacity="0.5" stroke-width="0.55"/><use href="#fw" fill="url(#rg)"/><circle r="1.3" fill="#9fd3cf"/></g><g transform="translate(605.7 312.9) rotate(57) scale(1.04)"><use href="#fw" fill="#e83c8c" stroke="#f4efe0" stroke-opacity="0.5" stroke-width="0.55"/><use href="#fw" fill="url(#rg)"/><circle r="1.3" fill="#f39dc5"/></g><g transform="translate(514.6 213.4) rotate(39) scale(1.06)"><use href="#fw" fill="#466ec8" stroke="#f4efe0" stroke-opacity="0.5" stroke-width="0.55"/><use href="#fw" fill="url(#rg)"/><circle r="1.3" fill="#a2b6e3"/></g><g transform="translate(377.0 325.6) rotate(68) scale(0.95)"><use href="#fw" fill="#f09040" stroke="#f4efe0" stroke-opacity="0.5" stroke-width="0.55"/><use href="#fw" fill="url(#rg)"/><circle r="1.3" fill="#f7c79f"/></g><g transform="translate(609.6 271.6) rotate(70) scale(1.07)"><use href="#fw" fill="#d030a0" stroke="#f4efe0" stroke-opacity="0.5" stroke-width="0.55"/><use href="#fw" fill="url(#rg)"/><circle r="1.3" fill="#e797cf"/></g><g transform="translate(439.1 235.8) rotate(8) scale(1.03)"><use href="#fw" fill="#f0a080" stroke="#f4efe0" stroke-opacity="0.5" stroke-width="0.55"/><use href="#fw" fill="url(#rg)"/><circle r="1.3" fill="#f7cfbf"/></g><g transform="translate(461.1 334.1) rotate(18) scale(1.05)"><use href="#fw" fill="#f0a080" stroke="#f4efe0" stroke-opacity="0.5" stroke-width="0.55"/><use href="#fw" fill="url(#rg)"/><circle r="1.3" fill="#f7cfbf"/></g><g transform="translate(408.3 228.5) rotate(31) scale(0.94)"><use href="#fw" fill="#f0a080" stroke="#f4efe0" stroke-opacity="0.5" stroke-width="0.55"/><use href="#fw" fill="url(#rg)"/><circle r="1.3" fill="#f7cfbf"/></g><g transform="translate(329.5 344.4) rotate(23) scale(0.99)"><use href="#fw" fill="#f09040" stroke="#f4efe0" stroke-opacity="0.5" stroke-width="0.55"/><use href="#fw" fill="url(#rg)"/><circle r="1.3" fill="#f7c79f"/></g><g transform="translate(572.7 314.0) rotate(60) scale(1.04)"><use href="#fw" fill="#f0a080" stroke="#f4efe0" stroke-opacity="0.5" stroke-width="0.55"/><use href="#fw" fill="url(#rg)"/><circle r="1.3" fill="#f7cfbf"/></g><g transform="translate(453.6 322.9) rotate(27) scale(0.98)"><use href="#fw" fill="#f5c830" stroke="#f4efe0" stroke-opacity="0.5" stroke-width="0.55"/><use href="#fw" fill="url(#rg)"/><circle r="1.3" fill="#fae397"/></g><g transform="translate(511.0 422.3) rotate(53) scale(1.07)"><use href="#fw" fill="#e83c8c" stroke="#f4efe0" stroke-opacity="0.5" stroke-width="0.55"/><use href="#fw" fill="url(#rg)"/><circle r="1.3" fill="#f39dc5"/></g><g transform="translate(478.4 195.5) rotate(9) scale(0.91)"><use href="#fw" fill="#b08040" stroke="#f4efe0" stroke-opacity="0.5" stroke-width="0.55"/><use href="#fw" fill="url(#rg)"/><circle r="1.3" fill="#d7bf9f"/></g><g transform="translate(382.6 247.9) rotate(12) scale(1.02)"><use href="#fw" fill="#3090e0" stroke="#f4efe0" stroke-opacity="0.5" stroke-width="0.55"/><use href="#fw" fill="url(#rg)"/><circle r="1.3" fill="#97c7ef"/></g><g transform="translate(384.3 355.6) rotate(25) scale(0.91)"><use href="#fw" fill="#b08040" stroke="#f4efe0" stroke-opacity="0.5" stroke-width="0.55"/><use href="#fw" fill="url(#rg)"/><circle r="1.3" fill="#d7bf9f"/></g><g transform="translate(425.8 237.1) rotate(59) scale(0.94)"><use href="#fw" fill="#f0a0c0" stroke="#f4efe0" stroke-opacity="0.5" stroke-width="0.55"/><use href="#fw" fill="url(#rg)"/><circle r="1.3" fill="#f7cfdf"/></g><g transform="translate(320.1 250.1) rotate(56) scale(0.95)"><use href="#fw" fill="#a0b8d0" stroke="#f4efe0" stroke-opacity="0.5" stroke-width="0.55"/><use href="#fw" fill="url(#rg)"/><circle r="1.3" fill="#cfdbe7"/></g><g transform="translate(444.9 267.0) rotate(29) scale(0.91)"><use href="#fw" fill="#e03c30" stroke="#f4efe0" stroke-opacity="0.5" stroke-width="0.55"/><use href="#fw" fill="url(#rg)"/><circle r="1.3" fill="#ef9d97"/></g><g transform="translate(621.3 315.1) rotate(49) scale(0.95)"><use href="#fw" fill="#e03c30" stroke="#f4efe0" stroke-opacity="0.5" stroke-width="0.55"/><use href="#fw" fill="url(#rg)"/><circle r="1.3" fill="#ef9d97"/></g><g transform="translate(639.3 238.7) rotate(2) scale(1.07)"><use href="#fw" fill="#f09040" stroke="#f4efe0" stroke-opacity="0.5" stroke-width="0.55"/><use href="#fw" fill="url(#rg)"/><circle r="1.3" fill="#f7c79f"/></g><g transform="translate(520.0 379.7) rotate(34) scale(0.93)"><use href="#fw" fill="#3090e0" stroke="#f4efe0" stroke-opacity="0.5" stroke-width="0.55"/><use href="#fw" fill="url(#rg)"/><circle r="1.3" fill="#97c7ef"/></g><g transform="translate(364.6 258.3) rotate(34) scale(1.05)"><use href="#fw" fill="#d030a0" stroke="#f4efe0" stroke-opacity="0.5" stroke-width="0.55"/><use href="#fw" fill="url(#rg)"/><circle r="1.3" fill="#e797cf"/></g><g transform="translate(470.1 378.0) rotate(55) scale(0.92)"><use href="#fw" fill="#3090e0" stroke="#f4efe0" stroke-opacity="0.5" stroke-width="0.55"/><use href="#fw" fill="url(#rg)"/><circle r="1.3" fill="#97c7ef"/></g><g transform="translate(596.9 312.9) rotate(25) scale(1.04)"><use href="#fw" fill="#b0a0e0" stroke="#f4efe0" stroke-opacity="0.5" stroke-width="0.55"/><use href="#fw" fill="url(#rg)"/><circle r="1.3" fill="#d7cfef"/></g><g transform="translate(532.7 375.7) rotate(34) scale(0.91)"><use href="#fw" fill="#e03c30" stroke="#f4efe0" stroke-opacity="0.5" stroke-width="0.55"/><use href="#fw" fill="url(#rg)"/><circle r="1.3" fill="#ef9d97"/></g><g transform="translate(408.7 203.6) rotate(16) scale(0.92)"><use href="#fw" fill="#3090e0" stroke="#f4efe0" stroke-opacity="0.5" stroke-width="0.55"/><use href="#fw" fill="url(#rg)"/><circle r="1.3" fill="#97c7ef"/></g><g transform="translate(293.2 238.2) rotate(33) scale(1.05)"><use href="#fw" fill="#466ec8" stroke="#f4efe0" stroke-opacity="0.5" stroke-width="0.55"/><use href="#fw" fill="url(#rg)"/><circle r="1.3" fill="#a2b6e3"/></g><g transform="translate(576.7 259.2) rotate(23) scale(1.01)"><use href="#fw" fill="#e83c8c" stroke="#f4efe0" stroke-opacity="0.5" stroke-width="0.55"/><use href="#fw" fill="url(#rg)"/><circle r="1.3" fill="#f39dc5"/></g><g transform="translate(347.8 397.0) rotate(5) scale(0.90)"><use href="#fw" fill="#f09040" stroke="#f4efe0" stroke-opacity="0.5" stroke-width="0.55"/><use href="#fw" fill="url(#rg)"/><circle r="1.3" fill="#f7c79f"/></g><g transform="translate(594.5 356.9) rotate(2) scale(0.96)"><use href="#fw" fill="#f5c830" stroke="#f4efe0" stroke-opacity="0.5" stroke-width="0.55"/><use href="#fw" fill="url(#rg)"/><circle r="1.3" fill="#fae397"/></g><g transform="translate(584.9 400.4) rotate(18) scale(0.99)"><use href="#fw" fill="#466ec8" stroke="#f4efe0" stroke-opacity="0.5" stroke-width="0.55"/><use href="#fw" fill="url(#rg)"/><circle r="1.3" fill="#a2b6e3"/></g><g transform="translate(447.6 374.9) rotate(67) scale(1.02)"><use href="#fw" fill="#f5c830" stroke="#f4efe0" stroke-opacity="0.5" stroke-width="0.55"/><use href="#fw" fill="url(#rg)"/><circle r="1.3" fill="#fae397"/></g><g transform="translate(396.8 313.9) rotate(56) scale(1.06)"><use href="#fw" fill="#60b8e8" stroke="#f4efe0" stroke-opacity="0.5" stroke-width="0.55"/><use href="#fw" fill="url(#rg)"/><circle r="1.3" fill="#afdbf3"/></g><g transform="translate(546.5 356.0) rotate(14) scale(1.07)"><use href="#fw" fill="#50b050" stroke="#f4efe0" stroke-opacity="0.5" stroke-width="0.55"/><use href="#fw" fill="url(#rg)"/><circle r="1.3" fill="#a7d7a7"/></g><g transform="translate(379.9 281.0) rotate(31) scale(0.95)"><use href="#fw" fill="#f0e890" stroke="#f4efe0" stroke-opacity="0.5" stroke-width="0.55"/><use href="#fw" fill="url(#rg)"/><circle r="1.3" fill="#f7f3c7"/></g><g transform="translate(416.2 278.0) rotate(37) scale(0.97)"><use href="#fw" fill="#3090e0" stroke="#f4efe0" stroke-opacity="0.5" stroke-width="0.55"/><use href="#fw" fill="url(#rg)"/><circle r="1.3" fill="#97c7ef"/></g><g transform="translate(519.9 418.9) rotate(70) scale(0.95)"><use href="#fw" fill="#f09040" stroke="#f4efe0" stroke-opacity="0.5" stroke-width="0.55"/><use href="#fw" fill="url(#rg)"/><circle r="1.3" fill="#f7c79f"/></g><g transform="translate(600.7 258.1) rotate(8) scale(1.04)"><use href="#fw" fill="#f0a080" stroke="#f4efe0" stroke-opacity="0.5" stroke-width="0.55"/><use href="#fw" fill="url(#rg)"/><circle r="1.3" fill="#f7cfbf"/></g><g transform="translate(351.3 388.7) rotate(31) scale(1.05)"><use href="#fw" fill="#b0a0e0" stroke="#f4efe0" stroke-opacity="0.5" stroke-width="0.55"/><use href="#fw" fill="url(#rg)"/><circle r="1.3" fill="#d7cfef"/></g><g transform="translate(359.6 420.9) rotate(61) scale(1.05)"><use href="#fw" fill="#e83c8c" stroke="#f4efe0" stroke-opacity="0.5" stroke-width="0.55"/><use href="#fw" fill="url(#rg)"/><circle r="1.3" fill="#f39dc5"/></g><g transform="translate(481.8 203.6) rotate(13) scale(0.91)"><use href="#fw" fill="#f0a0c0" stroke="#f4efe0" stroke-opacity="0.5" stroke-width="0.55"/><use href="#fw" fill="url(#rg)"/><circle r="1.3" fill="#f7cfdf"/></g><g transform="translate(413.9 302.4) rotate(61) scale(1.03)"><use href="#fw" fill="#f5c830" stroke="#f4efe0" stroke-opacity="0.5" stroke-width="0.55"/><use href="#fw" fill="url(#rg)"/><circle r="1.3" fill="#fae397"/></g><g transform="translate(517.0 407.9) rotate(7) scale(0.90)"><use href="#fw" fill="#b0a0e0" stroke="#f4efe0" stroke-opacity="0.5" stroke-width="0.55"/><use href="#fw" fill="url(#rg)"/><circle r="1.3" fill="#d7cfef"/></g><g transform="translate(426.0 280.1) rotate(16) scale(0.91)"><use href="#fw" fill="#50b050" stroke="#f4efe0" stroke-opacity="0.5" stroke-width="0.55"/><use href="#fw" fill="url(#rg)"/><circle r="1.3" fill="#a7d7a7"/></g><g transform="translate(495.7 375.9) rotate(26) scale(1.02)"><use href="#fw" fill="#e03c30" stroke="#f4efe0" stroke-opacity="0.5" stroke-width="0.55"/><use href="#fw" fill="url(#rg)"/><circle r="1.3" fill="#ef9d97"/></g><g transform="translate(599.8 322.1) rotate(32) scale(0.91)"><use href="#fw" fill="#a0b8d0" stroke="#f4efe0" stroke-opacity="0.5" stroke-width="0.55"/><use href="#fw" fill="url(#rg)"/><circle r="1.3" fill="#cfdbe7"/></g><g transform="translate(384.3 202.7) rotate(15) scale(0.94)"><use href="#fw" fill="#f09040" stroke="#f4efe0" stroke-opacity="0.5" stroke-width="0.55"/><use href="#fw" fill="url(#rg)"/><circle r="1.3" fill="#f7c79f"/></g><g transform="translate(485.3 312.0) rotate(58) scale(1.01)"><use href="#fw" fill="#40a8a0" stroke="#f4efe0" stroke-opacity="0.5" stroke-width="0.55"/><use href="#fw" fill="url(#rg)"/><circle r="1.3" fill="#9fd3cf"/></g><g transform="translate(415.9 325.3) rotate(66) scale(0.98)"><use href="#fw" fill="#e6786e" stroke="#f4efe0" stroke-opacity="0.5" stroke-width="0.55"/><use href="#fw" fill="url(#rg)"/><circle r="1.3" fill="#f2bbb6"/></g><g transform="translate(373.4 418.3) rotate(13) scale(1.04)"><use href="#fw" fill="#3090e0" stroke="#f4efe0" stroke-opacity="0.5" stroke-width="0.55"/><use href="#fw" fill="url(#rg)"/><circle r="1.3" fill="#97c7ef"/></g><g transform="translate(394.6 271.0) rotate(7) scale(1.02)"><use href="#fw" fill="#3090e0" stroke="#f4efe0" stroke-opacity="0.5" stroke-width="0.55"/><use href="#fw" fill="url(#rg)"/><circle r="1.3" fill="#97c7ef"/></g><g transform="translate(438.3 322.5) rotate(69) scale(0.94)"><use href="#fw" fill="#f09040" stroke="#f4efe0" stroke-opacity="0.5" stroke-width="0.55"/><use href="#fw" fill="url(#rg)"/><circle r="1.3" fill="#f7c79f"/></g><g transform="translate(389.1 387.2) rotate(49) scale(0.98)"><use href="#fw" fill="#50b050" stroke="#f4efe0" stroke-opacity="0.5" stroke-width="0.55"/><use href="#fw" fill="url(#rg)"/><circle r="1.3" fill="#a7d7a7"/></g></svg>


<!-- selection ants -->
<svg class="a" style="left:300px;top:190px" width="400" height="218" viewBox="300 190 400 218">
<path d="M634 195.6H695.6V401H634" fill="none" stroke="#444" stroke-width="1" stroke-dasharray="3 2.6"/>
<path d="M626.5 195V401" fill="none" stroke="#eee" stroke-width="1"/><path d="M626.5 195V401" fill="none" stroke="#111" stroke-width="1" stroke-dasharray="3 2.6"/>
<path d="M304.5 195.2H634" fill="none" stroke="#000" stroke-width="0.8" stroke-dasharray="3 2.6"/>
</svg>
<!-- task bar -->
<div class="a" style="left:552.4px;top:405.5px;width:216.7px;height:17px;background:#4d4d4d;border-radius:2px"></div>
<div class="a" style="left:735.7px;top:405.5px;width:33.4px;height:17px;background:#3d3d3d;border-radius:0 2px 2px 0"></div>
<div class="a" style="left:554px;top:407.7px;width:2.2px;height:12.5px;background:#d6d6d6;border-radius:1px"></div>
<div class="a" style="left:559.5px;top:407.1px;width:61.3px;height:13.1px;border:0.8px solid #626262;border-radius:1.5px;background:#4a4a4a"></div>
<svg class="a" style="left:564.5px;top:410px" width="8" height="8" viewBox="0 0 8 8"><path d="M6.8 4A2.9 2.9 0 1 1 4 1.1" fill="none" stroke="#bdbdbd" stroke-width="0.7"/><path d="M4 4L6.2 1.8M5 1.3H6.7V3" fill="none" stroke="#bdbdbd" stroke-width="0.6"/></svg>
<div class="t" style="left:574.8px;top:410.9px;font-size:5.6px;color:#dedede">Generative Fill</div>

<svg class="a" style="left:627px;top:409px" width="106" height="10" viewBox="627 409 106 10">
<g fill="#e0e0e0" stroke="#e0e0e0">
<path d="M628.5 415.5L630.5 417.5L635 411" stroke-width="1.1" fill="none"/><path d="M628 418.2H633" stroke-width="0.5"/>
<rect x="646.5" y="410.5" width="7.5" height="6.8" fill="none" stroke-width="0.7"/><rect x="650.2" y="410.5" width="3.8" height="6.8" stroke="none"/><rect x="647.3" y="412.2" width="2" height="1.6" stroke="none"/><rect x="647.3" y="414.6" width="2" height="1.6" stroke="none"/>
<rect x="665.5" y="410.8" width="8" height="6.2" stroke="none"/><circle cx="669.5" cy="413.9" r="1.9" fill="#4d4d4d" stroke="none"/>
<path d="M684 413.5L687 410.5L690.5 414L687.5 417Z" stroke="none"/><circle cx="691.3" cy="416.2" r="0.9" stroke="none"/><path d="M685 411.3L686.3 410" stroke-width="0.6"/>
<circle cx="707.3" cy="414" r="3.3" fill="none" stroke-width="0.8"/><path d="M709.6 411.7A3.3 3.3 0 0 1 705 416.3Z" stroke="none"/>
<circle cx="723.4" cy="414" r="0.95" stroke="none"/><circle cx="726" cy="414" r="0.95" stroke="none"/><circle cx="728.6" cy="414" r="0.95" stroke="none"/>
</g></svg>
<div class="t" style="left:740.8px;top:411.6px;font-size:5.8px;color:#e6e6e6">Deselect</div>
<!-- status bar -->
<div class="t" style="left:24.4px;top:544.6px;font-size:6px;color:#e8e8e8">51.32%</div>
<div class="t" style="left:61.8px;top:545px;font-size:4.6px;color:#cfcfcf">1920 px x 1080 px (72 ppi)</div>
<svg class="a" style="left:133px;top:545px" width="3" height="5"><path d="M0.5 0.5L2.3 2.5L0.5 4.5" stroke="#bbb" stroke-width="0.6" fill="none"/></svg>
<!-- arrows -->
<svg class="a" style="left:0;top:0" width="1024" height="553">
<polygon points="16.9,67 53.2,51.9 47.9,63.7 203,68.3 203,70.9 47.9,72.3 53.6,84" fill="#b03cfd"/>
<polygon points="661.5,198.3 685.5,167.2 686.4,179.5 826.4,105.2 827.6,107.4 690.8,186.9 701.8,195.2" fill="#b03cfd"/>
</svg>


<!-- frame border -->
<div class="a" style="left:0;top:0;width:1024px;height:2px;background:#b03cfd"></div>
<div class="a" style="left:0;top:0;width:2px;height:553px;background:#b03cfd"></div>
<div class="a" style="left:1022px;top:0;width:2px;height:553px;background:#b03cfd"></div>
<div class="a" style="left:0;top:551px;width:1024px;height:2px;background:#ac44e8"></div>
<div class="a" style="left:2px;top:2px;width:1020px;height:1px;background:#4a2e62"></div>
<div class="a" style="left:2px;top:2px;width:1px;height:549px;background:#4a2e62"></div>
<div class="a" style="left:1021px;top:2px;width:1px;height:549px;background:#4a2e62"></div>
<div class="a" style="left:2px;top:550px;width:1020px;height:1px;background:#6a3e8e"></div>
</body></html>
